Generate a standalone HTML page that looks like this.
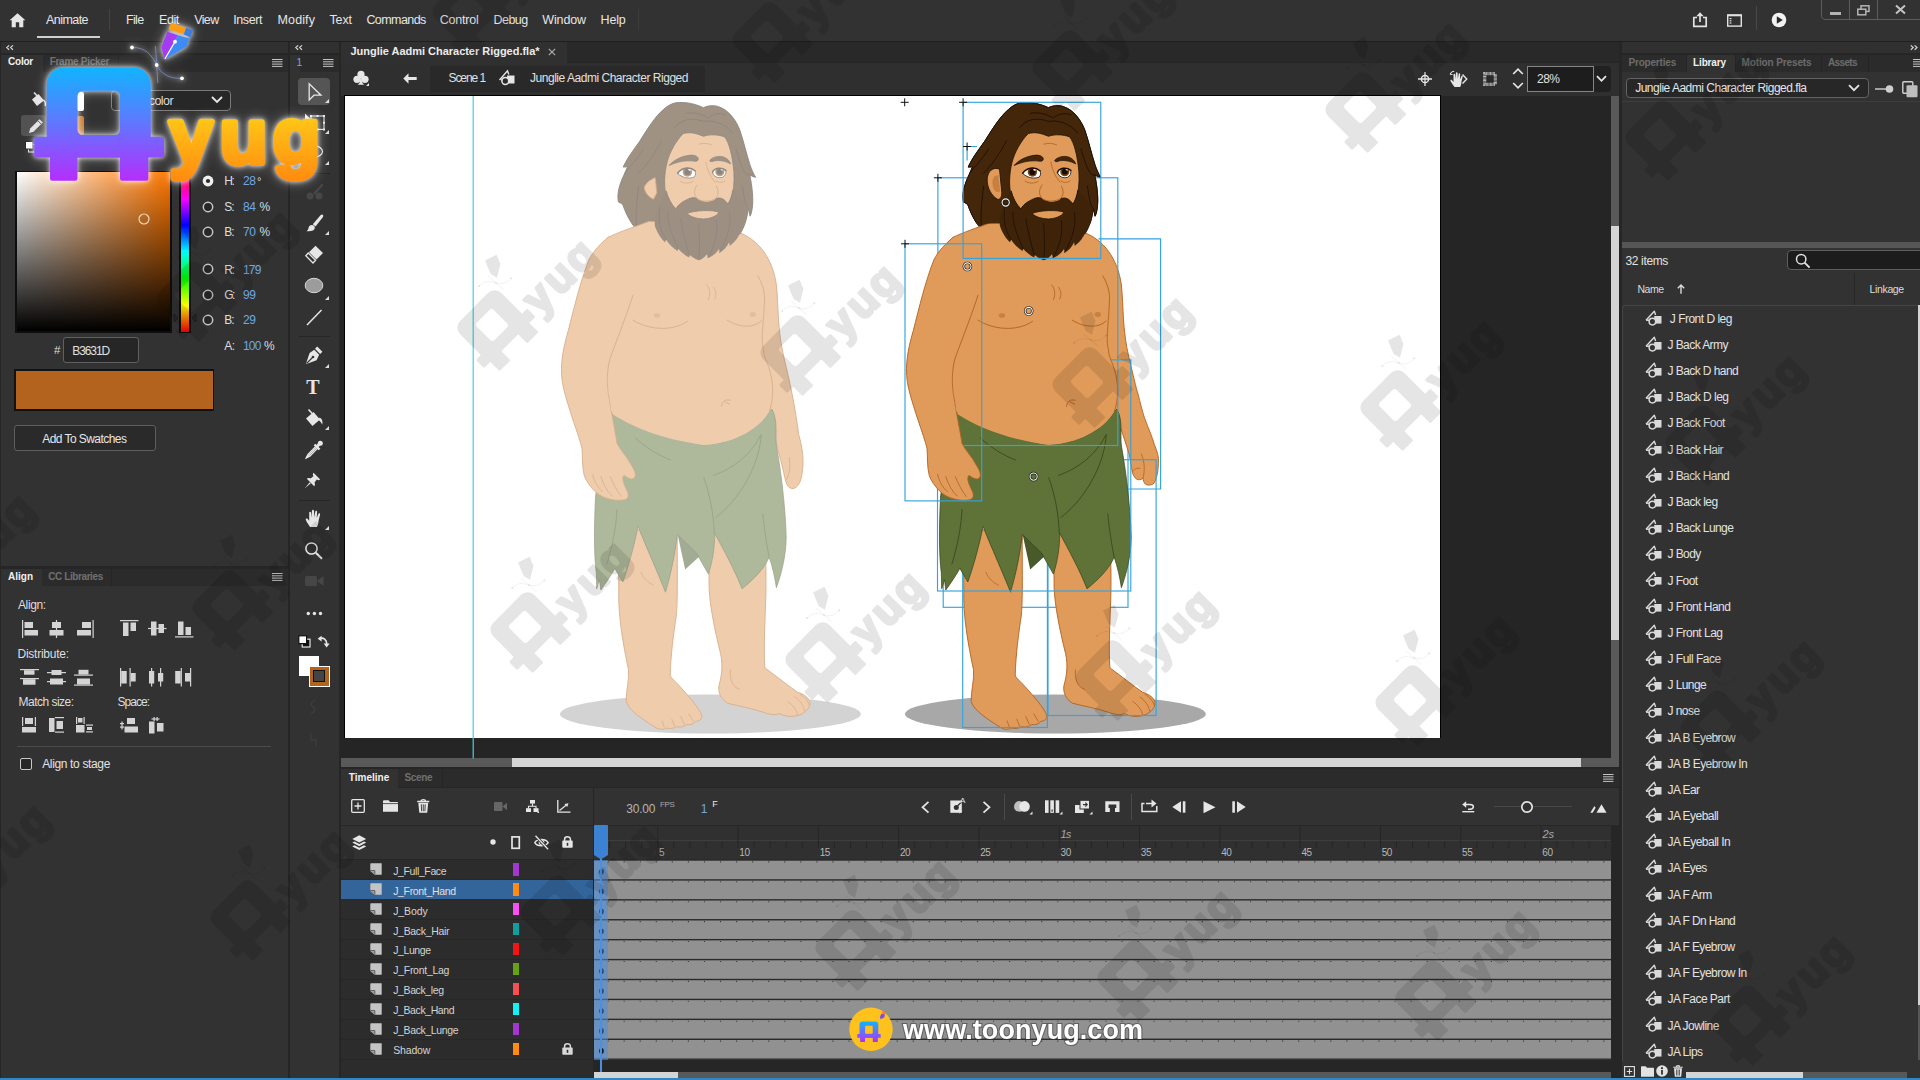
<!DOCTYPE html>
<html lang="en">
<head>
<meta charset="utf-8">
<title>Junglie Aadmi Character Rigged.fla - Animate</title>
<style>
*{box-sizing:border-box;margin:0;padding:0}
html,body{width:1920px;height:1080px;overflow:hidden;background:#262626}
body{position:relative;font-family:"Liberation Sans",sans-serif;font-size:12px;color:#dcdcdc;-webkit-font-smoothing:antialiased}
.abs{position:absolute}
.t{position:absolute;white-space:nowrap;line-height:1}
svg{position:absolute;overflow:visible}
#topbar{left:0;top:0;width:1920px;height:41px;background:#323232}
.menu{font-size:13.5px;color:#e4e4e4;top:13px;letter-spacing:-0.45px}
.panel{background:#323232}
.tabrow{background:#2a2a2a}
.tab{position:absolute;top:0;height:100%;font-size:11.5px;font-weight:bold;letter-spacing:-0.4px;line-height:19px;padding:0 6px;white-space:nowrap}
.tab.on{background:#323232;color:#ededed}
.tab.off{color:#6f6f6f;border-right:1px solid #333}
.burger{position:absolute;width:11px;height:9px;background:repeating-linear-gradient(#bdbdbd 0 1px,transparent 1px 2.67px)}
</style>
</head>
<body>

<!-- 10_topbar.py -->
<div id="topbar" class="abs"></div>
<div class="abs" style="left:0px;top:41px;width:1920px;height:1px;background:#1f1f1f;"></div>
<svg style="left:9px;top:12px" width="17" height="16" viewBox="0 0 17 16"><path d="M8.5 1.2 L16.4 8.3 H14.3 V15.2 H10.2 V10.3 H6.8 V15.2 H2.7 V8.3 H0.6 Z" fill="#e6e6e6"/></svg>
<div class="t" style="left:46.00px;top:13.75px;font-size:12.5px;color:#e6e6e6;letter-spacing:-0.551px;">Animate</div>
<div class="abs" style="left:37px;top:35.5px;width:62.5px;height:2px;background:#cfcfcf;"></div>
<div class="abs" style="left:109px;top:9px;width:1px;height:21px;background:#434343;"></div>
<div class="t" style="left:126.00px;top:13.75px;font-size:12.5px;color:#e6e6e6;letter-spacing:-0.660px;">File</div>
<div class="t" style="left:159.00px;top:13.75px;font-size:12.5px;color:#e6e6e6;letter-spacing:-0.435px;">Edit</div>
<div class="t" style="left:194.20px;top:13.75px;font-size:12.5px;color:#e6e6e6;letter-spacing:-0.617px;">View</div>
<div class="t" style="left:233.20px;top:13.75px;font-size:12.5px;color:#e6e6e6;letter-spacing:-0.410px;">Insert</div>
<div class="t" style="left:277.60px;top:13.75px;font-size:12.5px;color:#e6e6e6;letter-spacing:0.098px;">Modify</div>
<div class="t" style="left:329.50px;top:13.75px;font-size:12.5px;color:#e6e6e6;letter-spacing:-0.156px;">Text</div>
<div class="t" style="left:366.40px;top:13.75px;font-size:12.5px;color:#e6e6e6;letter-spacing:-0.576px;">Commands</div>
<div class="t" style="left:439.80px;top:13.75px;font-size:12.5px;color:#e6e6e6;letter-spacing:-0.228px;">Control</div>
<div class="t" style="left:493.60px;top:13.75px;font-size:12.5px;color:#e6e6e6;letter-spacing:-0.566px;">Debug</div>
<div class="t" style="left:542.20px;top:13.75px;font-size:12.5px;color:#e6e6e6;letter-spacing:-0.110px;">Window</div>
<div class="t" style="left:600.50px;top:13.75px;font-size:12.5px;color:#e6e6e6;letter-spacing:-0.152px;">Help</div>
<div class="abs" style="left:638px;top:9px;width:1px;height:21px;background:#3c3c3c;"></div>
<svg style="left:1692px;top:11px" width="16" height="17" viewBox="0 0 16 17"><path d="M5 6.5H1.8V15.3H14.2V6.5H11" fill="none" stroke="#e2e2e2" stroke-width="1.7"/><path d="M8 11V2.2" stroke="#e2e2e2" stroke-width="1.7"/><path d="M4.3 5.3L8 1.2L11.7 5.3Z" fill="#e2e2e2"/></svg>
<svg style="left:1727px;top:14px" width="15" height="13" viewBox="0 0 15 13"><rect x="0.7" y="0.9" width="13.6" height="11.2" fill="none" stroke="#e2e2e2" stroke-width="1.4"/><rect x="0.7" y="0.7" width="13.6" height="1.6" fill="#e2e2e2"/><rect x="2.6" y="4" width="1.8" height="1.2" fill="#e2e2e2"/><rect x="2.6" y="6.2" width="1.8" height="1.2" fill="#e2e2e2"/><rect x="2.6" y="8.4" width="1.8" height="1.2" fill="#e2e2e2"/></svg>
<div class="abs" style="left:1756px;top:6px;width:1px;height:24px;background:#484848;"></div>
<svg style="left:1771px;top:12px" width="16" height="16" viewBox="0 0 16 16"><circle cx="8" cy="8" r="7.3" fill="#f2f2f2"/><path d="M5.8 4.3L11.8 8L5.8 11.7Z" fill="#2a2a2a"/></svg>
<div class="abs" style="left:1821px;top:-2px;width:101px;height:22px;border:1px solid #5c5c5c;border-radius:0 0 0 4px;background:#323232"></div>
<div class="abs" style="left:1849px;top:0px;width:1px;height:19px;background:#5c5c5c;"></div>
<div class="abs" style="left:1877px;top:0px;width:1px;height:19px;background:#5c5c5c;"></div>
<div class="abs" style="left:1830px;top:11.5px;width:10.5px;height:3px;background:#b4b4b4;"></div>
<svg style="left:1857px;top:5px" width="13" height="11" viewBox="0 0 13 11"><rect x="4" y="0.8" width="8" height="5.6" fill="none" stroke="#b4b4b4" stroke-width="1.5"/><rect x="0.8" y="4.2" width="8" height="5.6" fill="#323232" stroke="#b4b4b4" stroke-width="1.5"/></svg>
<svg style="left:1895px;top:5px" width="11" height="9" viewBox="0 0 11 9"><path d="M1 0.5L10 8.5M10 0.5L1 8.5" stroke="#c4c4c4" stroke-width="2"/></svg>
<!-- 20_leftdock.py -->
<div class="abs" style="left:1px;top:42px;width:286.5px;height:11px;background:#303030;"></div>
<svg style="left:6px;top:45px" width="8" height="6" viewBox="0 0 8 6"><path d="M3.2 .4L.8 2.6L3.2 4.8M7 .4L4.6 2.6L7 4.8" fill="none" stroke="#d8d8d8" stroke-width="1.2"/></svg>
<div class="abs" style="left:1px;top:54.5px;width:286.5px;height:17px;background:#2b2b2b;"></div>
<div class="abs" style="left:1px;top:54.5px;width:41.5px;height:18px;background:#323232;"></div>
<div class="abs" style="left:118px;top:54.5px;width:1px;height:17px;background:#252525;"></div>
<div class="abs" style="left:1px;top:71.5px;width:286.5px;height:494px;background:#323232;"></div>
<div class="t" style="left:8.00px;top:57.00px;font-size:10px;color:#f0f0f0;letter-spacing:-0.223px;font-weight:bold;">Color</div>
<div class="t" style="left:49.70px;top:57.00px;font-size:10px;color:#707070;letter-spacing:-0.286px;font-weight:bold;">Frame Picker</div>
<svg style="left:272px;top:58.5px" width="10.5" height="8" viewBox="0 0 10.5 8"><path d="M0 .5H10.5M0 2.8H10.5M0 5.1H10.5M0 7.4H10.5" stroke="#c4c4c4" stroke-width="1"/></svg>
<svg style="left:27px;top:90px" width="20" height="20" viewBox="0 0 20 20"><path d="M5 9.5L11.5 4L17 10.5L10 16Z" fill="#e4e4e4"/><path d="M7 2.5L12 8" stroke="#e4e4e4" stroke-width="1.6" fill="none"/><path d="M16.5 10C18.5 12 19 14 18 16" stroke="#e4e4e4" stroke-width="1.4" fill="none"/></svg>
<div class="abs" style="left:21px;top:115px;width:25px;height:21px;background:#525252;border-radius:3px"></div>
<svg style="left:27px;top:117px" width="18" height="18" viewBox="0 0 18 18"><path d="M2 16L3.2 11.5L12.5 2.2L15.8 5.5L6.5 14.8Z" fill="#e4e4e4"/><path d="M11 3.8L14.2 7" stroke="#525252" stroke-width="1"/></svg>
<svg style="left:25px;top:141px" width="12" height="12" viewBox="0 0 12 12"><rect x="3.5" y="3.5" width="7.5" height="7.5" fill="none" stroke="#e4e4e4" stroke-width="1"/><rect x=".5" y=".5" width="7.5" height="7.5" fill="#fff" stroke="#222" stroke-width="1"/></svg>
<div class="abs" style="left:77px;top:92px;width:7px;height:19px;background:#ffffff;border-radius:2px"></div>
<div class="abs" style="left:77px;top:116px;width:7px;height:19px;background:#c97a2e;border-radius:2px"></div>
<div class="abs" style="left:111px;top:90px;width:120px;height:21px;border:1px solid #7a7a7a;border-radius:4px;background:#272727"></div>
<div class="t" style="left:121.00px;top:94.75px;font-size:12.5px;color:#dcdcdc;letter-spacing:-0.578px;">Solid color</div>
<svg style="left:211px;top:96px" width="12" height="8" viewBox="0 0 12 8"><path d="M1 1L6 6L11 1" fill="none" stroke="#e8e8e8" stroke-width="1.8"/></svg>
<div class="abs" style="left:15px;top:170.5px;width:157px;height:162.5px;background:#0e0e0e;"></div>
<div class="abs" style="left:17px;top:172px;width:153px;height:159px;background:linear-gradient(to top,#000,rgba(0,0,0,0)),linear-gradient(to right,#fff,#ff7700)"></div>
<svg style="left:138px;top:213px" width="12" height="12"><circle cx="6" cy="6" r="5" fill="none" stroke="#ead9c4" stroke-width="1.2"/></svg>
<div class="abs" style="left:179px;top:170.5px;width:11.5px;height:162.5px;background:#0e0e0e;"></div>
<div class="abs" style="left:180.5px;top:172px;width:8.5px;height:159.5px;background:linear-gradient(to bottom,#f00 0%,#f0f 16.6%,#00f 33.3%,#0ff 50%,#0f0 66.6%,#ff0 83.3%,#f00 100%)"></div>
<svg style="left:173px;top:313px" width="24" height="10" viewBox="0 0 24 10"><path d="M1 1L5 5L1 9Z M23 1L19 5L23 9Z" fill="#2a2a2a" stroke="#1c1c1c" stroke-width=".8"/></svg>
<svg style="left:201.8px;top:174.8px" width="12" height="12"><circle cx="6" cy="6" r="5.4" fill="#efefef"/><circle cx="6" cy="6" r="2.1" fill="#2a2a2a"/></svg>
<div class="t" style="left:224.20px;top:175.40px;font-size:12px;color:#dedede;letter-spacing:-1.250px;">H:</div>
<div class="t" style="left:243.00px;top:175.40px;font-size:12px;color:#6fa8e6;letter-spacing:-0.524px;">28</div>
<div class="t" style="left:257.00px;top:175.50px;font-size:11px;color:#dedede;">°</div>
<svg style="left:201.8px;top:200.7px" width="12" height="12"><circle cx="6" cy="6" r="4.7" fill="#272727" stroke="#c6c6c6" stroke-width="1.5"/></svg>
<div class="t" style="left:224.20px;top:201.30px;font-size:12px;color:#dedede;letter-spacing:-0.919px;">S:</div>
<div class="t" style="left:243.00px;top:201.30px;font-size:12px;color:#6fa8e6;letter-spacing:-0.524px;">84</div>
<div class="t" style="left:259.50px;top:201.30px;font-size:12px;color:#dedede;">%</div>
<svg style="left:201.8px;top:225.7px" width="12" height="12"><circle cx="6" cy="6" r="4.7" fill="#272727" stroke="#c6c6c6" stroke-width="1.5"/></svg>
<div class="t" style="left:224.20px;top:226.30px;font-size:12px;color:#dedede;letter-spacing:-0.919px;">B:</div>
<div class="t" style="left:243.00px;top:226.30px;font-size:12px;color:#6fa8e6;letter-spacing:-0.524px;">70</div>
<div class="t" style="left:259.50px;top:226.30px;font-size:12px;color:#dedede;">%</div>
<svg style="left:201.8px;top:263.2px" width="12" height="12"><circle cx="6" cy="6" r="4.7" fill="#272727" stroke="#c6c6c6" stroke-width="1.5"/></svg>
<div class="t" style="left:224.20px;top:263.80px;font-size:12px;color:#dedede;letter-spacing:-1.250px;">R:</div>
<div class="t" style="left:243.00px;top:263.80px;font-size:12px;color:#6fa8e6;letter-spacing:-0.840px;">179</div>
<svg style="left:201.8px;top:288.7px" width="12" height="12"><circle cx="6" cy="6" r="4.7" fill="#272727" stroke="#c6c6c6" stroke-width="1.5"/></svg>
<div class="t" style="left:224.20px;top:289.30px;font-size:12px;color:#dedede;letter-spacing:-1.584px;">G:</div>
<div class="t" style="left:243.00px;top:289.30px;font-size:12px;color:#6fa8e6;letter-spacing:-0.524px;">99</div>
<svg style="left:201.8px;top:313.7px" width="12" height="12"><circle cx="6" cy="6" r="4.7" fill="#272727" stroke="#c6c6c6" stroke-width="1.5"/></svg>
<div class="t" style="left:224.20px;top:314.30px;font-size:12px;color:#dedede;letter-spacing:-0.919px;">B:</div>
<div class="t" style="left:243.00px;top:314.30px;font-size:12px;color:#6fa8e6;letter-spacing:-0.524px;">29</div>
<div class="t" style="left:224.20px;top:340.20px;font-size:12px;color:#dedede;letter-spacing:-0.419px;">A:</div>
<div class="t" style="left:243.00px;top:340.20px;font-size:12px;color:#6fa8e6;letter-spacing:-0.840px;">100</div>
<div class="t" style="left:264.00px;top:340.20px;font-size:12px;color:#dedede;">%</div>
<div class="t" style="left:54.00px;top:345.25px;font-size:11.5px;color:#dcdcdc;">#</div>
<div class="abs" style="left:63px;top:337px;width:76px;height:25.5px;border:1px solid #606060;border-radius:3px;background:#262626"></div>
<div class="t" style="left:72.20px;top:344.50px;font-size:12px;color:#e0e0e0;letter-spacing:-1.061px;">B3631D</div>
<div class="abs" style="left:14px;top:368.5px;width:200px;height:42px;background:#121212;"></div>
<div class="abs" style="left:15.5px;top:370.5px;width:197px;height:38px;background:#b3631d;"></div>
<div class="abs" style="left:14px;top:425px;width:142px;height:26px;border:1px solid #5e5e5e;border-radius:3px;background:#2a2a2a"></div>
<div class="t" style="left:42.20px;top:433.00px;font-size:12px;color:#e6e6e6;letter-spacing:-0.553px;">Add To Swatches</div>
<!-- 22_align.py -->
<div class="abs" style="left:1px;top:568.5px;width:286.5px;height:17.5px;background:#2b2b2b;"></div>
<div class="abs" style="left:1px;top:568.5px;width:40.5px;height:18px;background:#323232;"></div>
<div class="abs" style="left:111px;top:568.5px;width:1px;height:17.5px;background:#252525;"></div>
<div class="abs" style="left:1px;top:586px;width:286.5px;height:493px;background:#323232;"></div>
<div class="t" style="left:8.00px;top:571.50px;font-size:10px;color:#f0f0f0;font-weight:bold;">Align</div>
<div class="t" style="left:48.30px;top:571.50px;font-size:10px;color:#707070;letter-spacing:-0.415px;font-weight:bold;">CC Libraries</div>
<svg style="left:272px;top:573px" width="10.5" height="8" viewBox="0 0 10.5 8"><path d="M0 .5H10.5M0 2.8H10.5M0 5.1H10.5M0 7.4H10.5" stroke="#c4c4c4" stroke-width="1"/></svg>
<div class="t" style="left:18.00px;top:599.00px;font-size:12px;color:#dedede;letter-spacing:-0.386px;">Align:</div>
<svg style="left:22px;top:619.5px" width="17" height="18" viewBox="0 0 17 18" fill="#d4d4d4"><rect x="0" y="0" width="1.2" height="18"/><rect x="2.5" y="2" width="8.5" height="6"/><rect x="2.5" y="10" width="13.5" height="5.5"/></svg>
<svg style="left:49px;top:619.5px" width="15" height="18" viewBox="0 0 15 18" fill="#d4d4d4"><rect x="6.9" y="0" width="1.2" height="18"/><rect x="3" y="2" width="9" height="6"/><rect x="0.5" y="10" width="14" height="5.5"/></svg>
<svg style="left:76.5px;top:619.5px" width="17" height="18" viewBox="0 0 17 18" fill="#d4d4d4"><rect x="15.5" y="0" width="1.2" height="18"/><rect x="5" y="2" width="9" height="6"/><rect x="0" y="10" width="14" height="5.5"/></svg>
<svg style="left:120px;top:619.5px" width="19" height="18" viewBox="0 0 19 18" fill="#d4d4d4"><rect x="0" y="0" width="18.5" height="1.2"/><rect x="3" y="2.5" width="5.5" height="13.5"/><rect x="10.5" y="2.5" width="5.5" height="8.5"/></svg>
<svg style="left:147.5px;top:619.5px" width="19" height="18" viewBox="0 0 19 18" fill="#d4d4d4"><rect x="0" y="7.9" width="18.5" height="1.2"/><rect x="3" y="1.5" width="5.5" height="14"/><rect x="10.5" y="4" width="5.5" height="9"/></svg>
<svg style="left:174.5px;top:619.5px" width="19" height="18" viewBox="0 0 19 18" fill="#d4d4d4"><rect x="0" y="16.3" width="18.5" height="1.2"/><rect x="3" y="1.5" width="5.5" height="13.5"/><rect x="10.5" y="7" width="5.5" height="8"/></svg>
<div class="t" style="left:17.50px;top:648.00px;font-size:12px;color:#dedede;letter-spacing:-0.247px;">Distribute:</div>
<svg style="left:19.5px;top:667.5px" width="19" height="18" viewBox="0 0 19 18" fill="#d4d4d4"><rect x="0" y="1" width="19" height="1.2"/><rect x="4" y="2.2" width="10.5" height="4.5"/><rect x="0" y="10" width="19" height="1.2"/><rect x="3" y="11.2" width="12.5" height="5.5"/></svg>
<svg style="left:46.8px;top:667.5px" width="19" height="18" viewBox="0 0 19 18" fill="#d4d4d4"><rect x="0" y="4" width="19" height="1.2"/><rect x="4.5" y="2" width="10" height="5"/><rect x="0" y="13" width="19" height="1.2"/><rect x="3" y="10.5" width="13" height="6"/></svg>
<svg style="left:74px;top:667.5px" width="19" height="18" viewBox="0 0 19 18" fill="#d4d4d4"><rect x="0" y="6.5" width="19" height="1.2"/><rect x="4.5" y="1.8" width="10" height="4.7"/><rect x="0" y="16.5" width="19" height="1.2"/><rect x="3" y="10.5" width="13" height="6"/></svg>
<svg style="left:120px;top:667.5px" width="18" height="19" viewBox="0 0 18 19" fill="#d4d4d4"><rect x="0" y="0" width="1.2" height="18.5"/><rect x="1.2" y="3" width="5.5" height="12.5"/><rect x="9.5" y="0" width="1.2" height="18.5"/><rect x="10.7" y="5" width="5" height="8.5"/></svg>
<svg style="left:147.5px;top:667.5px" width="17" height="19" viewBox="0 0 17 19" fill="#d4d4d4"><rect x="3" y="0" width="1.2" height="18.5"/><rect x="1" y="3" width="5.2" height="12.5"/><rect x="12" y="0" width="1.2" height="18.5"/><rect x="10" y="5" width="5.2" height="8.5"/></svg>
<svg style="left:174px;top:667.5px" width="18" height="19" viewBox="0 0 18 19" fill="#d4d4d4"><rect x="6.7" y="0" width="1.2" height="18.5"/><rect x="1.2" y="3" width="5.5" height="12.5"/><rect x="16" y="0" width="1.2" height="18.5"/><rect x="11" y="5" width="5" height="8.5"/></svg>
<div class="t" style="left:18.50px;top:695.80px;font-size:12px;color:#dedede;letter-spacing:-0.517px;">Match size:</div>
<div class="t" style="left:117.50px;top:695.80px;font-size:12px;color:#dedede;letter-spacing:-0.977px;">Space:</div>
<svg style="left:22.4px;top:716.5px" width="14" height="16" viewBox="0 0 14 16" fill="#d4d4d4"><rect x="0" y="0" width="1.2" height="9"/><rect x="12.8" y="0" width="1.2" height="9"/><rect x="3" y="1" width="8" height="6"/><rect x="0" y="10" width="14" height="5.5"/></svg>
<svg style="left:49.4px;top:716.5px" width="15" height="16" viewBox="0 0 15 16" fill="#d4d4d4"><rect x="0" y="1" width="5.5" height="14"/><rect x="6" y="0" width="9" height="1.2"/><rect x="6" y="14.5" width="9" height="1.2"/><rect x="7.5" y="4" width="6.5" height="8"/></svg>
<svg style="left:76px;top:716.5px" width="17" height="16" viewBox="0 0 17 16" fill="#d4d4d4"><rect x="0" y="0" width="1.2" height="7"/><rect x="7.5" y="0" width="1.2" height="7"/><rect x="2" y="1" width="4.5" height="4.5"/><rect x="0" y="8" width="8.5" height="7.5"/><rect x="10" y="7.5" width="7" height="1.2"/><rect x="10" y="14.3" width="7" height="1.2"/><rect x="11" y="10" width="5" height="3"/></svg>
<svg style="left:120px;top:716.5px" width="18" height="16" viewBox="0 0 18 16" fill="#d4d4d4"><rect x="7" y="1" width="8" height="6"/><rect x="4.5" y="9.5" width="13.5" height="6"/><rect x="1.4" y="4.5" width="1.2" height="8"/><rect x="0" y="6" width="4" height="1.2"/><rect x="0" y="9.5" width="4" height="1.2"/></svg>
<svg style="left:148.4px;top:716.5px" width="17" height="17" viewBox="0 0 17 17" fill="#d4d4d4"><rect x="1" y="4.5" width="5.5" height="12"/><rect x="9" y="6" width="6.5" height="8.5"/><rect x="3.5" y="1.4" width="8" height="1.2"/><rect x="5.5" y="0" width="1.2" height="4"/><rect x="8.5" y="0" width="1.2" height="4"/></svg>
<div class="abs" style="left:16.5px;top:746px;width:254px;height:1px;background:#4c4c4c;"></div>
<div class="abs" style="left:20px;top:758px;width:12px;height:12px;border:1.6px solid #c8c8c8;border-radius:2px;background:#272727"></div>
<div class="t" style="left:42.20px;top:757.60px;font-size:12px;color:#e2e2e2;letter-spacing:-0.351px;">Align to stage</div>
<!-- 24_tools.py -->
<div class="abs" style="left:290px;top:42px;width:49px;height:11px;background:#303030;"></div>
<svg style="left:295px;top:45px" width="8" height="6" viewBox="0 0 8 6"><path d="M3.2 .4L.8 2.6L3.2 4.8M7 .4L4.6 2.6L7 4.8" fill="none" stroke="#d8d8d8" stroke-width="1.2"/></svg>
<div class="abs" style="left:290px;top:54.5px;width:49px;height:17px;background:#2b2b2b;"></div>
<div class="abs" style="left:290px;top:54.5px;width:10px;height:18px;background:#323232;"></div>
<div class="abs" style="left:290px;top:71.5px;width:49px;height:1007px;background:#323232;"></div>
<div class="t" style="left:296.50px;top:56.75px;font-size:10.5px;color:#6fa8e6;">1</div>
<svg style="left:323px;top:58.5px" width="10.5" height="8" viewBox="0 0 10.5 8"><path d="M0 .5H10.5M0 2.8H10.5M0 5.1H10.5M0 7.4H10.5" stroke="#c4c4c4" stroke-width="1"/></svg>
<div class="abs" style="left:298px;top:77.5px;width:32px;height:27.5px;background:#555555;border-radius:4px"></div>
<svg style="left:306px;top:81px" width="18" height="22" viewBox="0 0 18 22"><path d="M3.2 2.8V19L8 14.2H15Z" fill="none" stroke="#e6e6e6" stroke-width="1.3" stroke-linejoin="miter"/></svg>
<svg style="left:325px;top:99px" width="4" height="4" viewBox="0 0 4 4"><path d="M4 0V4H0Z" fill="#dcdcdc"/></svg>
<svg style="left:304px;top:113px" width="22" height="18" viewBox="0 0 22 18"><rect x="7" y="3" width="13" height="13.4" fill="none" stroke="#e6e6e6" stroke-width="1.1"/><path d="M6 2h2v2h-2zM12.5 2h2v2h-2zM19 2h2v2h-2zM19 8.7h2v2h-2zM19 15.4h2v2h-2zM12.5 15.4h2v2h-2zM6 15.4h2v2h-2z" fill="#e6e6e6"/><path d="M1 0.5L9 8.5H1Z" fill="#e6e6e6"/></svg>
<svg style="left:325px;top:130px" width="4" height="4" viewBox="0 0 4 4"><path d="M4 0V4H0Z" fill="#dcdcdc"/></svg>
<svg style="left:304px;top:144px" width="20" height="16" viewBox="0 0 20 16"><ellipse cx="10" cy="7.5" rx="8.5" ry="5.8" fill="none" stroke="#e6e6e6" stroke-width="1.2"/></svg>
<svg style="left:325px;top:161px" width="4" height="4" viewBox="0 0 4 4"><path d="M4 0V4H0Z" fill="#dcdcdc"/></svg>
<div class="abs" style="left:303px;top:172.5px;width:27px;height:1px;background:#262626;"></div>
<svg style="left:306px;top:183px" width="18" height="17" viewBox="0 0 18 17" fill="#474747"><path d="M16 0.5L17.5 2L9 12L7 10Z"/><circle cx="4" cy="13" r="3.5"/><circle cx="13" cy="13" r="3.5"/></svg>
<svg style="left:306px;top:214px" width="18" height="18" viewBox="0 0 18 18" fill="#e6e6e6"><path d="M16 0.5C17.2 0.5 17.6 1.8 17 3L9.5 12.5L6.8 10.2L14.5 1.2C15 0.7 15.5 0.5 16 0.5Z"/><path d="M5.8 11C7.5 11 9 12.3 8.8 14C8.5 16.5 5 17.8 0.5 17.2C2.5 16 2.2 14.5 2.8 13C3.3 11.8 4.5 11 5.8 11Z"/></svg>
<svg style="left:325px;top:231px" width="4" height="4" viewBox="0 0 4 4"><path d="M4 0V4H0Z" fill="#dcdcdc"/></svg>
<svg style="left:305px;top:245px" width="19" height="19" viewBox="0 0 19 19"><path d="M10.5 0.8L18 8L11.5 14.5L4 7.2Z" fill="#e6e6e6"/><path d="M3.2 8L10.6 15.3L8 18L0.8 10.8Z" fill="none" stroke="#e6e6e6" stroke-width="1.3"/></svg>
<svg style="left:304px;top:277px" width="20" height="17" viewBox="0 0 20 17"><ellipse cx="10" cy="8.5" rx="8.8" ry="7.2" fill="#9c9c9c" stroke="#d8d8d8" stroke-width="1"/></svg>
<svg style="left:325px;top:296px" width="4" height="4" viewBox="0 0 4 4"><path d="M4 0V4H0Z" fill="#dcdcdc"/></svg>
<svg style="left:306px;top:309px" width="17" height="17" viewBox="0 0 17 17"><path d="M1 16L15.5 1" stroke="#e6e6e6" stroke-width="1.5"/></svg>
<div class="abs" style="left:299px;top:336px;width:31px;height:1px;background:#262626;"></div>
<svg style="left:305px;top:346px" width="18" height="19" viewBox="0 0 18 19" fill="#e6e6e6"><path d="M12.2 0.6L17.4 5.8L15.2 8L10 2.8Z"/><path d="M9.2 3.8L14.2 8.8L11.5 14.2L0.8 18.2L4.6 7Z"/><path d="M1.5 17.5L7.5 11.5" stroke="#323232" stroke-width="1.1"/><circle cx="8" cy="11" r="1.3" fill="#323232"/></svg>
<svg style="left:325px;top:364px" width="4" height="4" viewBox="0 0 4 4"><path d="M4 0V4H0Z" fill="#dcdcdc"/></svg>
<div class="t" style="left:306.30px;top:377.00px;font-size:20px;color:#e6e6e6;font-weight:bold;font-family:'Liberation Serif',serif;">T</div>
<svg style="left:305px;top:408px" width="19" height="19" viewBox="0 0 19 19" fill="#e6e6e6"><path d="M1 10.5L8.5 4L15 11.5L7.5 18Z"/><path d="M3.5 1.5L9.5 8" stroke="#e6e6e6" stroke-width="1.6" fill="none"/><path d="M14.5 9.5C16.8 10.5 18 13 17.3 16.5C16 15 15.5 13 13.5 12Z"/></svg>
<svg style="left:325px;top:426px" width="4" height="4" viewBox="0 0 4 4"><path d="M4 0V4H0Z" fill="#dcdcdc"/></svg>
<svg style="left:305px;top:440px" width="19" height="19" viewBox="0 0 19 19"><path d="M12 7L4 15C3 16 2 16.5 1.6 17.6C2.8 17.2 3.2 16.2 4.2 15.2" fill="none" stroke="#e6e6e6" stroke-width="1.3"/><path d="M11 6.3L3 14.3L1.3 17.8L4.8 16.1L12.8 8.1" fill="none" stroke="#e6e6e6" stroke-width="1.3"/><path d="M9.5 4.5L14.5 9.5" stroke="#e6e6e6" stroke-width="2.4"/><path d="M12 6.5L15.2 3.3" stroke="#e6e6e6" stroke-width="3"/><circle cx="15.3" cy="3.2" r="2.5" fill="#e6e6e6"/></svg>
<svg style="left:304px;top:472px" width="17" height="17" viewBox="0 0 17 17" fill="#e6e6e6"><path d="M9.5 0.8L16.2 7.5L14.6 8.2L12.8 7.6L10.5 10.5C11.2 12 11 13.3 10.2 14.2L2.8 6.8C3.7 6 5 5.8 6.5 6.5L9.4 4.2L8.8 2.4Z"/><path d="M5.8 10.2L6.8 11.2L0.6 16.4Z"/></svg>
<div class="abs" style="left:299px;top:500px;width:31px;height:1px;background:#262626;"></div>
<svg style="left:305px;top:509px" width="18" height="19" viewBox="0 0 18 19" fill="#e6e6e6"><path d="M5 18C3.5 15.5 1.5 13 0.8 10.8C0.5 9.6 1.8 9 2.7 9.9L4.2 11.8V3.6C4.2 2.3 6 2.3 6.1 3.6L6.5 8.5L7 1.8C7.1 0.5 8.9 0.5 9 1.8L9.2 8.5L10.3 2.6C10.5 1.3 12.2 1.6 12.1 2.9L11.7 9L13.4 4.8C13.9 3.6 15.4 4.2 15.1 5.4L13.6 11.5C13.4 14 13 16 12 18Z"/></svg>
<svg style="left:325px;top:526px" width="4" height="4" viewBox="0 0 4 4"><path d="M4 0V4H0Z" fill="#dcdcdc"/></svg>
<svg style="left:304px;top:541px" width="20" height="19" viewBox="0 0 20 19"><circle cx="7.5" cy="7.5" r="5.6" fill="none" stroke="#e6e6e6" stroke-width="1.5"/><path d="M11.8 11.8L18 17.8" stroke="#e6e6e6" stroke-width="2"/></svg>
<svg style="left:305px;top:575px" width="19" height="12" viewBox="0 0 19 12" fill="#464646"><rect x="0" y="1" width="12" height="10" rx="1.5"/><path d="M12 6L18.5 1V11Z"/></svg>
<svg style="left:306px;top:611px" width="17" height="5" viewBox="0 0 17 5" fill="#e6e6e6"><circle cx="2.3" cy="2.5" r="1.7"/><circle cx="8.4" cy="2.5" r="1.7"/><circle cx="14.5" cy="2.5" r="1.7"/></svg>
<svg style="left:298px;top:635px" width="13" height="13" viewBox="0 0 13 13"><rect x="4.2" y="4.2" width="7.8" height="7.8" fill="#111" stroke="#e6e6e6" stroke-width="1.2"/><rect x="0.8" y="0.8" width="7.8" height="7.8" fill="#fff" stroke="#111" stroke-width="1.2"/></svg>
<svg style="left:317px;top:635px" width="13" height="13" viewBox="0 0 13 13"><path d="M2.5 3.5C6.5 2.2 9.8 4.5 9.8 9.5" fill="none" stroke="#e6e6e6" stroke-width="1.6"/><path d="M0.6 3.8L4.6 0.8V6.6Z" fill="#e6e6e6"/><path d="M6.6 8.5H12.6L9.6 12.6Z" fill="#e6e6e6"/></svg>
<div class="abs" style="left:299px;top:655.5px;width:20px;height:20.5px;background:#ffffff;"></div>
<div class="abs" style="left:308.5px;top:665.5px;width:21px;height:21px;background:#fff"></div>
<div class="abs" style="left:309.5px;top:666.5px;width:19px;height:19px;background:#b3631d"></div>
<div class="abs" style="left:313px;top:670px;width:12px;height:12px;background:#111"></div>
<div class="abs" style="left:314px;top:671px;width:10px;height:10px;background:#444"></div>
<svg style="left:308px;top:699px" width="10" height="16" viewBox="0 0 10 16"><path d="M8 1C2 3 2 6 5 8C8 10 8 13 2 15" fill="none" stroke="#3d3d3d" stroke-width="1.3"/></svg>
<svg style="left:310px;top:732px" width="8" height="16" viewBox="0 0 8 16"><path d="M1 1V8H6V15" fill="none" stroke="#3d3d3d" stroke-width="1.3"/></svg>
<!-- 30_stagechrome.py -->
<div class="abs" style="left:341px;top:42px;width:1278px;height:20px;background:#292929;"></div>
<div class="abs" style="left:341px;top:42px;width:225.5px;height:20.5px;background:#303030;"></div>
<div class="t" style="left:350.50px;top:46.00px;font-size:11px;color:#ececec;letter-spacing:-0.020px;font-weight:bold;">Junglie Aadmi Character Rigged.fla*</div>
<svg style="left:548px;top:48px" width="8" height="8" viewBox="0 0 8 8"><path d="M.8 .8L7.2 7.2M7.2 .8L.8 7.2" stroke="#b0b0b0" stroke-width="1.1"/></svg>
<div class="abs" style="left:341px;top:62.5px;width:1278px;height:33px;background:#2f2f2f;"></div>
<div class="abs" style="left:430px;top:66px;width:275px;height:25.5px;background:#292929;border-radius:2px"></div>
<svg style="left:353px;top:70px" width="17" height="17" viewBox="0 0 17 17" fill="#e6e6e6"><circle cx="8" cy="4.4" r="3.6"/><circle cx="4" cy="9.3" r="3.6"/><circle cx="12" cy="9.3" r="3.6"/><path d="M7.2 8H8.8C8.8 12 9.5 13.5 11.5 14.8H4.5C6.5 13.5 7.2 12 7.2 8Z"/><path d="M16 13V16H13Z"/></svg>
<svg style="left:403px;top:72.5px" width="14" height="11" viewBox="0 0 14 11"><path d="M5.5 0.3L0.3 5.5L5.5 10.7V7H13.7V4H5.5Z" fill="#e6e6e6"/></svg>
<div class="t" style="left:448.50px;top:72.30px;font-size:12px;color:#e0e0e0;letter-spacing:-1.076px;">Scene 1</div>
<svg style="left:498px;top:69px" width="18" height="17" viewBox="0 0 18 17"><path d="M1.5 11L9.5 1.8L10.8 5.5" fill="none" stroke="#e6e6e6" stroke-width="1.4"/><path d="M3 11H8" stroke="#e6e6e6" stroke-width="1.4"/><rect x="9" y="6.5" width="7.5" height="8" fill="#e6e6e6"/><circle cx="7.3" cy="12" r="3.4" fill="#292929" stroke="#e6e6e6" stroke-width="1.5"/></svg>
<div class="t" style="left:530.00px;top:72.30px;font-size:12px;color:#e0e0e0;letter-spacing:-0.470px;">Junglie Aadmi Character Rigged</div>
<svg style="left:1418px;top:71.5px" width="14" height="14" viewBox="0 0 14 14" fill="none" stroke="#e6e6e6"><circle cx="7" cy="7" r="3.6" stroke-width="1.5"/><path d="M7 0V14M0 7H14" stroke-width="1.3"/></svg>
<svg style="left:1449px;top:70px" width="19" height="18" viewBox="0 0 19 18"><path d="M5.5 17C4 15 2.5 13 1.5 11C1.2 10 2.2 9.5 3 10.2L4.5 12V4.5C4.5 3.5 6 3.5 6.1 4.5L6.4 9L6.9 3C7 2 8.5 2 8.6 3L8.8 9L9.7 3.8C9.9 2.8 11.3 3 11.2 4L10.9 9.5L12.3 6.2C12.7 5.3 14 5.8 13.7 6.7L12.5 11.5C12.3 14 12 15.5 11.2 17Z" fill="#e6e6e6"/><path d="M13.5 4.5L17.8 9L13.5 13.5" fill="none" stroke="#e6e6e6" stroke-width="1.4"/><path d="M2.5 2.2L1 4.2L3.5 4.5M1.2 4C2 2.2 3.5 1.2 5.2 1.4" fill="none" stroke="#e6e6e6" stroke-width="1"/></svg>
<svg style="left:1483px;top:71.5px" width="14" height="14" viewBox="0 0 14 14"><rect x="1.7" y="1.7" width="10.6" height="10.6" fill="#2a2a2a" stroke="#b4b4b4" stroke-width="3.2" stroke-dasharray="0.9 0.45"/></svg>
<svg style="left:1512px;top:67px" width="12" height="23" viewBox="0 0 12 23" fill="none" stroke="#e6e6e6" stroke-width="1.7"><path d="M1.2 7L6 2.2L10.8 7"/><path d="M1.2 16L6 20.8L10.8 16"/></svg>
<div class="abs" style="left:1527px;top:66px;width:66.5px;height:25.5px;border:1px solid #858585;background:#1d1d1d"></div>
<div class="t" style="left:1537.00px;top:72.80px;font-size:12px;color:#e2e2e2;letter-spacing:-0.506px;">28%</div>
<div class="abs" style="left:1593.5px;top:66px;width:17px;height:25.5px;background:#212121;border-radius:0 4px 4px 0"></div>
<svg style="left:1596px;top:74.5px" width="11" height="8" viewBox="0 0 11 8"><path d="M1 1.2L5.5 5.8L10 1.2" fill="none" stroke="#e6e6e6" stroke-width="1.8"/></svg>
<div class="abs" style="left:341px;top:95.5px;width:1269.5px;height:662.5px;background:#252525;"></div>
<div class="abs" style="left:344px;top:95px;width:1097px;height:643px;background:#000;"></div>
<div class="abs" style="left:345px;top:96px;width:1095px;height:641.5px;background:#ffffff;"></div>
<div class="abs" style="left:1610.5px;top:95.5px;width:8px;height:671.5px;background:#595959;"></div>
<div class="abs" style="left:1610.5px;top:226px;width:8px;height:414px;background:#d4d4d4;"></div>
<div class="abs" style="left:341px;top:758px;width:1277.5px;height:9px;background:#595959;"></div>
<div class="abs" style="left:511.7px;top:758px;width:1069.7px;height:9px;background:#d4d4d4;"></div>
<!-- 35_character.py -->
<svg style="left:341px;top:95.5px" width="1269.5" height="662.5" viewBox="341 95.5 1269.5 662.5">
<defs><clipPath id="hairtop"><rect x="590" y="95" width="200" height="128"/></clipPath>
<clipPath id="eyeL"><path d="M 677.7 172.8 C 680.8 167.6 689.2 165.3 695.0 170.2 C 696.2 172.5 695.7 175.1 694.1 176.7 C 688.9 178.6 681.7 177.3 677.7 172.8 Z"/></clipPath>
<clipPath id="eyeR"><path d="M 712.5 172.1 C 713.8 167.6 721.0 166.0 725.8 169.9 C 726.5 172.5 725.2 175.4 722.6 176.8 C 718.0 178.0 713.8 176.4 712.5 172.1 Z"/></clipPath></defs>
<g opacity="0.5"><ellipse cx="710.4" cy="713.5" rx="150.5" ry="19.5" fill="#a8a8a8"/>
<path d="M 676.1 527.1 L 685.2 569.0 L 698.8 556.6 L 712.5 577.0 L 719.3 527.1 Z" fill="#485a2a"/>
<path d="M 739.7 232.3 C 757.8 239.1 772.6 257.2 776.4 284.5 C 778.7 307.1 777.1 327.6 783.9 357.1 C 789.6 379.8 795.3 407.0 798.7 434.2 C 802.1 445.6 804.4 459.2 802.1 472.8 C 800.9 481.9 797.5 487.5 793.0 488.0 C 788.5 488.2 786.2 484.1 784.6 476.2 C 782.8 466.0 778.3 452.4 776.0 440.8 L 766.9 411.5 L 757.8 320.8 Z" fill="#e09a59" stroke="#b2621f" stroke-width="0.9" stroke-linejoin="round"/>
<path d="M 789.1 456.9 C 790.7 466.0 789.6 473.9 786.2 479.6" fill="none" stroke="#b2621f" stroke-width="0.8" stroke-linecap="round" stroke-linejoin="round"/>
<path d="M 708.2 529.3 C 708.6 552.3 709.1 570.0 709.1 587.7 C 710.0 605.4 714.4 628.4 720.6 653.2 C 723.3 665.6 721.5 676.3 718.9 685.1 C 718.0 692.2 720.6 698.4 727.7 702.8 C 738.3 705.5 752.5 708.1 763.1 711.7 C 770.2 714.3 775.5 714.9 779.1 713.1 C 784.4 715.6 789.7 716.6 795.0 715.6 C 800.3 714.9 803.9 712.6 805.6 710.8 C 809.2 708.1 810.9 703.7 809.5 700.2 C 807.4 695.7 802.1 693.1 797.7 691.8 C 787.9 685.1 777.3 676.3 764.9 667.4 C 763.5 649.7 764.9 623.1 765.8 596.6 C 766.3 578.9 765.8 552.3 764.9 529.3 Z" fill="#e09a59" stroke="#b2621f" stroke-width="0.9" stroke-linejoin="round"/>
<path d="M 730.4 669.2 C 729.5 679.8 733.0 686.9 739.2 688.6" fill="none" stroke="#b2621f" stroke-width="0.8" stroke-linecap="round" stroke-linejoin="round"/>
<path d="M 787.9 701.0 C 793.2 704.6 796.8 709.9 797.7 714.3 M 795.0 696.6 C 800.3 700.2 803.9 705.5 804.7 710.8 M 800.3 694.0 C 804.7 696.6 808.3 701.0 809.2 704.6" fill="none" stroke="#b2621f" stroke-width="0.8" stroke-linecap="round" stroke-linejoin="round"/>
<path d="M 617.9 529.3 C 617.6 552.3 618.8 570.0 618.8 589.5 C 617.9 614.3 623.2 644.4 628.5 669.2 C 629.4 679.8 625.9 690.4 626.2 701.0 C 628.5 709.9 642.7 718.8 656.0 727.3 C 659.5 729.4 664.0 729.0 666.6 727.6 C 670.2 728.5 673.7 728.0 676.4 726.2 C 679.9 727.3 684.3 726.2 686.6 724.1 C 690.5 724.9 694.1 723.2 695.8 720.9 C 700.3 720.5 702.9 717.9 701.5 714.3 C 699.4 708.1 688.8 695.7 679.9 686.0 C 675.5 680.7 671.0 678.0 670.2 674.5 C 670.7 655.0 673.7 632.0 676.4 614.3 C 677.8 596.6 677.2 570.0 677.2 529.3 Z" fill="#e09a59" stroke="#b2621f" stroke-width="0.9" stroke-linejoin="round"/>
<path d="M 662.2 720.5 L 664.3 726.7 M 671.9 718.8 L 674.6 725.8 M 680.8 716.1 L 684.3 723.7 M 688.8 713.4 L 693.4 720.9" fill="none" stroke="#b2621f" stroke-width="0.8" stroke-linecap="round" stroke-linejoin="round"/>
<path d="M 640.9 571.8 C 643.6 578.0 648.0 582.4 653.3 584.5" fill="none" stroke="#b2621f" stroke-width="0.7" stroke-linecap="round" stroke-linejoin="round"/>
<path d="M 611.5 411.3 C 635.3 427.2 667.1 439.0 703.4 444.2 C 732.9 443.1 757.8 429.5 769.2 411.3 L 771.9 408.6 C 778.3 420.4 774.9 434.0 776.4 445.4 C 780.5 468.1 785.1 502.1 786.2 536.1 C 786.2 554.3 781.7 572.5 776.4 587.2 C 774.9 577.0 772.6 566.8 769.2 556.6 C 764.6 567.9 753.3 579.3 742.0 588.3 C 735.1 570.2 723.8 549.8 714.7 532.7 C 714.7 547.5 712.5 561.1 708.4 573.6 C 704.5 566.8 700.0 558.8 696.6 552.5 L 677.3 533.9 C 675.0 554.3 670.5 574.7 665.5 591.7 C 658.0 572.5 646.6 547.5 638.0 525.9 C 634.2 545.2 628.5 565.6 622.8 581.5 C 620.6 577.0 617.1 572.5 614.9 567.9 C 610.3 575.9 605.8 582.7 600.8 589.5 L 599.5 579.3 L 596.7 588.3 L 596.3 572.5 C 594.0 554.3 594.0 527.1 595.6 495.3 C 599.0 474.9 608.1 456.7 612.6 452.2 C 612.2 438.6 610.8 425.0 611.5 411.3 Z" fill="#5f7338" stroke="#33421c" stroke-width="0.7" stroke-linejoin="round"/>
<path d="M 635.3 437.4 C 646.6 447.7 658.0 454.5 670.5 459.5 M 713.6 474.9 C 732.9 468.1 751.0 454.5 761.2 434.0 C 760.1 459.0 744.2 495.3 715.9 516.9 M 703.8 477.1 C 710.2 495.3 713.6 513.5 714.3 532.7 M 617.1 508.9 C 616.0 527.1 612.6 545.2 606.9 563.4 M 762.8 513.5 C 764.6 531.6 766.9 545.2 769.2 556.6" fill="none" stroke="#33421c" stroke-width="0.8" stroke-linecap="round" stroke-linejoin="round"/>
<path d="M 675.9 102.3 C 685.6 101.2 695.3 103.4 703.5 107.2 C 707.5 105.0 714.0 104.4 718.8 106.3 C 728.6 109.6 735.9 119.3 739.9 129.8 C 744.0 142.0 746.4 153.3 750.1 164.7 C 751.8 169.6 753.7 173.6 755.6 176.8 C 753.4 176.4 751.4 175.4 749.8 174.4 C 752.1 185.8 753.7 198.7 752.1 208.5 C 751.8 211.4 751.1 213.6 750.1 215.7 C 749.5 213.0 748.8 210.1 748.0 207.6 C 747.5 218.2 744.0 227.9 738.3 236.0 C 735.9 240.1 732.6 243.3 729.7 245.4 L 729.1 241.7 C 727.0 246.5 723.7 249.8 719.7 252.2 L 719.0 248.6 C 716.4 253.0 712.4 255.8 708.0 257.4 L 707.0 253.8 C 704.3 257.1 701.8 259.0 698.6 259.7 C 695.3 258.7 692.1 256.8 689.7 254.6 L 689.2 257.1 C 684.8 254.6 680.8 251.4 678.3 248.2 L 677.5 250.6 C 672.7 247.4 668.6 243.3 666.2 239.2 L 664.9 241.7 C 660.5 237.6 656.5 231.1 654.8 224.7 C 651.6 224.7 645.1 227.1 637.0 229.2 C 632.1 224.7 626.5 214.9 623.2 205.2 C 622.4 203.6 620.8 202.3 618.5 201.6 C 616.7 193.9 619.2 184.1 624.4 173.6 C 625.3 171.2 626.5 168.7 627.6 166.3 L 623.2 166.6 C 626.5 159.0 632.9 150.1 639.4 141.2 C 646.7 129.8 654.8 116.1 663.7 108.8 C 667.8 105.0 671.8 103.1 675.9 102.3 Z" fill="#44270a" stroke="#1c1006" stroke-width="0.9" stroke-linejoin="round"/>
<path d="M 648.9 220.9 C 630.8 227.7 617.1 232.3 608.1 236.8 C 599.0 243.6 588.8 259.5 584.2 275.4 L 608.1 366.1 C 606.3 379.8 607.6 393.4 612.6 413.8 C 635.3 428.5 667.1 439.9 703.4 444.4 C 732.9 443.3 757.8 429.7 769.2 411.5 C 774.2 397.9 773.3 382.0 769.6 369.6 C 766.9 360.5 763.5 355.9 763.5 349.1 C 760.6 338.9 763.5 325.3 764.6 298.1 C 764.6 289.0 761.2 281.1 757.8 275.4 C 753.3 259.5 748.8 243.6 739.7 232.3 C 726.1 225.5 698.8 220.9 648.9 220.9 Z" fill="#e09a59"/>
<path d="M 648.9 220.9 C 630.8 227.7 617.1 232.3 608.1 236.8" fill="none" stroke="#b2621f" stroke-width="0.9" stroke-linecap="round" stroke-linejoin="round"/>
<path d="M 757.8 275.4 C 761.2 281.1 764.6 289.0 764.6 298.1 C 763.5 325.3 760.6 338.9 763.5 349.1 C 763.5 355.9 766.9 360.5 769.6 369.6 C 773.3 382.0 774.2 397.9 769.2 411.5" fill="none" stroke="#b2621f" stroke-width="0.9" stroke-linecap="round" stroke-linejoin="round"/>
<path d="M 633.0 319.6 C 646.6 328.7 671.6 332.1 687.5 320.8 M 727.2 319.6 C 737.4 326.4 753.3 328.7 761.2 320.3" fill="none" stroke="#b2621f" stroke-width="0.9" stroke-linecap="round" stroke-linejoin="round"/>
<path d="M 706.8 284.5 C 710.2 289.0 710.6 294.7 708.4 299.2 M 713.6 286.7 C 716.5 290.8 716.5 295.4 714.7 298.5" fill="none" stroke="#b2621f" stroke-width="0.8" stroke-linecap="round" stroke-linejoin="round"/>
<path d="M 721.5 405.9 C 722.0 401.3 724.9 398.4 730.2 399.7 M 724.9 401.3 L 729.5 403.6" fill="none" stroke="#b2621f" stroke-width="0.9" stroke-linecap="round" stroke-linejoin="round"/>
<ellipse cx="656.9" cy="315.1" rx="3.18" ry="2.27" fill="#c97f3f"/>
<ellipse cx="752.8" cy="314.0" rx="3.18" ry="2.50" fill="#c97f3f"/>
<path d="M 633.0 294.7 C 628.5 309.4 617.1 338.9 610.3 357.1 C 606.9 368.4 606.3 384.3 609.2 397.9 C 610.8 409.3 613.7 422.9 617.1 443.1 C 620.6 450.1 627.4 456.9 630.8 463.7 C 634.2 469.4 637.1 473.9 634.2 477.8 C 630.8 479.6 627.4 477.3 624.0 474.8 C 621.7 477.3 622.8 481.9 627.4 490.9 C 629.6 496.6 627.4 499.6 621.7 499.6 C 614.9 500.5 605.8 498.2 599.5 494.4 C 593.3 490.5 586.5 481.9 584.2 474.8 C 582.0 466.0 582.7 456.9 582.0 447.6 C 578.6 434.2 569.5 411.5 563.8 388.8 C 559.3 370.7 561.6 352.5 568.4 329.8 C 574.0 307.1 580.8 279.9 588.8 259.5 C 593.3 250.4 601.3 242.5 608.1 236.8 Z" fill="#e09a59"/>
<path d="M 633.0 294.7 C 628.5 309.4 617.1 338.9 610.3 357.1 C 606.9 368.4 606.3 384.3 609.2 397.9 C 610.8 409.3 613.7 422.9 617.1 443.1 C 620.6 450.1 627.4 456.9 630.8 463.7 C 634.2 469.4 637.1 473.9 634.2 477.8 C 630.8 479.6 627.4 477.3 624.0 474.8 C 621.7 477.3 622.8 481.9 627.4 490.9 C 629.6 496.6 627.4 499.6 621.7 499.6 C 614.9 500.5 605.8 498.2 599.5 494.4 C 593.3 490.5 586.5 481.9 584.2 474.8 C 582.0 466.0 582.7 456.9 582.0 447.6 C 578.6 434.2 569.5 411.5 563.8 388.8 C 559.3 370.7 561.6 352.5 568.4 329.8 C 574.0 307.1 580.8 279.9 588.8 259.5 C 593.3 250.4 601.3 242.5 608.1 236.8" fill="none" stroke="#b2621f" stroke-width="0.9" stroke-linecap="round" stroke-linejoin="round"/>
<path d="M 592.6 473.9 C 594.5 481.9 597.9 487.5 602.4 490.9 M 600.8 476.2 C 603.5 484.1 606.9 490.9 612.2 495.5 M 610.3 476.2 C 613.7 484.1 617.1 490.9 621.2 495.9" fill="none" stroke="#b2621f" stroke-width="0.8" stroke-linecap="round" stroke-linejoin="round"/>
<path d="M 655.2 177.3 C 650.3 179.0 645.1 183.3 644.3 187.1 C 645.1 192.6 649.2 197.1 653.5 198.7 L 656.8 192.2 Z" fill="#e09a59" stroke="#b2621f" stroke-width="0.8" stroke-linejoin="round"/>
<path d="M 683.2 133.1 C 690.5 131.0 697.0 133.1 703.5 135.8 C 709.9 133.6 718.0 133.9 724.5 136.3 C 729.4 142.0 732.6 156.6 733.9 171.2 C 734.6 182.5 733.4 192.2 731.0 200.3 L 731.0 224.7 L 666.2 224.7 L 666.2 195.5 C 663.7 185.8 664.2 172.8 667.1 161.5 C 669.7 151.7 675.9 140.4 683.2 133.1 Z" fill="#e09a59" stroke="#1c1006" stroke-width="0.8" stroke-linejoin="round"/>
<path d="M 685.6 112.8 C 693.7 111.2 701.8 113.6 708.3 117.7 C 713.2 112.8 719.7 112.0 726.1 114.4 M 674.3 127.4 C 680.8 119.3 690.5 116.1 703.5 120.9 C 713.2 119.3 724.5 122.6 732.6 132.3 M 661.3 140.4 C 654.8 153.3 646.7 164.7 638.6 172.8 M 643.5 148.5 C 637.0 159.8 628.9 166.3 624.8 172.8 M 638.6 185.8 C 637.0 198.7 635.4 211.7 636.2 224.7 M 735.9 148.5 C 740.7 163.1 744.0 176.0 749.6 174.4 M 742.4 185.8 C 744.0 195.5 744.8 205.2 748.0 207.6" fill="none" stroke="#1c1006" stroke-width="0.9" stroke-linecap="round" stroke-linejoin="round"/>
<path d="M 698.9 143.6 C 703.5 142.3 708.3 142.8 711.6 144.4 M 705.9 161.5 C 706.7 167.9 709.9 176.0 715.1 181.7 M 680.0 180.6 C 684.0 183.3 688.9 183.3 693.1 180.9 M 716.1 180.6 C 718.8 182.5 722.1 182.5 725.2 180.3" fill="none" stroke="#b2621f" stroke-width="0.8" stroke-linecap="round" stroke-linejoin="round"/>
<path d="M 666.2 190.6 C 667.8 197.1 671.0 203.6 675.9 208.5 C 678.3 203.6 684.8 199.5 691.3 197.4 C 695.3 196.5 698.6 198.4 701.8 200.3 C 706.7 202.0 711.6 201.2 715.6 198.4 C 719.7 196.1 724.5 198.1 727.8 203.6 C 730.2 200.3 731.8 195.5 732.9 189.8 L 748.0 207.6 C 747.5 218.2 744.0 227.9 738.3 236.0 C 735.9 240.1 732.6 243.3 729.7 245.4 L 729.1 241.7 C 727.0 246.5 723.7 249.8 719.7 252.2 L 719.0 248.6 C 716.4 253.0 712.4 255.8 708.0 257.4 L 707.0 253.8 C 704.3 257.1 701.8 259.0 698.6 259.7 C 695.3 258.7 692.1 256.8 689.7 254.6 L 689.2 257.1 C 684.8 254.6 680.8 251.4 678.3 248.2 L 677.5 250.6 C 672.7 247.4 668.6 243.3 666.2 239.2 L 664.9 241.7 C 660.5 237.6 656.5 231.1 654.8 224.7 C 654.0 214.9 658.1 202.0 666.2 190.6 Z" fill="#3e2309"/>
<path d="M 666.2 190.6 C 667.8 197.1 671.0 203.6 675.9 208.5 C 678.3 203.6 684.8 199.5 691.3 197.4 C 695.3 196.5 698.6 198.4 701.8 200.3 M 715.6 198.4 C 719.7 196.1 724.5 198.1 727.8 203.6 C 730.2 200.3 731.8 195.5 732.9 189.8" fill="none" stroke="#1c1006" stroke-width="0.9" stroke-linecap="round" stroke-linejoin="round"/>
<path d="M 680.8 218.2 C 682.4 229.5 685.6 240.9 689.2 254.6 M 698.6 223.0 C 699.4 236.0 700.2 247.4 698.9 258.7 M 716.4 219.8 C 718.0 231.1 715.6 244.1 708.0 257.1 M 729.4 211.7 C 731.0 223.0 729.4 234.4 719.7 251.9 M 667.8 211.7 C 667.8 223.0 671.0 232.8 678.3 248.2 M 659.7 206.8 C 658.1 218.2 659.7 229.5 666.2 239.2" fill="none" stroke="#1c1006" stroke-width="0.8" stroke-linecap="round" stroke-linejoin="round"/>
<path d="M 696.2 182.5 C 693.4 189.0 693.4 194.2 697.5 198.2 C 701.8 201.6 711.2 201.6 716.1 197.4 C 720.1 193.2 718.4 187.4 714.8 181.7 Z" fill="#e09a59"/>
<path d="M 697.0 184.5 C 693.4 189.8 693.7 195.2 697.9 198.6 C 702.6 201.6 711.2 201.2 715.6 197.8 C 719.3 194.2 718.4 189.3 716.4 185.8" fill="none" stroke="#b2621f" stroke-width="0.9" stroke-linecap="round" stroke-linejoin="round"/>
<path d="M 687.2 213.0 C 693.7 209.7 713.2 209.1 718.8 211.7 C 717.2 215.7 709.9 218.2 703.5 218.5 C 697.0 218.2 690.5 216.6 687.2 213.0 Z" fill="#e09a59" stroke="#1c1006" stroke-width="0.8" stroke-linejoin="round"/>
<path d="M 669.1 165.0 C 674.3 159.0 682.4 155.3 691.3 154.6 C 695.3 154.6 698.3 156.3 698.3 158.5 C 698.3 160.5 696.2 161.1 693.7 160.6 C 685.6 159.5 676.7 161.5 669.1 165.0 Z" fill="#44270a" stroke="#1c1006" stroke-width="0.7" stroke-linejoin="round"/>
<path d="M 709.6 160.2 C 711.2 157.4 715.6 155.8 720.5 155.9 C 725.3 156.3 729.1 159.0 730.7 163.4 C 726.1 160.6 719.7 159.5 714.8 160.2 C 712.4 161.1 710.3 161.8 709.6 160.2 Z" fill="#44270a" stroke="#1c1006" stroke-width="0.7" stroke-linejoin="round"/>
<path d="M 677.7 172.8 C 680.8 167.6 689.2 165.3 695.0 170.2 C 696.2 172.5 695.7 175.1 694.1 176.7 C 688.9 178.6 681.7 177.3 677.7 172.8 Z" fill="#ffffff"/>
<g clip-path="url(#eyeL)"><ellipse cx="687.4" cy="171.5" rx="4.70" ry="4.70" fill="#7a4010"/><ellipse cx="687.4" cy="171.5" rx="3.08" ry="3.08" fill="#1a0d03"/><ellipse cx="689.7" cy="168.9" rx="1.30" ry="1.30" fill="#ffffff"/></g>
<path d="M 677.7 172.8 C 680.8 167.6 689.2 165.3 695.0 170.2" fill="none" stroke="#1c1006" stroke-width="1.5" stroke-linecap="round" stroke-linejoin="round"/>
<path d="M 695.0 170.2 C 696.2 172.5 695.7 175.1 694.1 176.7 C 688.9 178.6 681.7 177.3 677.7 172.8" fill="none" stroke="#1c1006" stroke-width="0.8" stroke-linecap="round" stroke-linejoin="round"/>
<path d="M 712.5 172.1 C 713.8 167.6 721.0 166.0 725.8 169.9 C 726.5 172.5 725.2 175.4 722.6 176.8 C 718.0 178.0 713.8 176.4 712.5 172.1 Z" fill="#ffffff"/>
<g clip-path="url(#eyeR)"><ellipse cx="719.8" cy="171.2" rx="4.54" ry="4.54" fill="#7a4010"/><ellipse cx="719.8" cy="171.2" rx="2.92" ry="2.92" fill="#1a0d03"/><ellipse cx="722.1" cy="168.7" rx="1.30" ry="1.30" fill="#ffffff"/></g>
<path d="M 712.5 172.1 C 713.8 167.6 721.0 166.0 725.8 169.9" fill="none" stroke="#1c1006" stroke-width="1.5" stroke-linecap="round" stroke-linejoin="round"/>
<path d="M 725.8 169.9 C 726.5 172.5 725.2 175.4 722.6 176.8 C 718.0 178.0 713.8 176.4 712.5 172.1" fill="none" stroke="#1c1006" stroke-width="0.8" stroke-linecap="round" stroke-linejoin="round"/></g>
<g transform="translate(345,0)"><ellipse cx="710.4" cy="713.5" rx="150.5" ry="19.5" fill="#a8a8a8"/>
<path d="M 676.1 527.1 L 685.2 569.0 L 698.8 556.6 L 712.5 577.0 L 719.3 527.1 Z" fill="#485a2a"/>
<rect x="598.2" y="400" width="184.8" height="206.8" fill="none" stroke="#35a3dc" stroke-width="1.15"/>
<path d="M 739.7 232.3 C 757.8 239.1 772.6 257.2 776.4 284.5 C 778.7 307.1 777.1 327.6 783.9 357.1 C 788.5 375.2 790.7 386.6 793.0 393.4 C 795.3 402.5 797.5 411.5 799.6 417.7 C 803.2 427.4 807.3 436.5 809.3 443.8 C 812.3 451.2 814.1 456.9 813.4 463.0 C 813.2 469.4 812.3 474.6 811.2 477.8 C 810.0 481.4 808.9 483.7 806.8 484.1 C 804.4 485.0 801.4 484.6 800.3 483.5 C 798.7 481.9 798.2 479.6 798.0 477.8 C 796.0 479.6 793.0 479.6 791.4 478.5 C 789.1 476.9 787.8 473.9 787.3 471.2 C 786.2 466.0 785.1 459.2 784.2 453.5 L 776.0 428.3 L 766.9 411.5 L 757.8 320.8 Z" fill="#e09a59" stroke="#b2621f" stroke-width="0.9" stroke-linejoin="round"/>
<path d="M 798.0 477.8 C 800.0 470.5 799.8 461.4 796.4 453.5 M 787.3 471.2 C 789.6 468.3 791.9 467.1 794.6 467.8" fill="none" stroke="#b2621f" stroke-width="0.8" stroke-linecap="round" stroke-linejoin="round"/>
<path d="M753.4000000000001 238.4H815.5999999999999V488.5H783.3" fill="none" stroke="#35a3dc" stroke-width="1.15"/>
<path d="M 708.2 529.3 C 708.6 552.3 709.1 570.0 709.1 587.7 C 710.0 605.4 714.4 628.4 720.6 653.2 C 723.3 665.6 721.5 676.3 718.9 685.1 C 718.0 692.2 720.6 698.4 727.7 702.8 C 738.3 705.5 752.5 708.1 763.1 711.7 C 770.2 714.3 775.5 714.9 779.1 713.1 C 784.4 715.6 789.7 716.6 795.0 715.6 C 800.3 714.9 803.9 712.6 805.6 710.8 C 809.2 708.1 810.9 703.7 809.5 700.2 C 807.4 695.7 802.1 693.1 797.7 691.8 C 787.9 685.1 777.3 676.3 764.9 667.4 C 763.5 649.7 764.9 623.1 765.8 596.6 C 766.3 578.9 765.8 552.3 764.9 529.3 Z" fill="#e09a59" stroke="#b2621f" stroke-width="0.9" stroke-linejoin="round"/>
<path d="M 730.4 669.2 C 729.5 679.8 733.0 686.9 739.2 688.6" fill="none" stroke="#b2621f" stroke-width="0.8" stroke-linecap="round" stroke-linejoin="round"/>
<path d="M 787.9 701.0 C 793.2 704.6 796.8 709.9 797.7 714.3 M 795.0 696.6 C 800.3 700.2 803.9 705.5 804.7 710.8 M 800.3 694.0 C 804.7 696.6 808.3 701.0 809.2 704.6" fill="none" stroke="#b2621f" stroke-width="0.8" stroke-linecap="round" stroke-linejoin="round"/>
<rect x="703" y="459.2" width="108.1" height="255.8" fill="none" stroke="#35a3dc" stroke-width="1.15"/>
<path d="M 617.9 529.3 C 617.6 552.3 618.8 570.0 618.8 589.5 C 617.9 614.3 623.2 644.4 628.5 669.2 C 629.4 679.8 625.9 690.4 626.2 701.0 C 628.5 709.9 642.7 718.8 656.0 727.3 C 659.5 729.4 664.0 729.0 666.6 727.6 C 670.2 728.5 673.7 728.0 676.4 726.2 C 679.9 727.3 684.3 726.2 686.6 724.1 C 690.5 724.9 694.1 723.2 695.8 720.9 C 700.3 720.5 702.9 717.9 701.5 714.3 C 699.4 708.1 688.8 695.7 679.9 686.0 C 675.5 680.7 671.0 678.0 670.2 674.5 C 670.7 655.0 673.7 632.0 676.4 614.3 C 677.8 596.6 677.2 570.0 677.2 529.3 Z" fill="#e09a59" stroke="#b2621f" stroke-width="0.9" stroke-linejoin="round"/>
<path d="M 662.2 720.5 L 664.3 726.7 M 671.9 718.8 L 674.6 725.8 M 680.8 716.1 L 684.3 723.7 M 688.8 713.4 L 693.4 720.9" fill="none" stroke="#b2621f" stroke-width="0.8" stroke-linecap="round" stroke-linejoin="round"/>
<path d="M 640.9 571.8 C 643.6 578.0 648.0 582.4 653.3 584.5" fill="none" stroke="#b2621f" stroke-width="0.7" stroke-linecap="round" stroke-linejoin="round"/>
<rect x="617.7" y="480" width="84.7" height="247.0" fill="none" stroke="#35a3dc" stroke-width="1.15"/>
<path d="M 611.5 411.3 C 635.3 427.2 667.1 439.0 703.4 444.2 C 732.9 443.1 757.8 429.5 769.2 411.3 L 771.9 408.6 C 778.3 420.4 774.9 434.0 776.4 445.4 C 780.5 468.1 785.1 502.1 786.2 536.1 C 786.2 554.3 781.7 572.5 776.4 587.2 C 774.9 577.0 772.6 566.8 769.2 556.6 C 764.6 567.9 753.3 579.3 742.0 588.3 C 735.1 570.2 723.8 549.8 714.7 532.7 C 714.7 547.5 712.5 561.1 708.4 573.6 C 704.5 566.8 700.0 558.8 696.6 552.5 L 677.3 533.9 C 675.0 554.3 670.5 574.7 665.5 591.7 C 658.0 572.5 646.6 547.5 638.0 525.9 C 634.2 545.2 628.5 565.6 622.8 581.5 C 620.6 577.0 617.1 572.5 614.9 567.9 C 610.3 575.9 605.8 582.7 600.8 589.5 L 599.5 579.3 L 596.7 588.3 L 596.3 572.5 C 594.0 554.3 594.0 527.1 595.6 495.3 C 599.0 474.9 608.1 456.7 612.6 452.2 C 612.2 438.6 610.8 425.0 611.5 411.3 Z" fill="#5f7338" stroke="#33421c" stroke-width="0.7" stroke-linejoin="round"/>
<path d="M 635.3 437.4 C 646.6 447.7 658.0 454.5 670.5 459.5 M 713.6 474.9 C 732.9 468.1 751.0 454.5 761.2 434.0 C 760.1 459.0 744.2 495.3 715.9 516.9 M 703.8 477.1 C 710.2 495.3 713.6 513.5 714.3 532.7 M 617.1 508.9 C 616.0 527.1 612.6 545.2 606.9 563.4 M 762.8 513.5 C 764.6 531.6 766.9 545.2 769.2 556.6" fill="none" stroke="#33421c" stroke-width="0.8" stroke-linecap="round" stroke-linejoin="round"/>
<rect x="592.5" y="359.4" width="193.3" height="231.1" fill="none" stroke="#35a3dc" stroke-width="1.15"/>
<path d="M 675.9 102.3 C 685.6 101.2 695.3 103.4 703.5 107.2 C 707.5 105.0 714.0 104.4 718.8 106.3 C 728.6 109.6 735.9 119.3 739.9 129.8 C 744.0 142.0 746.4 153.3 750.1 164.7 C 751.8 169.6 753.7 173.6 755.6 176.8 C 753.4 176.4 751.4 175.4 749.8 174.4 C 752.1 185.8 753.7 198.7 752.1 208.5 C 751.8 211.4 751.1 213.6 750.1 215.7 C 749.5 213.0 748.8 210.1 748.0 207.6 C 747.5 218.2 744.0 227.9 738.3 236.0 C 735.9 240.1 732.6 243.3 729.7 245.4 L 729.1 241.7 C 727.0 246.5 723.7 249.8 719.7 252.2 L 719.0 248.6 C 716.4 253.0 712.4 255.8 708.0 257.4 L 707.0 253.8 C 704.3 257.1 701.8 259.0 698.6 259.7 C 695.3 258.7 692.1 256.8 689.7 254.6 L 689.2 257.1 C 684.8 254.6 680.8 251.4 678.3 248.2 L 677.5 250.6 C 672.7 247.4 668.6 243.3 666.2 239.2 L 664.9 241.7 C 660.5 237.6 656.5 231.1 654.8 224.7 C 651.6 224.7 645.1 227.1 637.0 229.2 C 632.1 224.7 626.5 214.9 623.2 205.2 C 622.4 203.6 620.8 202.3 618.5 201.6 C 616.7 193.9 619.2 184.1 624.4 173.6 C 625.3 171.2 626.5 168.7 627.6 166.3 L 623.2 166.6 C 626.5 159.0 632.9 150.1 639.4 141.2 C 646.7 129.8 654.8 116.1 663.7 108.8 C 667.8 105.0 671.8 103.1 675.9 102.3 Z" fill="#44270a" stroke="#1c1006" stroke-width="0.9" stroke-linejoin="round"/>
<path d="M 648.9 220.9 C 630.8 227.7 617.1 232.3 608.1 236.8 C 599.0 243.6 588.8 259.5 584.2 275.4 L 608.1 366.1 C 606.3 379.8 607.6 393.4 612.6 413.8 C 635.3 428.5 667.1 439.9 703.4 444.4 C 732.9 443.3 757.8 429.7 769.2 411.5 C 774.2 397.9 773.3 382.0 769.6 369.6 C 766.9 360.5 763.5 355.9 763.5 349.1 C 760.6 338.9 763.5 325.3 764.6 298.1 C 764.6 289.0 761.2 281.1 757.8 275.4 C 753.3 259.5 748.8 243.6 739.7 232.3 C 726.1 225.5 698.8 220.9 648.9 220.9 Z" fill="#e09a59"/>
<path d="M 648.9 220.9 C 630.8 227.7 617.1 232.3 608.1 236.8" fill="none" stroke="#b2621f" stroke-width="0.9" stroke-linecap="round" stroke-linejoin="round"/>
<path d="M 757.8 275.4 C 761.2 281.1 764.6 289.0 764.6 298.1 C 763.5 325.3 760.6 338.9 763.5 349.1 C 763.5 355.9 766.9 360.5 769.6 369.6 C 773.3 382.0 774.2 397.9 769.2 411.5" fill="none" stroke="#b2621f" stroke-width="0.9" stroke-linecap="round" stroke-linejoin="round"/>
<path d="M 633.0 319.6 C 646.6 328.7 671.6 332.1 687.5 320.8 M 727.2 319.6 C 737.4 326.4 753.3 328.7 761.2 320.3" fill="none" stroke="#b2621f" stroke-width="0.9" stroke-linecap="round" stroke-linejoin="round"/>
<path d="M 706.8 284.5 C 710.2 289.0 710.6 294.7 708.4 299.2 M 713.6 286.7 C 716.5 290.8 716.5 295.4 714.7 298.5" fill="none" stroke="#b2621f" stroke-width="0.8" stroke-linecap="round" stroke-linejoin="round"/>
<path d="M 721.5 405.9 C 722.0 401.3 724.9 398.4 730.2 399.7 M 724.9 401.3 L 729.5 403.6" fill="none" stroke="#b2621f" stroke-width="0.9" stroke-linecap="round" stroke-linejoin="round"/>
<ellipse cx="656.9" cy="315.1" rx="3.18" ry="2.27" fill="#c97f3f"/>
<ellipse cx="752.8" cy="314.0" rx="3.18" ry="2.50" fill="#c97f3f"/>
<rect x="592.9" y="177.3" width="179.9" height="267.7" fill="none" stroke="#35a3dc" stroke-width="1.15"/>
<path d="M 633.0 294.7 C 628.5 309.4 617.1 338.9 610.3 357.1 C 606.9 368.4 606.3 384.3 609.2 397.9 C 610.8 409.3 613.7 422.9 617.1 443.1 C 620.6 450.1 627.4 456.9 630.8 463.7 C 634.2 469.4 637.1 473.9 634.2 477.8 C 630.8 479.6 627.4 477.3 624.0 474.8 C 621.7 477.3 622.8 481.9 627.4 490.9 C 629.6 496.6 627.4 499.6 621.7 499.6 C 614.9 500.5 605.8 498.2 599.5 494.4 C 593.3 490.5 586.5 481.9 584.2 474.8 C 582.0 466.0 582.7 456.9 582.0 447.6 C 578.6 434.2 569.5 411.5 563.8 388.8 C 559.3 370.7 561.6 352.5 568.4 329.8 C 574.0 307.1 580.8 279.9 588.8 259.5 C 593.3 250.4 601.3 242.5 608.1 236.8 Z" fill="#e09a59"/>
<path d="M 633.0 294.7 C 628.5 309.4 617.1 338.9 610.3 357.1 C 606.9 368.4 606.3 384.3 609.2 397.9 C 610.8 409.3 613.7 422.9 617.1 443.1 C 620.6 450.1 627.4 456.9 630.8 463.7 C 634.2 469.4 637.1 473.9 634.2 477.8 C 630.8 479.6 627.4 477.3 624.0 474.8 C 621.7 477.3 622.8 481.9 627.4 490.9 C 629.6 496.6 627.4 499.6 621.7 499.6 C 614.9 500.5 605.8 498.2 599.5 494.4 C 593.3 490.5 586.5 481.9 584.2 474.8 C 582.0 466.0 582.7 456.9 582.0 447.6 C 578.6 434.2 569.5 411.5 563.8 388.8 C 559.3 370.7 561.6 352.5 568.4 329.8 C 574.0 307.1 580.8 279.9 588.8 259.5 C 593.3 250.4 601.3 242.5 608.1 236.8" fill="none" stroke="#b2621f" stroke-width="0.9" stroke-linecap="round" stroke-linejoin="round"/>
<path d="M 592.6 473.9 C 594.5 481.9 597.9 487.5 602.4 490.9 M 600.8 476.2 C 603.5 484.1 606.9 490.9 612.2 495.5 M 610.3 476.2 C 613.7 484.1 617.1 490.9 621.2 495.9" fill="none" stroke="#b2621f" stroke-width="0.8" stroke-linecap="round" stroke-linejoin="round"/>
<rect x="560" y="243.3" width="76.7" height="257.1" fill="none" stroke="#35a3dc" stroke-width="1.15"/>
<g clip-path="url(#hairtop)"><path d="M 675.9 102.3 C 685.6 101.2 695.3 103.4 703.5 107.2 C 707.5 105.0 714.0 104.4 718.8 106.3 C 728.6 109.6 735.9 119.3 739.9 129.8 C 744.0 142.0 746.4 153.3 750.1 164.7 C 751.8 169.6 753.7 173.6 755.6 176.8 C 753.4 176.4 751.4 175.4 749.8 174.4 C 752.1 185.8 753.7 198.7 752.1 208.5 C 751.8 211.4 751.1 213.6 750.1 215.7 C 749.5 213.0 748.8 210.1 748.0 207.6 C 747.5 218.2 744.0 227.9 738.3 236.0 C 735.9 240.1 732.6 243.3 729.7 245.4 L 729.1 241.7 C 727.0 246.5 723.7 249.8 719.7 252.2 L 719.0 248.6 C 716.4 253.0 712.4 255.8 708.0 257.4 L 707.0 253.8 C 704.3 257.1 701.8 259.0 698.6 259.7 C 695.3 258.7 692.1 256.8 689.7 254.6 L 689.2 257.1 C 684.8 254.6 680.8 251.4 678.3 248.2 L 677.5 250.6 C 672.7 247.4 668.6 243.3 666.2 239.2 L 664.9 241.7 C 660.5 237.6 656.5 231.1 654.8 224.7 C 651.6 224.7 645.1 227.1 637.0 229.2 C 632.1 224.7 626.5 214.9 623.2 205.2 C 622.4 203.6 620.8 202.3 618.5 201.6 C 616.7 193.9 619.2 184.1 624.4 173.6 C 625.3 171.2 626.5 168.7 627.6 166.3 L 623.2 166.6 C 626.5 159.0 632.9 150.1 639.4 141.2 C 646.7 129.8 654.8 116.1 663.7 108.8 C 667.8 105.0 671.8 103.1 675.9 102.3 Z" fill="#44270a" stroke="#1c1006" stroke-width="0.9" stroke-linejoin="round"/></g>
<path d="M622.1 146V160M622.1 146H632" fill="none" stroke="#35a3dc" stroke-width="1.15"/>
<path d="M 654.5 168.7 C 648.3 166.0 642.7 170.4 642.2 178.5 C 641.9 187.4 646.7 195.5 652.4 198.7 C 654.8 199.5 656.8 197.1 656.8 192.2 Z" fill="#e09a59" stroke="#1c1006" stroke-width="0.8" stroke-linejoin="round"/>
<path d="M 653.2 174.7 C 648.0 174.4 646.1 180.9 648.3 187.4 C 650.0 191.6 653.5 192.6 655.2 190.6 Z" fill="#c97f3f"/>
<path d="M 654.2 166.3 C 657.3 176.0 658.1 189.0 655.6 202.0 L 661.3 202.0 L 662.9 166.3 Z" fill="#44270a"/>
<path d="M 683.2 133.1 C 690.5 131.0 697.0 133.1 703.5 135.8 C 709.9 133.6 718.0 133.9 724.5 136.3 C 729.4 142.0 732.6 156.6 733.9 171.2 C 734.6 182.5 733.4 192.2 731.0 200.3 L 731.0 224.7 L 666.2 224.7 L 666.2 195.5 C 663.7 185.8 664.2 172.8 667.1 161.5 C 669.7 151.7 675.9 140.4 683.2 133.1 Z" fill="#e09a59" stroke="#1c1006" stroke-width="0.8" stroke-linejoin="round"/>
<path d="M 685.6 112.8 C 693.7 111.2 701.8 113.6 708.3 117.7 C 713.2 112.8 719.7 112.0 726.1 114.4 M 674.3 127.4 C 680.8 119.3 690.5 116.1 703.5 120.9 C 713.2 119.3 724.5 122.6 732.6 132.3 M 661.3 140.4 C 654.8 153.3 646.7 164.7 638.6 172.8 M 643.5 148.5 C 637.0 159.8 628.9 166.3 624.8 172.8 M 638.6 185.8 C 637.0 198.7 635.4 211.7 636.2 224.7 M 735.9 148.5 C 740.7 163.1 744.0 176.0 749.6 174.4 M 742.4 185.8 C 744.0 195.5 744.8 205.2 748.0 207.6" fill="none" stroke="#1c1006" stroke-width="0.9" stroke-linecap="round" stroke-linejoin="round"/>
<path d="M 698.9 143.6 C 703.5 142.3 708.3 142.8 711.6 144.4 M 705.9 161.5 C 706.7 167.9 709.9 176.0 715.1 181.7 M 680.0 180.6 C 684.0 183.3 688.9 183.3 693.1 180.9 M 716.1 180.6 C 718.8 182.5 722.1 182.5 725.2 180.3" fill="none" stroke="#b2621f" stroke-width="0.8" stroke-linecap="round" stroke-linejoin="round"/>
<path d="M 666.2 190.6 C 667.8 197.1 671.0 203.6 675.9 208.5 C 678.3 203.6 684.8 199.5 691.3 197.4 C 695.3 196.5 698.6 198.4 701.8 200.3 C 706.7 202.0 711.6 201.2 715.6 198.4 C 719.7 196.1 724.5 198.1 727.8 203.6 C 730.2 200.3 731.8 195.5 732.9 189.8 L 748.0 207.6 C 747.5 218.2 744.0 227.9 738.3 236.0 C 735.9 240.1 732.6 243.3 729.7 245.4 L 729.1 241.7 C 727.0 246.5 723.7 249.8 719.7 252.2 L 719.0 248.6 C 716.4 253.0 712.4 255.8 708.0 257.4 L 707.0 253.8 C 704.3 257.1 701.8 259.0 698.6 259.7 C 695.3 258.7 692.1 256.8 689.7 254.6 L 689.2 257.1 C 684.8 254.6 680.8 251.4 678.3 248.2 L 677.5 250.6 C 672.7 247.4 668.6 243.3 666.2 239.2 L 664.9 241.7 C 660.5 237.6 656.5 231.1 654.8 224.7 C 654.0 214.9 658.1 202.0 666.2 190.6 Z" fill="#3e2309"/>
<path d="M 666.2 190.6 C 667.8 197.1 671.0 203.6 675.9 208.5 C 678.3 203.6 684.8 199.5 691.3 197.4 C 695.3 196.5 698.6 198.4 701.8 200.3 M 715.6 198.4 C 719.7 196.1 724.5 198.1 727.8 203.6 C 730.2 200.3 731.8 195.5 732.9 189.8" fill="none" stroke="#1c1006" stroke-width="0.9" stroke-linecap="round" stroke-linejoin="round"/>
<path d="M 680.8 218.2 C 682.4 229.5 685.6 240.9 689.2 254.6 M 698.6 223.0 C 699.4 236.0 700.2 247.4 698.9 258.7 M 716.4 219.8 C 718.0 231.1 715.6 244.1 708.0 257.1 M 729.4 211.7 C 731.0 223.0 729.4 234.4 719.7 251.9 M 667.8 211.7 C 667.8 223.0 671.0 232.8 678.3 248.2 M 659.7 206.8 C 658.1 218.2 659.7 229.5 666.2 239.2" fill="none" stroke="#1c1006" stroke-width="0.8" stroke-linecap="round" stroke-linejoin="round"/>
<path d="M 696.2 182.5 C 693.4 189.0 693.4 194.2 697.5 198.2 C 701.8 201.6 711.2 201.6 716.1 197.4 C 720.1 193.2 718.4 187.4 714.8 181.7 Z" fill="#e09a59"/>
<path d="M 697.0 184.5 C 693.4 189.8 693.7 195.2 697.9 198.6 C 702.6 201.6 711.2 201.2 715.6 197.8 C 719.3 194.2 718.4 189.3 716.4 185.8" fill="none" stroke="#b2621f" stroke-width="0.9" stroke-linecap="round" stroke-linejoin="round"/>
<path d="M 687.2 213.0 C 693.7 209.7 713.2 209.1 718.8 211.7 C 717.2 215.7 709.9 218.2 703.5 218.5 C 697.0 218.2 690.5 216.6 687.2 213.0 Z" fill="#e09a59" stroke="#1c1006" stroke-width="0.8" stroke-linejoin="round"/>
<path d="M 669.1 165.0 C 674.3 159.0 682.4 155.3 691.3 154.6 C 695.3 154.6 698.3 156.3 698.3 158.5 C 698.3 160.5 696.2 161.1 693.7 160.6 C 685.6 159.5 676.7 161.5 669.1 165.0 Z" fill="#44270a" stroke="#1c1006" stroke-width="0.7" stroke-linejoin="round"/>
<path d="M 709.6 160.2 C 711.2 157.4 715.6 155.8 720.5 155.9 C 725.3 156.3 729.1 159.0 730.7 163.4 C 726.1 160.6 719.7 159.5 714.8 160.2 C 712.4 161.1 710.3 161.8 709.6 160.2 Z" fill="#44270a" stroke="#1c1006" stroke-width="0.7" stroke-linejoin="round"/>
<path d="M 677.7 172.8 C 680.8 167.6 689.2 165.3 695.0 170.2 C 696.2 172.5 695.7 175.1 694.1 176.7 C 688.9 178.6 681.7 177.3 677.7 172.8 Z" fill="#ffffff"/>
<g clip-path="url(#eyeL)"><ellipse cx="687.4" cy="171.5" rx="4.70" ry="4.70" fill="#7a4010"/><ellipse cx="687.4" cy="171.5" rx="3.08" ry="3.08" fill="#1a0d03"/><ellipse cx="689.7" cy="168.9" rx="1.30" ry="1.30" fill="#ffffff"/></g>
<path d="M 677.7 172.8 C 680.8 167.6 689.2 165.3 695.0 170.2" fill="none" stroke="#1c1006" stroke-width="1.5" stroke-linecap="round" stroke-linejoin="round"/>
<path d="M 695.0 170.2 C 696.2 172.5 695.7 175.1 694.1 176.7 C 688.9 178.6 681.7 177.3 677.7 172.8" fill="none" stroke="#1c1006" stroke-width="0.8" stroke-linecap="round" stroke-linejoin="round"/>
<path d="M 712.5 172.1 C 713.8 167.6 721.0 166.0 725.8 169.9 C 726.5 172.5 725.2 175.4 722.6 176.8 C 718.0 178.0 713.8 176.4 712.5 172.1 Z" fill="#ffffff"/>
<g clip-path="url(#eyeR)"><ellipse cx="719.8" cy="171.2" rx="4.54" ry="4.54" fill="#7a4010"/><ellipse cx="719.8" cy="171.2" rx="2.92" ry="2.92" fill="#1a0d03"/><ellipse cx="722.1" cy="168.7" rx="1.30" ry="1.30" fill="#ffffff"/></g>
<path d="M 712.5 172.1 C 713.8 167.6 721.0 166.0 725.8 169.9" fill="none" stroke="#1c1006" stroke-width="1.5" stroke-linecap="round" stroke-linejoin="round"/>
<path d="M 725.8 169.9 C 726.5 172.5 725.2 175.4 722.6 176.8 C 718.0 178.0 713.8 176.4 712.5 172.1" fill="none" stroke="#1c1006" stroke-width="0.8" stroke-linecap="round" stroke-linejoin="round"/>
<rect x="618.1" y="101.8" width="137.7" height="156.1" fill="none" stroke="#35a3dc" stroke-width="1.15"/></g>
<path d="M900.7 101.8H908.7M904.7 97.8V105.8" stroke="#111" stroke-width="1" fill="none"/>
<path d="M959.1 101.8H967.1M963.1 97.8V105.8" stroke="#111" stroke-width="1" fill="none"/>
<path d="M963.1 146H971.1M967.1 142V150" stroke="#111" stroke-width="1" fill="none"/>
<path d="M933.9 177.3H941.9M937.9 173.3V181.3" stroke="#111" stroke-width="1" fill="none"/>
<path d="M901 243.3H909M905 239.3V247.3" stroke="#111" stroke-width="1" fill="none"/>
<circle cx="1005.7" cy="202" r="3.6" fill="none" stroke="#1a1a1a" stroke-width="2.4"/><circle cx="1005.7" cy="202" r="3.6" fill="none" stroke="#f4f4f4" stroke-width="1.1"/>
<circle cx="967.4" cy="266" r="3.6" fill="none" stroke="#1a1a1a" stroke-width="2.4"/><circle cx="967.4" cy="266" r="3.6" fill="none" stroke="#f4f4f4" stroke-width="1.1"/>
<circle cx="1028.7" cy="310.5" r="3.6" fill="none" stroke="#1a1a1a" stroke-width="2.4"/><circle cx="1028.7" cy="310.5" r="3.6" fill="none" stroke="#f4f4f4" stroke-width="1.1"/>
<circle cx="1033.6" cy="476.1" r="3.6" fill="none" stroke="#1a1a1a" stroke-width="2.4"/><circle cx="1033.6" cy="476.1" r="3.6" fill="none" stroke="#f4f4f4" stroke-width="1.1"/>
<rect x="472.6" y="95.5" width="1.2" height="662.5" fill="#3fd3e6"/>
</svg>
<!-- 40_timeline.py -->
<div class="abs" style="left:341px;top:769px;width:1277.5px;height:18px;background:#2b2b2b;"></div>
<div class="abs" style="left:341px;top:769px;width:56.5px;height:19px;background:#323232;"></div>
<div class="abs" style="left:441.5px;top:769px;width:1px;height:18px;background:#252525;"></div>
<div class="t" style="left:348.80px;top:773.10px;font-size:10px;color:#f0f0f0;letter-spacing:0.001px;font-weight:bold;">Timeline</div>
<div class="t" style="left:404.60px;top:773.10px;font-size:10px;color:#707070;letter-spacing:-0.393px;font-weight:bold;">Scene</div>
<svg style="left:1603px;top:774px" width="10.5" height="8" viewBox="0 0 10.5 8"><path d="M0 .5H10.5M0 2.8H10.5M0 5.1H10.5M0 7.4H10.5" stroke="#c4c4c4" stroke-width="1"/></svg>
<div class="abs" style="left:341px;top:788px;width:1277.5px;height:36.5px;background:#323232;"></div>
<div class="abs" style="left:341px;top:824.5px;width:1277.5px;height:1px;background:#272727;"></div>
<div class="abs" style="left:341px;top:825.5px;width:251.5px;height:34px;background:#323232;"></div>
<div class="abs" style="left:341px;top:859.5px;width:251.5px;height:219px;background:#2c2c2c;"></div>
<div class="abs" style="left:592.5px;top:788px;width:1px;height:288px;background:#262626;"></div>
<svg style="left:351px;top:799px" width="14" height="14" viewBox="0 0 14 14" ><rect x="0.7" y="0.7" width="12.6" height="12.6" rx="1" fill="none" stroke="#e6e6e6" stroke-width="1.3"/><path d="M7 3.5V10.5M3.5 7H10.5" stroke="#e6e6e6" stroke-width="1.3"/></svg>
<svg style="left:383px;top:800px" width="15" height="12" viewBox="0 0 15 12" ><path d="M0 1.2C0 0.6 0.4 0.3 1 0.3H5.5L7.2 2H14C14.6 2 15 2.4 15 3V11.7H0Z" fill="#e6e6e6"/><path d="M0 3.6H15" stroke="#323232" stroke-width="0.8"/></svg>
<svg style="left:416.5px;top:799px" width="12.5" height="14" viewBox="0 0 12.5 14" ><path d="M0.2 2.5H12.3M4 2.2C4 0 8.5 0 8.5 2.2" fill="none" stroke="#e6e6e6" stroke-width="1.3"/><path d="M1.3 3.8H11.2L10.2 13.7H2.3Z" fill="#e6e6e6"/><path d="M4.3 5.3L4.6 12.2M6.25 5.3V12.2M8.2 5.3L7.9 12.2" stroke="#323232" stroke-width="0.9"/></svg>
<svg style="left:493.5px;top:802px" width="13" height="9" viewBox="0 0 13 9" ><rect x="0" y="0" width="8.5" height="9" rx="1" fill="#666"/><path d="M8.5 4.5L13 0.8V8.2Z" fill="#666"/></svg>
<svg style="left:526px;top:800px" width="13" height="13" viewBox="0 0 13 13" ><rect x="4" y="0" width="5" height="3.6" fill="#e6e6e6"/><rect x="0" y="8.2" width="5" height="3.8" fill="#e6e6e6"/><rect x="7.5" y="8.2" width="5" height="3.8" fill="#e6e6e6"/><path d="M6.5 3.5V6.2M2.5 8.5V6.2H10V8.5" fill="none" stroke="#e6e6e6" stroke-width="1.1"/><path d="M13 11V13H11Z" fill="#e6e6e6"/></svg>
<svg style="left:557px;top:800px" width="14" height="13" viewBox="0 0 14 13" ><path d="M0.8 0V12.2H13.5" fill="none" stroke="#e6e6e6" stroke-width="1.3"/><path d="M2.5 10.5L10 4.5" stroke="#e6e6e6" stroke-width="1.3"/><path d="M11.5 3.2L7.5 4L10.2 7Z" fill="#e6e6e6"/></svg>
<div class="t" style="left:626.30px;top:803.00px;font-size:12px;color:#b4b4b4;letter-spacing:-0.206px;">30.00</div>
<div class="t" style="left:660.00px;top:801.00px;font-size:8px;color:#a8a8a8;letter-spacing:-0.386px;">FPS</div>
<div class="t" style="left:700.80px;top:803.00px;font-size:12px;color:#6fa8e6;">1</div>
<div class="t" style="left:712.30px;top:799.80px;font-size:9px;color:#e8e8e8;">F</div>
<svg style="left:921px;top:800.5px" width="9" height="12.5" viewBox="0 0 9 12.5" ><path d="M7.5 0.8L1.5 6.25L7.5 11.7" fill="none" stroke="#e6e6e6" stroke-width="1.7"/></svg>
<svg style="left:949.5px;top:796px" width="17" height="18" viewBox="0 0 17 18" ><rect x="0.3" y="4.5" width="11.5" height="12.3" fill="#e6e6e6"/><circle cx="6.3" cy="11.5" r="2.5" fill="#323232"/><path d="M6 11.5L11.5 6" stroke="#323232" stroke-width="1.2"/><path d="M13 17V14H16Z" fill="#e6e6e6" transform="translate(-3.5,0.8)"/></svg>
<div class="t" style="left:960.00px;top:797.00px;font-size:8px;color:#e6e6e6;">A</div>
<svg style="left:982px;top:800.5px" width="9" height="12.5" viewBox="0 0 9 12.5" ><path d="M1.5 0.8L7.5 6.25L1.5 11.7" fill="none" stroke="#e6e6e6" stroke-width="1.7"/></svg>
<div class="abs" style="left:1003.5px;top:793.5px;width:1px;height:26px;background:#4a4a4a;"></div>
<svg style="left:1014px;top:801px" width="19" height="14" viewBox="0 0 19 14" ><circle cx="5.3" cy="5.4" r="5.3" fill="#bdbdbd"/><circle cx="10.5" cy="5.4" r="5.3" fill="#e6e6e6"/><path d="M18.5 10.5V13.5H15.5Z" fill="#e6e6e6"/></svg>
<svg style="left:1045px;top:800px" width="18" height="15" viewBox="0 0 18 15" ><rect x="0" y="0.3" width="3.6" height="12.6" fill="#e6e6e6"/><rect x="5.3" y="0.3" width="3.6" height="12.6" fill="#e6e6e6"/><rect x="10.6" y="0.3" width="3.6" height="12.6" fill="#e6e6e6"/><rect x="6.5" y="9.5" width="1.2" height="2.2" fill="#323232"/><path d="M17.5 11.5V14.5H14.5Z" fill="#e6e6e6"/></svg>
<svg style="left:1074.5px;top:800px" width="18" height="15" viewBox="0 0 18 15" ><rect x="0" y="5" width="8.8" height="8" fill="#e6e6e6"/><rect x="5" y="0.3" width="9.5" height="8.7" fill="#e6e6e6" stroke="#323232" stroke-width="1"/><path d="M8 4.6H12M10.4 2.6L12.2 4.6L10.4 6.6" fill="none" stroke="#323232" stroke-width="1.1"/><path d="M17.5 11.5V14.5H14.5Z" fill="#e6e6e6"/></svg>
<svg style="left:1105px;top:801px" width="15" height="11" viewBox="0 0 15 11" ><path d="M0.3 0.3H14.5V11H10V7H11.3V3.6H3.5V7H4.8V11H0.3Z" fill="#e6e6e6"/></svg>
<div class="abs" style="left:1130.5px;top:793.5px;width:1px;height:26px;background:#4a4a4a;"></div>
<svg style="left:1140.5px;top:798.5px" width="17" height="14" viewBox="0 0 17 14" ><path d="M3.5 4.5H1V12.5H15.8V7" fill="none" stroke="#e6e6e6" stroke-width="1.5"/><path d="M5 4.5H11" stroke="#e6e6e6" stroke-width="1.5"/><path d="M10.5 0.5L15.5 4.5L10.5 8.5Z" fill="#e6e6e6"/></svg>
<svg style="left:1172px;top:800.8px" width="14" height="12" viewBox="0 0 14 12" ><path d="M9 0.3V11.7L0.3 6Z" fill="#e6e6e6"/><rect x="10.8" y="0.3" width="2.6" height="11.4" fill="#e6e6e6"/></svg>
<svg style="left:1202.5px;top:800.5px" width="13" height="12.5" viewBox="0 0 13 12.5" ><path d="M0.5 0.3L12.5 6.25L0.5 12.2Z" fill="#e6e6e6"/></svg>
<svg style="left:1231.5px;top:800.8px" width="14" height="12" viewBox="0 0 14 12" ><rect x="0.3" y="0.3" width="2.6" height="11.4" fill="#e6e6e6"/><path d="M5 0.3V11.7L13.7 6Z" fill="#e6e6e6"/></svg>
<svg style="left:1461.5px;top:801px" width="13" height="11.5" viewBox="0 0 13 11.5" ><path d="M3 3.5H8C12.5 3.5 12.5 8.2 8 8.2H6" fill="none" stroke="#e6e6e6" stroke-width="1.5"/><path d="M0.2 3.5L4.2 0.3V6.7Z" fill="#e6e6e6"/><rect x="0.3" y="10" width="12" height="1.4" fill="#e6e6e6"/></svg>
<div class="abs" style="left:1493.5px;top:806.2px;width:78px;height:1px;background:#484848;"></div>
<svg style="left:1520px;top:799.6px" width="14" height="14" viewBox="0 0 14 14" ><circle cx="7" cy="7" r="5.2" fill="#323232" stroke="#e6e6e6" stroke-width="1.7"/></svg>
<svg style="left:1590px;top:803.5px" width="17" height="9" viewBox="0 0 17 9" ><path d="M6.5 8.7L11.5 0.3L16.5 8.7Z" fill="#e6e6e6"/><path d="M0.3 8.7L4.4 2L5.6 3.8L2.7 8.7Z" fill="#e6e6e6"/></svg>
<svg style="left:351.5px;top:834.5px" width="14.5" height="16" viewBox="0 0 14.5 16" ><path d="M7.25 0.3L14.2 3.9L7.25 7.5L0.3 3.9Z" fill="#e6e6e6"/><path d="M0.3 7.6L2.5 6.5L7.25 9L12 6.5L14.2 7.6L7.25 11.2Z" fill="#e6e6e6"/><path d="M0.3 11.4L2.5 10.3L7.25 12.8L12 10.3L14.2 11.4L7.25 15Z" fill="#e6e6e6"/></svg>
<svg style="left:490px;top:839.3px" width="6" height="6" viewBox="0 0 6 6" ><circle cx="3" cy="3" r="2.7" fill="#e6e6e6"/></svg>
<svg style="left:510.5px;top:836px" width="9.5" height="13" viewBox="0 0 9.5 13" ><rect x="1" y="0.9" width="7.3" height="11.4" fill="none" stroke="#e6e6e6" stroke-width="1.7"/></svg>
<svg style="left:533.5px;top:834.8px" width="15" height="15" viewBox="0 0 15 15" ><path d="M0.8 7.6C3 3.4 11.5 3.4 14.2 7.6C11.5 11.8 3 11.8 0.8 7.6Z" fill="none" stroke="#e6e6e6" stroke-width="1.4"/><circle cx="7.5" cy="7.6" r="2.2" fill="none" stroke="#e6e6e6" stroke-width="1.3"/><path d="M1.5 0.8L14 14.2" stroke="#323232" stroke-width="3"/><path d="M1.5 0.8L14 14.2" stroke="#e6e6e6" stroke-width="1.3"/></svg>
<svg style="left:561.7px;top:835.2px" width="11" height="13" viewBox="0 0 11 13" ><path d="M2.6 6V4.2C2.6 0.8 8.4 0.8 8.4 4.2V6" fill="none" stroke="#e6e6e6" stroke-width="1.5"/><rect x="0.3" y="5.6" width="10.4" height="7.2" rx="0.8" fill="#e6e6e6"/><rect x="4.7" y="7.8" width="1.6" height="3" fill="#323232"/></svg>
<div class="abs" style="left:341px;top:859.3px;width:251.5px;height:1px;background:#262626;"></div>
<div class="abs" style="left:593.5px;top:825.5px;width:1017px;height:34px;background:#303030;"></div>
<div class="abs" style="left:593.5px;top:840.3px;width:1017px;height:0.8px;background:#3e3e3e;"></div>
<svg style="left:593px;top:825.5px" width="1017" height="34" viewBox="0 0 1017 34"><rect x="0.00" y="15.5" width="1" height="6.5" fill="#262626"/><rect x="16.06" y="15.5" width="1" height="6.5" fill="#262626"/><rect x="32.12" y="15.5" width="1" height="6.5" fill="#262626"/><rect x="48.18" y="15.5" width="1" height="6.5" fill="#262626"/><rect x="64.24" y="0" width="1" height="22" fill="#262626"/><rect x="80.30" y="15.5" width="1" height="6.5" fill="#262626"/><rect x="96.36" y="15.5" width="1" height="6.5" fill="#262626"/><rect x="112.42" y="15.5" width="1" height="6.5" fill="#262626"/><rect x="128.48" y="15.5" width="1" height="6.5" fill="#262626"/><rect x="144.54" y="0" width="1" height="22" fill="#262626"/><rect x="160.60" y="15.5" width="1" height="6.5" fill="#262626"/><rect x="176.66" y="15.5" width="1" height="6.5" fill="#262626"/><rect x="192.72" y="15.5" width="1" height="6.5" fill="#262626"/><rect x="208.78" y="15.5" width="1" height="6.5" fill="#262626"/><rect x="224.84" y="0" width="1" height="22" fill="#262626"/><rect x="240.90" y="15.5" width="1" height="6.5" fill="#262626"/><rect x="256.96" y="15.5" width="1" height="6.5" fill="#262626"/><rect x="273.02" y="15.5" width="1" height="6.5" fill="#262626"/><rect x="289.08" y="15.5" width="1" height="6.5" fill="#262626"/><rect x="305.14" y="0" width="1" height="22" fill="#262626"/><rect x="321.20" y="15.5" width="1" height="6.5" fill="#262626"/><rect x="337.26" y="15.5" width="1" height="6.5" fill="#262626"/><rect x="353.32" y="15.5" width="1" height="6.5" fill="#262626"/><rect x="369.38" y="15.5" width="1" height="6.5" fill="#262626"/><rect x="385.44" y="0" width="1" height="22" fill="#262626"/><rect x="401.50" y="15.5" width="1" height="6.5" fill="#262626"/><rect x="417.56" y="15.5" width="1" height="6.5" fill="#262626"/><rect x="433.62" y="15.5" width="1" height="6.5" fill="#262626"/><rect x="449.68" y="15.5" width="1" height="6.5" fill="#262626"/><rect x="465.74" y="0" width="1" height="22" fill="#262626"/><rect x="481.80" y="15.5" width="1" height="6.5" fill="#262626"/><rect x="497.86" y="15.5" width="1" height="6.5" fill="#262626"/><rect x="513.92" y="15.5" width="1" height="6.5" fill="#262626"/><rect x="529.98" y="15.5" width="1" height="6.5" fill="#262626"/><rect x="546.04" y="0" width="1" height="22" fill="#262626"/><rect x="562.10" y="15.5" width="1" height="6.5" fill="#262626"/><rect x="578.16" y="15.5" width="1" height="6.5" fill="#262626"/><rect x="594.22" y="15.5" width="1" height="6.5" fill="#262626"/><rect x="610.28" y="15.5" width="1" height="6.5" fill="#262626"/><rect x="626.34" y="0" width="1" height="22" fill="#262626"/><rect x="642.40" y="15.5" width="1" height="6.5" fill="#262626"/><rect x="658.46" y="15.5" width="1" height="6.5" fill="#262626"/><rect x="674.52" y="15.5" width="1" height="6.5" fill="#262626"/><rect x="690.58" y="15.5" width="1" height="6.5" fill="#262626"/><rect x="706.64" y="0" width="1" height="22" fill="#262626"/><rect x="722.70" y="15.5" width="1" height="6.5" fill="#262626"/><rect x="738.76" y="15.5" width="1" height="6.5" fill="#262626"/><rect x="754.82" y="15.5" width="1" height="6.5" fill="#262626"/><rect x="770.88" y="15.5" width="1" height="6.5" fill="#262626"/><rect x="786.94" y="0" width="1" height="22" fill="#262626"/><rect x="803.00" y="15.5" width="1" height="6.5" fill="#262626"/><rect x="819.06" y="15.5" width="1" height="6.5" fill="#262626"/><rect x="835.12" y="15.5" width="1" height="6.5" fill="#262626"/><rect x="851.18" y="15.5" width="1" height="6.5" fill="#262626"/><rect x="867.24" y="0" width="1" height="22" fill="#262626"/><rect x="883.30" y="15.5" width="1" height="6.5" fill="#262626"/><rect x="899.36" y="15.5" width="1" height="6.5" fill="#262626"/><rect x="915.42" y="15.5" width="1" height="6.5" fill="#262626"/><rect x="931.48" y="15.5" width="1" height="6.5" fill="#262626"/><rect x="947.54" y="0" width="1" height="22" fill="#262626"/><rect x="963.60" y="15.5" width="1" height="6.5" fill="#262626"/><rect x="979.66" y="15.5" width="1" height="6.5" fill="#262626"/><rect x="995.72" y="15.5" width="1" height="6.5" fill="#262626"/><rect x="1011.78" y="15.5" width="1" height="6.5" fill="#262626"/></svg>
<div class="t" style="left:659.04px;top:848.30px;font-size:10px;color:#b8b8b8;">5</div>
<div class="t" style="left:739.34px;top:848.30px;font-size:10px;color:#b8b8b8;letter-spacing:-0.463px;">10</div>
<div class="t" style="left:819.64px;top:848.30px;font-size:10px;color:#b8b8b8;letter-spacing:-0.463px;">15</div>
<div class="t" style="left:899.94px;top:848.30px;font-size:10px;color:#b8b8b8;letter-spacing:-0.463px;">20</div>
<div class="t" style="left:980.24px;top:848.30px;font-size:10px;color:#b8b8b8;letter-spacing:-0.463px;">25</div>
<div class="t" style="left:1060.54px;top:848.30px;font-size:10px;color:#b8b8b8;letter-spacing:-0.463px;">30</div>
<div class="t" style="left:1140.84px;top:848.30px;font-size:10px;color:#b8b8b8;letter-spacing:-0.463px;">35</div>
<div class="t" style="left:1221.14px;top:848.30px;font-size:10px;color:#b8b8b8;letter-spacing:-0.463px;">40</div>
<div class="t" style="left:1301.44px;top:848.30px;font-size:10px;color:#b8b8b8;letter-spacing:-0.463px;">45</div>
<div class="t" style="left:1381.74px;top:848.30px;font-size:10px;color:#b8b8b8;letter-spacing:-0.463px;">50</div>
<div class="t" style="left:1462.04px;top:848.30px;font-size:10px;color:#b8b8b8;letter-spacing:-0.463px;">55</div>
<div class="t" style="left:1542.34px;top:848.30px;font-size:10px;color:#b8b8b8;letter-spacing:-0.463px;">60</div>
<div class="t" style="left:1060.50px;top:828.50px;font-size:11px;color:#a8a8a8;letter-spacing:-0.809px;font-style:italic;">1s</div>
<div class="t" style="left:1542.50px;top:828.50px;font-size:11px;color:#a8a8a8;letter-spacing:-0.059px;font-style:italic;">2s</div>
<div class="abs" style="left:593.5px;top:859.5px;width:1017px;height:200.5px;background:#919191;"></div>
<div class="abs" style="left:593.5px;top:1059.5px;width:1017px;height:19px;background:#262626;"></div>
<svg style="left:593.5px;top:860px" width="1017" height="201" viewBox="0 0 1017 201"><rect x="0" y="-0.70" width="1017" height="1.4" fill="#2a2a2a"/><rect x="0" y="19.22" width="1017" height="1.4" fill="#2a2a2a"/><rect x="0" y="39.14" width="1017" height="1.4" fill="#2a2a2a"/><rect x="0" y="59.06" width="1017" height="1.4" fill="#2a2a2a"/><rect x="0" y="78.98" width="1017" height="1.4" fill="#2a2a2a"/><rect x="0" y="98.90" width="1017" height="1.4" fill="#2a2a2a"/><rect x="0" y="118.82" width="1017" height="1.4" fill="#2a2a2a"/><rect x="0" y="138.74" width="1017" height="1.4" fill="#2a2a2a"/><rect x="0" y="158.66" width="1017" height="1.4" fill="#2a2a2a"/><rect x="0" y="178.58" width="1017" height="1.4" fill="#2a2a2a"/><rect x="0" y="198.50" width="1017" height="1.4" fill="#2a2a2a"/><path d="M13.56 1.30h1.1v1.1h-1.1zM29.62 1.30h1.1v1.1h-1.1zM45.68 1.30h1.1v1.1h-1.1zM61.74 1.30h1.1v1.1h-1.1zM77.80 1.30h1.1v1.1h-1.1zM93.86 1.30h1.1v1.1h-1.1zM109.92 1.30h1.1v1.1h-1.1zM125.98 1.30h1.1v1.1h-1.1zM142.04 1.30h1.1v1.1h-1.1zM158.10 1.30h1.1v1.1h-1.1zM174.16 1.30h1.1v1.1h-1.1zM190.22 1.30h1.1v1.1h-1.1zM206.28 1.30h1.1v1.1h-1.1zM222.34 1.30h1.1v1.1h-1.1zM238.40 1.30h1.1v1.1h-1.1zM254.46 1.30h1.1v1.1h-1.1zM270.52 1.30h1.1v1.1h-1.1zM286.58 1.30h1.1v1.1h-1.1zM302.64 1.30h1.1v1.1h-1.1zM318.70 1.30h1.1v1.1h-1.1zM334.76 1.30h1.1v1.1h-1.1zM350.82 1.30h1.1v1.1h-1.1zM366.88 1.30h1.1v1.1h-1.1zM382.94 1.30h1.1v1.1h-1.1zM399.00 1.30h1.1v1.1h-1.1zM415.06 1.30h1.1v1.1h-1.1zM431.12 1.30h1.1v1.1h-1.1zM447.18 1.30h1.1v1.1h-1.1zM463.24 1.30h1.1v1.1h-1.1zM479.30 1.30h1.1v1.1h-1.1zM495.36 1.30h1.1v1.1h-1.1zM511.42 1.30h1.1v1.1h-1.1zM527.48 1.30h1.1v1.1h-1.1zM543.54 1.30h1.1v1.1h-1.1zM559.60 1.30h1.1v1.1h-1.1zM575.66 1.30h1.1v1.1h-1.1zM591.72 1.30h1.1v1.1h-1.1zM607.78 1.30h1.1v1.1h-1.1zM623.84 1.30h1.1v1.1h-1.1zM639.90 1.30h1.1v1.1h-1.1zM655.96 1.30h1.1v1.1h-1.1zM672.02 1.30h1.1v1.1h-1.1zM688.08 1.30h1.1v1.1h-1.1zM704.14 1.30h1.1v1.1h-1.1zM720.20 1.30h1.1v1.1h-1.1zM736.26 1.30h1.1v1.1h-1.1zM752.32 1.30h1.1v1.1h-1.1zM768.38 1.30h1.1v1.1h-1.1zM784.44 1.30h1.1v1.1h-1.1zM800.50 1.30h1.1v1.1h-1.1zM816.56 1.30h1.1v1.1h-1.1zM832.62 1.30h1.1v1.1h-1.1zM848.68 1.30h1.1v1.1h-1.1zM864.74 1.30h1.1v1.1h-1.1zM880.80 1.30h1.1v1.1h-1.1zM896.86 1.30h1.1v1.1h-1.1zM912.92 1.30h1.1v1.1h-1.1zM928.98 1.30h1.1v1.1h-1.1zM945.04 1.30h1.1v1.1h-1.1zM961.10 1.30h1.1v1.1h-1.1zM977.16 1.30h1.1v1.1h-1.1zM993.22 1.30h1.1v1.1h-1.1zM1009.28 1.30h1.1v1.1h-1.1z" fill="#3c3c3c"/><path d="M13.56 21.22h1.1v1.1h-1.1zM29.62 21.22h1.1v1.1h-1.1zM45.68 21.22h1.1v1.1h-1.1zM61.74 21.22h1.1v1.1h-1.1zM77.80 21.22h1.1v1.1h-1.1zM93.86 21.22h1.1v1.1h-1.1zM109.92 21.22h1.1v1.1h-1.1zM125.98 21.22h1.1v1.1h-1.1zM142.04 21.22h1.1v1.1h-1.1zM158.10 21.22h1.1v1.1h-1.1zM174.16 21.22h1.1v1.1h-1.1zM190.22 21.22h1.1v1.1h-1.1zM206.28 21.22h1.1v1.1h-1.1zM222.34 21.22h1.1v1.1h-1.1zM238.40 21.22h1.1v1.1h-1.1zM254.46 21.22h1.1v1.1h-1.1zM270.52 21.22h1.1v1.1h-1.1zM286.58 21.22h1.1v1.1h-1.1zM302.64 21.22h1.1v1.1h-1.1zM318.70 21.22h1.1v1.1h-1.1zM334.76 21.22h1.1v1.1h-1.1zM350.82 21.22h1.1v1.1h-1.1zM366.88 21.22h1.1v1.1h-1.1zM382.94 21.22h1.1v1.1h-1.1zM399.00 21.22h1.1v1.1h-1.1zM415.06 21.22h1.1v1.1h-1.1zM431.12 21.22h1.1v1.1h-1.1zM447.18 21.22h1.1v1.1h-1.1zM463.24 21.22h1.1v1.1h-1.1zM479.30 21.22h1.1v1.1h-1.1zM495.36 21.22h1.1v1.1h-1.1zM511.42 21.22h1.1v1.1h-1.1zM527.48 21.22h1.1v1.1h-1.1zM543.54 21.22h1.1v1.1h-1.1zM559.60 21.22h1.1v1.1h-1.1zM575.66 21.22h1.1v1.1h-1.1zM591.72 21.22h1.1v1.1h-1.1zM607.78 21.22h1.1v1.1h-1.1zM623.84 21.22h1.1v1.1h-1.1zM639.90 21.22h1.1v1.1h-1.1zM655.96 21.22h1.1v1.1h-1.1zM672.02 21.22h1.1v1.1h-1.1zM688.08 21.22h1.1v1.1h-1.1zM704.14 21.22h1.1v1.1h-1.1zM720.20 21.22h1.1v1.1h-1.1zM736.26 21.22h1.1v1.1h-1.1zM752.32 21.22h1.1v1.1h-1.1zM768.38 21.22h1.1v1.1h-1.1zM784.44 21.22h1.1v1.1h-1.1zM800.50 21.22h1.1v1.1h-1.1zM816.56 21.22h1.1v1.1h-1.1zM832.62 21.22h1.1v1.1h-1.1zM848.68 21.22h1.1v1.1h-1.1zM864.74 21.22h1.1v1.1h-1.1zM880.80 21.22h1.1v1.1h-1.1zM896.86 21.22h1.1v1.1h-1.1zM912.92 21.22h1.1v1.1h-1.1zM928.98 21.22h1.1v1.1h-1.1zM945.04 21.22h1.1v1.1h-1.1zM961.10 21.22h1.1v1.1h-1.1zM977.16 21.22h1.1v1.1h-1.1zM993.22 21.22h1.1v1.1h-1.1zM1009.28 21.22h1.1v1.1h-1.1z" fill="#3c3c3c"/><path d="M13.56 41.14h1.1v1.1h-1.1zM29.62 41.14h1.1v1.1h-1.1zM45.68 41.14h1.1v1.1h-1.1zM61.74 41.14h1.1v1.1h-1.1zM77.80 41.14h1.1v1.1h-1.1zM93.86 41.14h1.1v1.1h-1.1zM109.92 41.14h1.1v1.1h-1.1zM125.98 41.14h1.1v1.1h-1.1zM142.04 41.14h1.1v1.1h-1.1zM158.10 41.14h1.1v1.1h-1.1zM174.16 41.14h1.1v1.1h-1.1zM190.22 41.14h1.1v1.1h-1.1zM206.28 41.14h1.1v1.1h-1.1zM222.34 41.14h1.1v1.1h-1.1zM238.40 41.14h1.1v1.1h-1.1zM254.46 41.14h1.1v1.1h-1.1zM270.52 41.14h1.1v1.1h-1.1zM286.58 41.14h1.1v1.1h-1.1zM302.64 41.14h1.1v1.1h-1.1zM318.70 41.14h1.1v1.1h-1.1zM334.76 41.14h1.1v1.1h-1.1zM350.82 41.14h1.1v1.1h-1.1zM366.88 41.14h1.1v1.1h-1.1zM382.94 41.14h1.1v1.1h-1.1zM399.00 41.14h1.1v1.1h-1.1zM415.06 41.14h1.1v1.1h-1.1zM431.12 41.14h1.1v1.1h-1.1zM447.18 41.14h1.1v1.1h-1.1zM463.24 41.14h1.1v1.1h-1.1zM479.30 41.14h1.1v1.1h-1.1zM495.36 41.14h1.1v1.1h-1.1zM511.42 41.14h1.1v1.1h-1.1zM527.48 41.14h1.1v1.1h-1.1zM543.54 41.14h1.1v1.1h-1.1zM559.60 41.14h1.1v1.1h-1.1zM575.66 41.14h1.1v1.1h-1.1zM591.72 41.14h1.1v1.1h-1.1zM607.78 41.14h1.1v1.1h-1.1zM623.84 41.14h1.1v1.1h-1.1zM639.90 41.14h1.1v1.1h-1.1zM655.96 41.14h1.1v1.1h-1.1zM672.02 41.14h1.1v1.1h-1.1zM688.08 41.14h1.1v1.1h-1.1zM704.14 41.14h1.1v1.1h-1.1zM720.20 41.14h1.1v1.1h-1.1zM736.26 41.14h1.1v1.1h-1.1zM752.32 41.14h1.1v1.1h-1.1zM768.38 41.14h1.1v1.1h-1.1zM784.44 41.14h1.1v1.1h-1.1zM800.50 41.14h1.1v1.1h-1.1zM816.56 41.14h1.1v1.1h-1.1zM832.62 41.14h1.1v1.1h-1.1zM848.68 41.14h1.1v1.1h-1.1zM864.74 41.14h1.1v1.1h-1.1zM880.80 41.14h1.1v1.1h-1.1zM896.86 41.14h1.1v1.1h-1.1zM912.92 41.14h1.1v1.1h-1.1zM928.98 41.14h1.1v1.1h-1.1zM945.04 41.14h1.1v1.1h-1.1zM961.10 41.14h1.1v1.1h-1.1zM977.16 41.14h1.1v1.1h-1.1zM993.22 41.14h1.1v1.1h-1.1zM1009.28 41.14h1.1v1.1h-1.1z" fill="#3c3c3c"/><path d="M13.56 61.06h1.1v1.1h-1.1zM29.62 61.06h1.1v1.1h-1.1zM45.68 61.06h1.1v1.1h-1.1zM61.74 61.06h1.1v1.1h-1.1zM77.80 61.06h1.1v1.1h-1.1zM93.86 61.06h1.1v1.1h-1.1zM109.92 61.06h1.1v1.1h-1.1zM125.98 61.06h1.1v1.1h-1.1zM142.04 61.06h1.1v1.1h-1.1zM158.10 61.06h1.1v1.1h-1.1zM174.16 61.06h1.1v1.1h-1.1zM190.22 61.06h1.1v1.1h-1.1zM206.28 61.06h1.1v1.1h-1.1zM222.34 61.06h1.1v1.1h-1.1zM238.40 61.06h1.1v1.1h-1.1zM254.46 61.06h1.1v1.1h-1.1zM270.52 61.06h1.1v1.1h-1.1zM286.58 61.06h1.1v1.1h-1.1zM302.64 61.06h1.1v1.1h-1.1zM318.70 61.06h1.1v1.1h-1.1zM334.76 61.06h1.1v1.1h-1.1zM350.82 61.06h1.1v1.1h-1.1zM366.88 61.06h1.1v1.1h-1.1zM382.94 61.06h1.1v1.1h-1.1zM399.00 61.06h1.1v1.1h-1.1zM415.06 61.06h1.1v1.1h-1.1zM431.12 61.06h1.1v1.1h-1.1zM447.18 61.06h1.1v1.1h-1.1zM463.24 61.06h1.1v1.1h-1.1zM479.30 61.06h1.1v1.1h-1.1zM495.36 61.06h1.1v1.1h-1.1zM511.42 61.06h1.1v1.1h-1.1zM527.48 61.06h1.1v1.1h-1.1zM543.54 61.06h1.1v1.1h-1.1zM559.60 61.06h1.1v1.1h-1.1zM575.66 61.06h1.1v1.1h-1.1zM591.72 61.06h1.1v1.1h-1.1zM607.78 61.06h1.1v1.1h-1.1zM623.84 61.06h1.1v1.1h-1.1zM639.90 61.06h1.1v1.1h-1.1zM655.96 61.06h1.1v1.1h-1.1zM672.02 61.06h1.1v1.1h-1.1zM688.08 61.06h1.1v1.1h-1.1zM704.14 61.06h1.1v1.1h-1.1zM720.20 61.06h1.1v1.1h-1.1zM736.26 61.06h1.1v1.1h-1.1zM752.32 61.06h1.1v1.1h-1.1zM768.38 61.06h1.1v1.1h-1.1zM784.44 61.06h1.1v1.1h-1.1zM800.50 61.06h1.1v1.1h-1.1zM816.56 61.06h1.1v1.1h-1.1zM832.62 61.06h1.1v1.1h-1.1zM848.68 61.06h1.1v1.1h-1.1zM864.74 61.06h1.1v1.1h-1.1zM880.80 61.06h1.1v1.1h-1.1zM896.86 61.06h1.1v1.1h-1.1zM912.92 61.06h1.1v1.1h-1.1zM928.98 61.06h1.1v1.1h-1.1zM945.04 61.06h1.1v1.1h-1.1zM961.10 61.06h1.1v1.1h-1.1zM977.16 61.06h1.1v1.1h-1.1zM993.22 61.06h1.1v1.1h-1.1zM1009.28 61.06h1.1v1.1h-1.1z" fill="#3c3c3c"/><path d="M13.56 80.98h1.1v1.1h-1.1zM29.62 80.98h1.1v1.1h-1.1zM45.68 80.98h1.1v1.1h-1.1zM61.74 80.98h1.1v1.1h-1.1zM77.80 80.98h1.1v1.1h-1.1zM93.86 80.98h1.1v1.1h-1.1zM109.92 80.98h1.1v1.1h-1.1zM125.98 80.98h1.1v1.1h-1.1zM142.04 80.98h1.1v1.1h-1.1zM158.10 80.98h1.1v1.1h-1.1zM174.16 80.98h1.1v1.1h-1.1zM190.22 80.98h1.1v1.1h-1.1zM206.28 80.98h1.1v1.1h-1.1zM222.34 80.98h1.1v1.1h-1.1zM238.40 80.98h1.1v1.1h-1.1zM254.46 80.98h1.1v1.1h-1.1zM270.52 80.98h1.1v1.1h-1.1zM286.58 80.98h1.1v1.1h-1.1zM302.64 80.98h1.1v1.1h-1.1zM318.70 80.98h1.1v1.1h-1.1zM334.76 80.98h1.1v1.1h-1.1zM350.82 80.98h1.1v1.1h-1.1zM366.88 80.98h1.1v1.1h-1.1zM382.94 80.98h1.1v1.1h-1.1zM399.00 80.98h1.1v1.1h-1.1zM415.06 80.98h1.1v1.1h-1.1zM431.12 80.98h1.1v1.1h-1.1zM447.18 80.98h1.1v1.1h-1.1zM463.24 80.98h1.1v1.1h-1.1zM479.30 80.98h1.1v1.1h-1.1zM495.36 80.98h1.1v1.1h-1.1zM511.42 80.98h1.1v1.1h-1.1zM527.48 80.98h1.1v1.1h-1.1zM543.54 80.98h1.1v1.1h-1.1zM559.60 80.98h1.1v1.1h-1.1zM575.66 80.98h1.1v1.1h-1.1zM591.72 80.98h1.1v1.1h-1.1zM607.78 80.98h1.1v1.1h-1.1zM623.84 80.98h1.1v1.1h-1.1zM639.90 80.98h1.1v1.1h-1.1zM655.96 80.98h1.1v1.1h-1.1zM672.02 80.98h1.1v1.1h-1.1zM688.08 80.98h1.1v1.1h-1.1zM704.14 80.98h1.1v1.1h-1.1zM720.20 80.98h1.1v1.1h-1.1zM736.26 80.98h1.1v1.1h-1.1zM752.32 80.98h1.1v1.1h-1.1zM768.38 80.98h1.1v1.1h-1.1zM784.44 80.98h1.1v1.1h-1.1zM800.50 80.98h1.1v1.1h-1.1zM816.56 80.98h1.1v1.1h-1.1zM832.62 80.98h1.1v1.1h-1.1zM848.68 80.98h1.1v1.1h-1.1zM864.74 80.98h1.1v1.1h-1.1zM880.80 80.98h1.1v1.1h-1.1zM896.86 80.98h1.1v1.1h-1.1zM912.92 80.98h1.1v1.1h-1.1zM928.98 80.98h1.1v1.1h-1.1zM945.04 80.98h1.1v1.1h-1.1zM961.10 80.98h1.1v1.1h-1.1zM977.16 80.98h1.1v1.1h-1.1zM993.22 80.98h1.1v1.1h-1.1zM1009.28 80.98h1.1v1.1h-1.1z" fill="#3c3c3c"/><path d="M13.56 100.90h1.1v1.1h-1.1zM29.62 100.90h1.1v1.1h-1.1zM45.68 100.90h1.1v1.1h-1.1zM61.74 100.90h1.1v1.1h-1.1zM77.80 100.90h1.1v1.1h-1.1zM93.86 100.90h1.1v1.1h-1.1zM109.92 100.90h1.1v1.1h-1.1zM125.98 100.90h1.1v1.1h-1.1zM142.04 100.90h1.1v1.1h-1.1zM158.10 100.90h1.1v1.1h-1.1zM174.16 100.90h1.1v1.1h-1.1zM190.22 100.90h1.1v1.1h-1.1zM206.28 100.90h1.1v1.1h-1.1zM222.34 100.90h1.1v1.1h-1.1zM238.40 100.90h1.1v1.1h-1.1zM254.46 100.90h1.1v1.1h-1.1zM270.52 100.90h1.1v1.1h-1.1zM286.58 100.90h1.1v1.1h-1.1zM302.64 100.90h1.1v1.1h-1.1zM318.70 100.90h1.1v1.1h-1.1zM334.76 100.90h1.1v1.1h-1.1zM350.82 100.90h1.1v1.1h-1.1zM366.88 100.90h1.1v1.1h-1.1zM382.94 100.90h1.1v1.1h-1.1zM399.00 100.90h1.1v1.1h-1.1zM415.06 100.90h1.1v1.1h-1.1zM431.12 100.90h1.1v1.1h-1.1zM447.18 100.90h1.1v1.1h-1.1zM463.24 100.90h1.1v1.1h-1.1zM479.30 100.90h1.1v1.1h-1.1zM495.36 100.90h1.1v1.1h-1.1zM511.42 100.90h1.1v1.1h-1.1zM527.48 100.90h1.1v1.1h-1.1zM543.54 100.90h1.1v1.1h-1.1zM559.60 100.90h1.1v1.1h-1.1zM575.66 100.90h1.1v1.1h-1.1zM591.72 100.90h1.1v1.1h-1.1zM607.78 100.90h1.1v1.1h-1.1zM623.84 100.90h1.1v1.1h-1.1zM639.90 100.90h1.1v1.1h-1.1zM655.96 100.90h1.1v1.1h-1.1zM672.02 100.90h1.1v1.1h-1.1zM688.08 100.90h1.1v1.1h-1.1zM704.14 100.90h1.1v1.1h-1.1zM720.20 100.90h1.1v1.1h-1.1zM736.26 100.90h1.1v1.1h-1.1zM752.32 100.90h1.1v1.1h-1.1zM768.38 100.90h1.1v1.1h-1.1zM784.44 100.90h1.1v1.1h-1.1zM800.50 100.90h1.1v1.1h-1.1zM816.56 100.90h1.1v1.1h-1.1zM832.62 100.90h1.1v1.1h-1.1zM848.68 100.90h1.1v1.1h-1.1zM864.74 100.90h1.1v1.1h-1.1zM880.80 100.90h1.1v1.1h-1.1zM896.86 100.90h1.1v1.1h-1.1zM912.92 100.90h1.1v1.1h-1.1zM928.98 100.90h1.1v1.1h-1.1zM945.04 100.90h1.1v1.1h-1.1zM961.10 100.90h1.1v1.1h-1.1zM977.16 100.90h1.1v1.1h-1.1zM993.22 100.90h1.1v1.1h-1.1zM1009.28 100.90h1.1v1.1h-1.1z" fill="#3c3c3c"/><path d="M13.56 120.82h1.1v1.1h-1.1zM29.62 120.82h1.1v1.1h-1.1zM45.68 120.82h1.1v1.1h-1.1zM61.74 120.82h1.1v1.1h-1.1zM77.80 120.82h1.1v1.1h-1.1zM93.86 120.82h1.1v1.1h-1.1zM109.92 120.82h1.1v1.1h-1.1zM125.98 120.82h1.1v1.1h-1.1zM142.04 120.82h1.1v1.1h-1.1zM158.10 120.82h1.1v1.1h-1.1zM174.16 120.82h1.1v1.1h-1.1zM190.22 120.82h1.1v1.1h-1.1zM206.28 120.82h1.1v1.1h-1.1zM222.34 120.82h1.1v1.1h-1.1zM238.40 120.82h1.1v1.1h-1.1zM254.46 120.82h1.1v1.1h-1.1zM270.52 120.82h1.1v1.1h-1.1zM286.58 120.82h1.1v1.1h-1.1zM302.64 120.82h1.1v1.1h-1.1zM318.70 120.82h1.1v1.1h-1.1zM334.76 120.82h1.1v1.1h-1.1zM350.82 120.82h1.1v1.1h-1.1zM366.88 120.82h1.1v1.1h-1.1zM382.94 120.82h1.1v1.1h-1.1zM399.00 120.82h1.1v1.1h-1.1zM415.06 120.82h1.1v1.1h-1.1zM431.12 120.82h1.1v1.1h-1.1zM447.18 120.82h1.1v1.1h-1.1zM463.24 120.82h1.1v1.1h-1.1zM479.30 120.82h1.1v1.1h-1.1zM495.36 120.82h1.1v1.1h-1.1zM511.42 120.82h1.1v1.1h-1.1zM527.48 120.82h1.1v1.1h-1.1zM543.54 120.82h1.1v1.1h-1.1zM559.60 120.82h1.1v1.1h-1.1zM575.66 120.82h1.1v1.1h-1.1zM591.72 120.82h1.1v1.1h-1.1zM607.78 120.82h1.1v1.1h-1.1zM623.84 120.82h1.1v1.1h-1.1zM639.90 120.82h1.1v1.1h-1.1zM655.96 120.82h1.1v1.1h-1.1zM672.02 120.82h1.1v1.1h-1.1zM688.08 120.82h1.1v1.1h-1.1zM704.14 120.82h1.1v1.1h-1.1zM720.20 120.82h1.1v1.1h-1.1zM736.26 120.82h1.1v1.1h-1.1zM752.32 120.82h1.1v1.1h-1.1zM768.38 120.82h1.1v1.1h-1.1zM784.44 120.82h1.1v1.1h-1.1zM800.50 120.82h1.1v1.1h-1.1zM816.56 120.82h1.1v1.1h-1.1zM832.62 120.82h1.1v1.1h-1.1zM848.68 120.82h1.1v1.1h-1.1zM864.74 120.82h1.1v1.1h-1.1zM880.80 120.82h1.1v1.1h-1.1zM896.86 120.82h1.1v1.1h-1.1zM912.92 120.82h1.1v1.1h-1.1zM928.98 120.82h1.1v1.1h-1.1zM945.04 120.82h1.1v1.1h-1.1zM961.10 120.82h1.1v1.1h-1.1zM977.16 120.82h1.1v1.1h-1.1zM993.22 120.82h1.1v1.1h-1.1zM1009.28 120.82h1.1v1.1h-1.1z" fill="#3c3c3c"/><path d="M13.56 140.74h1.1v1.1h-1.1zM29.62 140.74h1.1v1.1h-1.1zM45.68 140.74h1.1v1.1h-1.1zM61.74 140.74h1.1v1.1h-1.1zM77.80 140.74h1.1v1.1h-1.1zM93.86 140.74h1.1v1.1h-1.1zM109.92 140.74h1.1v1.1h-1.1zM125.98 140.74h1.1v1.1h-1.1zM142.04 140.74h1.1v1.1h-1.1zM158.10 140.74h1.1v1.1h-1.1zM174.16 140.74h1.1v1.1h-1.1zM190.22 140.74h1.1v1.1h-1.1zM206.28 140.74h1.1v1.1h-1.1zM222.34 140.74h1.1v1.1h-1.1zM238.40 140.74h1.1v1.1h-1.1zM254.46 140.74h1.1v1.1h-1.1zM270.52 140.74h1.1v1.1h-1.1zM286.58 140.74h1.1v1.1h-1.1zM302.64 140.74h1.1v1.1h-1.1zM318.70 140.74h1.1v1.1h-1.1zM334.76 140.74h1.1v1.1h-1.1zM350.82 140.74h1.1v1.1h-1.1zM366.88 140.74h1.1v1.1h-1.1zM382.94 140.74h1.1v1.1h-1.1zM399.00 140.74h1.1v1.1h-1.1zM415.06 140.74h1.1v1.1h-1.1zM431.12 140.74h1.1v1.1h-1.1zM447.18 140.74h1.1v1.1h-1.1zM463.24 140.74h1.1v1.1h-1.1zM479.30 140.74h1.1v1.1h-1.1zM495.36 140.74h1.1v1.1h-1.1zM511.42 140.74h1.1v1.1h-1.1zM527.48 140.74h1.1v1.1h-1.1zM543.54 140.74h1.1v1.1h-1.1zM559.60 140.74h1.1v1.1h-1.1zM575.66 140.74h1.1v1.1h-1.1zM591.72 140.74h1.1v1.1h-1.1zM607.78 140.74h1.1v1.1h-1.1zM623.84 140.74h1.1v1.1h-1.1zM639.90 140.74h1.1v1.1h-1.1zM655.96 140.74h1.1v1.1h-1.1zM672.02 140.74h1.1v1.1h-1.1zM688.08 140.74h1.1v1.1h-1.1zM704.14 140.74h1.1v1.1h-1.1zM720.20 140.74h1.1v1.1h-1.1zM736.26 140.74h1.1v1.1h-1.1zM752.32 140.74h1.1v1.1h-1.1zM768.38 140.74h1.1v1.1h-1.1zM784.44 140.74h1.1v1.1h-1.1zM800.50 140.74h1.1v1.1h-1.1zM816.56 140.74h1.1v1.1h-1.1zM832.62 140.74h1.1v1.1h-1.1zM848.68 140.74h1.1v1.1h-1.1zM864.74 140.74h1.1v1.1h-1.1zM880.80 140.74h1.1v1.1h-1.1zM896.86 140.74h1.1v1.1h-1.1zM912.92 140.74h1.1v1.1h-1.1zM928.98 140.74h1.1v1.1h-1.1zM945.04 140.74h1.1v1.1h-1.1zM961.10 140.74h1.1v1.1h-1.1zM977.16 140.74h1.1v1.1h-1.1zM993.22 140.74h1.1v1.1h-1.1zM1009.28 140.74h1.1v1.1h-1.1z" fill="#3c3c3c"/><path d="M13.56 160.66h1.1v1.1h-1.1zM29.62 160.66h1.1v1.1h-1.1zM45.68 160.66h1.1v1.1h-1.1zM61.74 160.66h1.1v1.1h-1.1zM77.80 160.66h1.1v1.1h-1.1zM93.86 160.66h1.1v1.1h-1.1zM109.92 160.66h1.1v1.1h-1.1zM125.98 160.66h1.1v1.1h-1.1zM142.04 160.66h1.1v1.1h-1.1zM158.10 160.66h1.1v1.1h-1.1zM174.16 160.66h1.1v1.1h-1.1zM190.22 160.66h1.1v1.1h-1.1zM206.28 160.66h1.1v1.1h-1.1zM222.34 160.66h1.1v1.1h-1.1zM238.40 160.66h1.1v1.1h-1.1zM254.46 160.66h1.1v1.1h-1.1zM270.52 160.66h1.1v1.1h-1.1zM286.58 160.66h1.1v1.1h-1.1zM302.64 160.66h1.1v1.1h-1.1zM318.70 160.66h1.1v1.1h-1.1zM334.76 160.66h1.1v1.1h-1.1zM350.82 160.66h1.1v1.1h-1.1zM366.88 160.66h1.1v1.1h-1.1zM382.94 160.66h1.1v1.1h-1.1zM399.00 160.66h1.1v1.1h-1.1zM415.06 160.66h1.1v1.1h-1.1zM431.12 160.66h1.1v1.1h-1.1zM447.18 160.66h1.1v1.1h-1.1zM463.24 160.66h1.1v1.1h-1.1zM479.30 160.66h1.1v1.1h-1.1zM495.36 160.66h1.1v1.1h-1.1zM511.42 160.66h1.1v1.1h-1.1zM527.48 160.66h1.1v1.1h-1.1zM543.54 160.66h1.1v1.1h-1.1zM559.60 160.66h1.1v1.1h-1.1zM575.66 160.66h1.1v1.1h-1.1zM591.72 160.66h1.1v1.1h-1.1zM607.78 160.66h1.1v1.1h-1.1zM623.84 160.66h1.1v1.1h-1.1zM639.90 160.66h1.1v1.1h-1.1zM655.96 160.66h1.1v1.1h-1.1zM672.02 160.66h1.1v1.1h-1.1zM688.08 160.66h1.1v1.1h-1.1zM704.14 160.66h1.1v1.1h-1.1zM720.20 160.66h1.1v1.1h-1.1zM736.26 160.66h1.1v1.1h-1.1zM752.32 160.66h1.1v1.1h-1.1zM768.38 160.66h1.1v1.1h-1.1zM784.44 160.66h1.1v1.1h-1.1zM800.50 160.66h1.1v1.1h-1.1zM816.56 160.66h1.1v1.1h-1.1zM832.62 160.66h1.1v1.1h-1.1zM848.68 160.66h1.1v1.1h-1.1zM864.74 160.66h1.1v1.1h-1.1zM880.80 160.66h1.1v1.1h-1.1zM896.86 160.66h1.1v1.1h-1.1zM912.92 160.66h1.1v1.1h-1.1zM928.98 160.66h1.1v1.1h-1.1zM945.04 160.66h1.1v1.1h-1.1zM961.10 160.66h1.1v1.1h-1.1zM977.16 160.66h1.1v1.1h-1.1zM993.22 160.66h1.1v1.1h-1.1zM1009.28 160.66h1.1v1.1h-1.1z" fill="#3c3c3c"/><path d="M13.56 180.58h1.1v1.1h-1.1zM29.62 180.58h1.1v1.1h-1.1zM45.68 180.58h1.1v1.1h-1.1zM61.74 180.58h1.1v1.1h-1.1zM77.80 180.58h1.1v1.1h-1.1zM93.86 180.58h1.1v1.1h-1.1zM109.92 180.58h1.1v1.1h-1.1zM125.98 180.58h1.1v1.1h-1.1zM142.04 180.58h1.1v1.1h-1.1zM158.10 180.58h1.1v1.1h-1.1zM174.16 180.58h1.1v1.1h-1.1zM190.22 180.58h1.1v1.1h-1.1zM206.28 180.58h1.1v1.1h-1.1zM222.34 180.58h1.1v1.1h-1.1zM238.40 180.58h1.1v1.1h-1.1zM254.46 180.58h1.1v1.1h-1.1zM270.52 180.58h1.1v1.1h-1.1zM286.58 180.58h1.1v1.1h-1.1zM302.64 180.58h1.1v1.1h-1.1zM318.70 180.58h1.1v1.1h-1.1zM334.76 180.58h1.1v1.1h-1.1zM350.82 180.58h1.1v1.1h-1.1zM366.88 180.58h1.1v1.1h-1.1zM382.94 180.58h1.1v1.1h-1.1zM399.00 180.58h1.1v1.1h-1.1zM415.06 180.58h1.1v1.1h-1.1zM431.12 180.58h1.1v1.1h-1.1zM447.18 180.58h1.1v1.1h-1.1zM463.24 180.58h1.1v1.1h-1.1zM479.30 180.58h1.1v1.1h-1.1zM495.36 180.58h1.1v1.1h-1.1zM511.42 180.58h1.1v1.1h-1.1zM527.48 180.58h1.1v1.1h-1.1zM543.54 180.58h1.1v1.1h-1.1zM559.60 180.58h1.1v1.1h-1.1zM575.66 180.58h1.1v1.1h-1.1zM591.72 180.58h1.1v1.1h-1.1zM607.78 180.58h1.1v1.1h-1.1zM623.84 180.58h1.1v1.1h-1.1zM639.90 180.58h1.1v1.1h-1.1zM655.96 180.58h1.1v1.1h-1.1zM672.02 180.58h1.1v1.1h-1.1zM688.08 180.58h1.1v1.1h-1.1zM704.14 180.58h1.1v1.1h-1.1zM720.20 180.58h1.1v1.1h-1.1zM736.26 180.58h1.1v1.1h-1.1zM752.32 180.58h1.1v1.1h-1.1zM768.38 180.58h1.1v1.1h-1.1zM784.44 180.58h1.1v1.1h-1.1zM800.50 180.58h1.1v1.1h-1.1zM816.56 180.58h1.1v1.1h-1.1zM832.62 180.58h1.1v1.1h-1.1zM848.68 180.58h1.1v1.1h-1.1zM864.74 180.58h1.1v1.1h-1.1zM880.80 180.58h1.1v1.1h-1.1zM896.86 180.58h1.1v1.1h-1.1zM912.92 180.58h1.1v1.1h-1.1zM928.98 180.58h1.1v1.1h-1.1zM945.04 180.58h1.1v1.1h-1.1zM961.10 180.58h1.1v1.1h-1.1zM977.16 180.58h1.1v1.1h-1.1zM993.22 180.58h1.1v1.1h-1.1zM1009.28 180.58h1.1v1.1h-1.1z" fill="#3c3c3c"/></svg>
<div class="abs" style="left:594px;top:860px;width:14px;height:199.5px;background:rgba(74,144,226,0.55);"></div>
<svg style="left:593.5px;top:860px" width="16" height="201" viewBox="0 0 16 201"><ellipse cx="7.5" cy="11.60" rx="2.3" ry="2.9" fill="#1d4f8c"/><ellipse cx="7.5" cy="31.52" rx="2.3" ry="2.9" fill="#1d4f8c"/><ellipse cx="7.5" cy="51.44" rx="2.3" ry="2.9" fill="#1d4f8c"/><ellipse cx="7.5" cy="71.36" rx="2.3" ry="2.9" fill="#1d4f8c"/><ellipse cx="7.5" cy="91.28" rx="2.3" ry="2.9" fill="#1d4f8c"/><ellipse cx="7.5" cy="111.20" rx="2.3" ry="2.9" fill="#1d4f8c"/><ellipse cx="7.5" cy="131.12" rx="2.3" ry="2.9" fill="#1d4f8c"/><ellipse cx="7.5" cy="151.04" rx="2.3" ry="2.9" fill="#1d4f8c"/><ellipse cx="7.5" cy="170.96" rx="2.3" ry="2.9" fill="#1d4f8c"/><ellipse cx="7.5" cy="190.88" rx="2.3" ry="2.9" fill="#1a1a1a"/></svg>
<svg style="left:594px;top:825.3px" width="14" height="35" viewBox="0 0 14 35" ><path d="M0 0.7C0 0.3 0.3 0 0.7 0H13.3C13.7 0 14 0.3 14 0.7V30L7 34.5L0 30Z" fill="#3b82d2"/></svg>
<div class="abs" style="left:600.3px;top:859px;width:1.5px;height:217px;background:#4a90e2;"></div>
<div class="abs" style="left:341px;top:879.3199999999999px;width:251.5px;height:1px;background:#272727;"></div>
<svg style="left:370px;top:863.3px" width="12" height="12" viewBox="0 0 12 12" ><path d="M1 0.3H11.7V11.7H4.5L0.3 8V1C0.3 0.6 0.6 0.3 1 0.3Z" fill="#c4c4c4"/><path d="M0.3 7.6H4.8V11.7" fill="none" stroke="#555" stroke-width="1"/><path d="M1.2 8.6H3.8V11L1.2 8.6Z" fill="#8a8a8a"/></svg>
<div class="t" style="left:393.20px;top:865.75px;font-size:10.5px;color:#d4d4d4;letter-spacing:-0.381px;">J_Full_Face</div>
<div class="abs" style="left:512.8px;top:863.3px;width:6.4px;height:12.4px;background:#a335d0;"></div>
<div class="abs" style="left:341px;top:880.42px;width:251.5px;height:18.92px;background:#33659b;"></div>
<svg style="left:370px;top:883.2px" width="12" height="12" viewBox="0 0 12 12" ><path d="M1 0.3H11.7V11.7H4.5L0.3 8V1C0.3 0.6 0.6 0.3 1 0.3Z" fill="#c4c4c4"/><path d="M0.3 7.6H4.8V11.7" fill="none" stroke="#555" stroke-width="1"/><path d="M1.2 8.6H3.8V11L1.2 8.6Z" fill="#8a8a8a"/></svg>
<div class="t" style="left:393.20px;top:885.67px;font-size:10.5px;color:#e0e0e0;letter-spacing:-0.337px;">J_Front_Hand</div>
<div class="abs" style="left:512.8px;top:883.2px;width:6.4px;height:12.4px;background:#ff8a14;"></div>
<div class="abs" style="left:341px;top:919.16px;width:251.5px;height:1px;background:#272727;"></div>
<svg style="left:370px;top:903.1px" width="12" height="12" viewBox="0 0 12 12" ><path d="M1 0.3H11.7V11.7H4.5L0.3 8V1C0.3 0.6 0.6 0.3 1 0.3Z" fill="#c4c4c4"/><path d="M0.3 7.6H4.8V11.7" fill="none" stroke="#555" stroke-width="1"/><path d="M1.2 8.6H3.8V11L1.2 8.6Z" fill="#8a8a8a"/></svg>
<div class="t" style="left:393.20px;top:905.59px;font-size:10.5px;color:#d4d4d4;letter-spacing:-0.087px;">J_Body</div>
<div class="abs" style="left:512.8px;top:903.1px;width:6.4px;height:12.4px;background:#f84ff0;"></div>
<div class="abs" style="left:341px;top:939.0799999999999px;width:251.5px;height:1px;background:#272727;"></div>
<svg style="left:370px;top:923.1px" width="12" height="12" viewBox="0 0 12 12" ><path d="M1 0.3H11.7V11.7H4.5L0.3 8V1C0.3 0.6 0.6 0.3 1 0.3Z" fill="#c4c4c4"/><path d="M0.3 7.6H4.8V11.7" fill="none" stroke="#555" stroke-width="1"/><path d="M1.2 8.6H3.8V11L1.2 8.6Z" fill="#8a8a8a"/></svg>
<div class="t" style="left:393.20px;top:925.51px;font-size:10.5px;color:#d4d4d4;letter-spacing:-0.320px;">J_Back_Hair</div>
<div class="abs" style="left:512.8px;top:923.1px;width:6.4px;height:12.4px;background:#129e9e;"></div>
<div class="abs" style="left:341px;top:959.0px;width:251.5px;height:1px;background:#272727;"></div>
<svg style="left:370px;top:943.0px" width="12" height="12" viewBox="0 0 12 12" ><path d="M1 0.3H11.7V11.7H4.5L0.3 8V1C0.3 0.6 0.6 0.3 1 0.3Z" fill="#c4c4c4"/><path d="M0.3 7.6H4.8V11.7" fill="none" stroke="#555" stroke-width="1"/><path d="M1.2 8.6H3.8V11L1.2 8.6Z" fill="#8a8a8a"/></svg>
<div class="t" style="left:393.20px;top:945.43px;font-size:10.5px;color:#d4d4d4;letter-spacing:-0.398px;">J_Lunge</div>
<div class="abs" style="left:512.8px;top:943.0px;width:6.4px;height:12.4px;background:#f41414;"></div>
<div class="abs" style="left:341px;top:978.92px;width:251.5px;height:1px;background:#272727;"></div>
<svg style="left:370px;top:962.9px" width="12" height="12" viewBox="0 0 12 12" ><path d="M1 0.3H11.7V11.7H4.5L0.3 8V1C0.3 0.6 0.6 0.3 1 0.3Z" fill="#c4c4c4"/><path d="M0.3 7.6H4.8V11.7" fill="none" stroke="#555" stroke-width="1"/><path d="M1.2 8.6H3.8V11L1.2 8.6Z" fill="#8a8a8a"/></svg>
<div class="t" style="left:393.20px;top:965.35px;font-size:10.5px;color:#d4d4d4;letter-spacing:-0.269px;">J_Front_Lag</div>
<div class="abs" style="left:512.8px;top:962.9px;width:6.4px;height:12.4px;background:#66a312;"></div>
<div class="abs" style="left:341px;top:998.8399999999999px;width:251.5px;height:1px;background:#272727;"></div>
<svg style="left:370px;top:982.8px" width="12" height="12" viewBox="0 0 12 12" ><path d="M1 0.3H11.7V11.7H4.5L0.3 8V1C0.3 0.6 0.6 0.3 1 0.3Z" fill="#c4c4c4"/><path d="M0.3 7.6H4.8V11.7" fill="none" stroke="#555" stroke-width="1"/><path d="M1.2 8.6H3.8V11L1.2 8.6Z" fill="#8a8a8a"/></svg>
<div class="t" style="left:393.20px;top:985.27px;font-size:10.5px;color:#d4d4d4;letter-spacing:-0.379px;">J_Back_leg</div>
<div class="abs" style="left:512.8px;top:982.8px;width:6.4px;height:12.4px;background:#f4504f;"></div>
<div class="abs" style="left:341px;top:1018.76px;width:251.5px;height:1px;background:#272727;"></div>
<svg style="left:370px;top:1002.7px" width="12" height="12" viewBox="0 0 12 12" ><path d="M1 0.3H11.7V11.7H4.5L0.3 8V1C0.3 0.6 0.6 0.3 1 0.3Z" fill="#c4c4c4"/><path d="M0.3 7.6H4.8V11.7" fill="none" stroke="#555" stroke-width="1"/><path d="M1.2 8.6H3.8V11L1.2 8.6Z" fill="#8a8a8a"/></svg>
<div class="t" style="left:393.20px;top:1005.19px;font-size:10.5px;color:#d4d4d4;letter-spacing:-0.398px;">J_Back_Hand</div>
<div class="abs" style="left:512.8px;top:1002.7px;width:6.4px;height:12.4px;background:#14f0f4;"></div>
<div class="abs" style="left:341px;top:1038.68px;width:251.5px;height:1px;background:#272727;"></div>
<svg style="left:370px;top:1022.7px" width="12" height="12" viewBox="0 0 12 12" ><path d="M1 0.3H11.7V11.7H4.5L0.3 8V1C0.3 0.6 0.6 0.3 1 0.3Z" fill="#c4c4c4"/><path d="M0.3 7.6H4.8V11.7" fill="none" stroke="#555" stroke-width="1"/><path d="M1.2 8.6H3.8V11L1.2 8.6Z" fill="#8a8a8a"/></svg>
<div class="t" style="left:393.20px;top:1025.11px;font-size:10.5px;color:#d4d4d4;letter-spacing:-0.373px;">J_Back_Lunge</div>
<div class="abs" style="left:512.8px;top:1022.7px;width:6.4px;height:12.4px;background:#a335d0;"></div>
<div class="abs" style="left:341px;top:1058.6000000000001px;width:251.5px;height:1px;background:#272727;"></div>
<svg style="left:370px;top:1042.6px" width="12" height="12" viewBox="0 0 12 12" ><path d="M1 0.3H11.7V11.7H4.5L0.3 8V1C0.3 0.6 0.6 0.3 1 0.3Z" fill="#c4c4c4"/><path d="M0.3 7.6H4.8V11.7" fill="none" stroke="#555" stroke-width="1"/><path d="M1.2 8.6H3.8V11L1.2 8.6Z" fill="#8a8a8a"/></svg>
<div class="t" style="left:393.20px;top:1045.03px;font-size:10.5px;color:#d4d4d4;letter-spacing:-0.158px;">Shadow</div>
<div class="abs" style="left:512.8px;top:1042.6px;width:6.4px;height:12.4px;background:#ff8a14;"></div>
<svg style="left:562px;top:1041.78px" width="11" height="13" viewBox="0 0 11 13" ><path d="M2.6 6V4.2C2.6 0.8 8.4 0.8 8.4 4.2V6" fill="none" stroke="#d8d8d8" stroke-width="1.5"/><rect x="0.3" y="5.6" width="10.4" height="7.2" rx="0.8" fill="#d8d8d8"/><rect x="4.7" y="7.8" width="1.6" height="3" fill="#2c2c2c"/></svg>
<div class="abs" style="left:593.5px;top:1072px;width:1017px;height:6.3px;background:#595959;"></div>
<div class="abs" style="left:593.5px;top:1072px;width:84px;height:6.3px;background:#d4d4d4;"></div>
<!-- 50_library.py -->
<div class="abs" style="left:1622px;top:42px;width:298px;height:11px;background:#303030;"></div>
<svg style="left:1910px;top:45px" width="8" height="6" viewBox="0 0 8 6"><path d="M3.2 .4L.8 2.6L3.2 4.8M7 .4L4.6 2.6L7 4.8" transform="translate(7.8,0) scale(-1,1)" fill="none" stroke="#d8d8d8" stroke-width="1.2"/></svg>
<div class="abs" style="left:1622px;top:54.5px;width:298px;height:17px;background:#2b2b2b;"></div>
<div class="abs" style="left:1686px;top:54.5px;width:49px;height:18px;background:#323232;"></div>
<div class="abs" style="left:1685.5px;top:54.5px;width:1px;height:17px;background:#252525;"></div>
<div class="abs" style="left:1735px;top:54.5px;width:1px;height:17px;background:#252525;"></div>
<div class="abs" style="left:1820.5px;top:54.5px;width:1px;height:17px;background:#252525;"></div>
<div class="abs" style="left:1868px;top:54.5px;width:1px;height:17px;background:#252525;"></div>
<div class="t" style="left:1628.50px;top:57.50px;font-size:10px;color:#6c6c6c;letter-spacing:-0.197px;font-weight:bold;">Properties</div>
<div class="t" style="left:1693.00px;top:57.50px;font-size:10px;color:#f0f0f0;letter-spacing:-0.130px;font-weight:bold;">Library</div>
<div class="t" style="left:1741.50px;top:57.50px;font-size:10px;color:#6c6c6c;letter-spacing:-0.121px;font-weight:bold;">Motion Presets</div>
<div class="t" style="left:1828.00px;top:57.50px;font-size:10px;color:#6c6c6c;letter-spacing:-0.634px;font-weight:bold;">Assets</div>
<svg style="left:1912.5px;top:58.5px" width="8" height="8" viewBox="0 0 8 8"><path d="M0 .5H8M0 2.8H8M0 5.1H8M0 7.4H8" stroke="#c4c4c4" stroke-width="1"/></svg>
<div class="abs" style="left:1622px;top:71.5px;width:298px;height:1007px;background:#323232;"></div>
<div class="abs" style="left:1625.5px;top:77.5px;width:243px;height:20px;border:1px solid #636363;border-radius:4px;background:#272727"></div>
<div class="t" style="left:1635.20px;top:82.00px;font-size:12px;color:#e6e6e6;letter-spacing:-0.494px;">Junglie Aadmi Character Rigged.fla</div>
<svg style="left:1848px;top:83.5px" width="12" height="8" viewBox="0 0 12 8"><path d="M1 1.2L6 6.2L11 1.2" fill="none" stroke="#e2e2e2" stroke-width="1.8"/></svg>
<svg style="left:1875px;top:84px" width="20" height="10" viewBox="0 0 20 10"><path d="M0 5H12" stroke="#bdbdbd" stroke-width="1.6"/><circle cx="14.5" cy="5" r="3.8" fill="#cfcfcf"/></svg>
<svg style="left:1902px;top:81px" width="19" height="17" viewBox="0 0 19 17"><rect x="0.8" y="0.8" width="10" height="11.5" rx="1" fill="none" stroke="#cfcfcf" stroke-width="1.4"/><rect x="4.5" y="4.2" width="11" height="12" rx="1" fill="#bdbdbd"/></svg>
<div class="abs" style="left:1622px;top:101.3px;width:298px;height:1px;background:#3d3d3d;"></div>
<div class="abs" style="left:1622px;top:241.5px;width:298px;height:6.5px;background:#565656;"></div>
<div class="t" style="left:1625.50px;top:255.00px;font-size:12px;color:#e2e2e2;letter-spacing:-0.356px;">32 items</div>
<div class="abs" style="left:1787px;top:249.5px;width:140px;height:20.5px;border:1px solid #5e5e5e;border-radius:4px;background:#1c1c1c"></div>
<svg style="left:1794.5px;top:252.5px" width="16" height="16" viewBox="0 0 16 16"><circle cx="6.2" cy="6.2" r="4.7" fill="none" stroke="#e2e2e2" stroke-width="1.5"/><path d="M9.6 9.6L14.6 14.6" stroke="#e2e2e2" stroke-width="1.8"/></svg>
<div class="abs" style="left:1853.5px;top:272.5px;width:1px;height:32.5px;background:#272727;"></div>
<div class="t" style="left:1637.40px;top:284.25px;font-size:10.5px;color:#dcdcdc;letter-spacing:-0.452px;">Name</div>
<svg style="left:1677px;top:283.5px" width="8" height="10" viewBox="0 0 8 10"><path d="M4 9.8V1.5M0.8 4.3L4 1L7.2 4.3" fill="none" stroke="#dcdcdc" stroke-width="1.4"/></svg>
<div class="t" style="left:1869.60px;top:284.25px;font-size:10.5px;color:#dcdcdc;letter-spacing:-0.369px;">Linkage</div>
<div class="abs" style="left:1622px;top:305px;width:296px;height:760px;border:1px solid #454545;border-right:none;border-bottom:none;border-radius:4px 0 0 0;background:#323232"></div>
<svg style="left:1644.7px;top:309.5px" width="17" height="16" viewBox="0 0 17 16"><path d="M1 10.2L9.3 1.2L10.6 5" fill="none" stroke="#dadada" stroke-width="1.4" stroke-linejoin="round"/><path d="M1 10.2H7" stroke="#dadada" stroke-width="1.4"/><rect x="9.2" y="6" width="7.3" height="7.6" fill="#dadada"/><circle cx="7.4" cy="11.6" r="3.3" fill="#323232" stroke="#dadada" stroke-width="1.5"/></svg>
<div class="t" style="left:1669.80px;top:312.70px;font-size:12px;color:#e2e2e2;letter-spacing:-0.502px;">J Front D leg</div>
<svg style="left:1644.7px;top:335.7px" width="17" height="16" viewBox="0 0 17 16"><path d="M1 10.2L9.3 1.2L10.6 5" fill="none" stroke="#dadada" stroke-width="1.4" stroke-linejoin="round"/><path d="M1 10.2H7" stroke="#dadada" stroke-width="1.4"/><rect x="9.2" y="6" width="7.3" height="7.6" fill="#dadada"/><circle cx="7.4" cy="11.6" r="3.3" fill="#323232" stroke="#dadada" stroke-width="1.5"/></svg>
<div class="t" style="left:1667.50px;top:338.88px;font-size:12px;color:#e2e2e2;letter-spacing:-0.576px;">J Back Army</div>
<svg style="left:1644.7px;top:361.9px" width="17" height="16" viewBox="0 0 17 16"><path d="M1 10.2L9.3 1.2L10.6 5" fill="none" stroke="#dadada" stroke-width="1.4" stroke-linejoin="round"/><path d="M1 10.2H7" stroke="#dadada" stroke-width="1.4"/><rect x="9.2" y="6" width="7.3" height="7.6" fill="#dadada"/><circle cx="7.4" cy="11.6" r="3.3" fill="#323232" stroke="#dadada" stroke-width="1.5"/></svg>
<div class="t" style="left:1667.50px;top:365.06px;font-size:12px;color:#e2e2e2;letter-spacing:-0.570px;">J Back D hand</div>
<svg style="left:1644.7px;top:388.0px" width="17" height="16" viewBox="0 0 17 16"><path d="M1 10.2L9.3 1.2L10.6 5" fill="none" stroke="#dadada" stroke-width="1.4" stroke-linejoin="round"/><path d="M1 10.2H7" stroke="#dadada" stroke-width="1.4"/><rect x="9.2" y="6" width="7.3" height="7.6" fill="#dadada"/><circle cx="7.4" cy="11.6" r="3.3" fill="#323232" stroke="#dadada" stroke-width="1.5"/></svg>
<div class="t" style="left:1667.50px;top:391.24px;font-size:12px;color:#e2e2e2;letter-spacing:-0.533px;">J Back D leg</div>
<svg style="left:1644.7px;top:414.2px" width="17" height="16" viewBox="0 0 17 16"><path d="M1 10.2L9.3 1.2L10.6 5" fill="none" stroke="#dadada" stroke-width="1.4" stroke-linejoin="round"/><path d="M1 10.2H7" stroke="#dadada" stroke-width="1.4"/><rect x="9.2" y="6" width="7.3" height="7.6" fill="#dadada"/><circle cx="7.4" cy="11.6" r="3.3" fill="#323232" stroke="#dadada" stroke-width="1.5"/></svg>
<div class="t" style="left:1667.50px;top:417.42px;font-size:12px;color:#e2e2e2;letter-spacing:-0.547px;">J Back Foot</div>
<svg style="left:1644.7px;top:440.4px" width="17" height="16" viewBox="0 0 17 16"><path d="M1 10.2L9.3 1.2L10.6 5" fill="none" stroke="#dadada" stroke-width="1.4" stroke-linejoin="round"/><path d="M1 10.2H7" stroke="#dadada" stroke-width="1.4"/><rect x="9.2" y="6" width="7.3" height="7.6" fill="#dadada"/><circle cx="7.4" cy="11.6" r="3.3" fill="#323232" stroke="#dadada" stroke-width="1.5"/></svg>
<div class="t" style="left:1667.50px;top:443.60px;font-size:12px;color:#e2e2e2;letter-spacing:-0.530px;">J Back Hair</div>
<svg style="left:1644.7px;top:466.6px" width="17" height="16" viewBox="0 0 17 16"><path d="M1 10.2L9.3 1.2L10.6 5" fill="none" stroke="#dadada" stroke-width="1.4" stroke-linejoin="round"/><path d="M1 10.2H7" stroke="#dadada" stroke-width="1.4"/><rect x="9.2" y="6" width="7.3" height="7.6" fill="#dadada"/><circle cx="7.4" cy="11.6" r="3.3" fill="#323232" stroke="#dadada" stroke-width="1.5"/></svg>
<div class="t" style="left:1667.50px;top:469.78px;font-size:12px;color:#e2e2e2;letter-spacing:-0.588px;">J Back Hand</div>
<svg style="left:1644.7px;top:492.8px" width="17" height="16" viewBox="0 0 17 16"><path d="M1 10.2L9.3 1.2L10.6 5" fill="none" stroke="#dadada" stroke-width="1.4" stroke-linejoin="round"/><path d="M1 10.2H7" stroke="#dadada" stroke-width="1.4"/><rect x="9.2" y="6" width="7.3" height="7.6" fill="#dadada"/><circle cx="7.4" cy="11.6" r="3.3" fill="#323232" stroke="#dadada" stroke-width="1.5"/></svg>
<div class="t" style="left:1667.50px;top:495.96px;font-size:12px;color:#e2e2e2;letter-spacing:-0.526px;">J Back leg</div>
<svg style="left:1644.7px;top:518.9px" width="17" height="16" viewBox="0 0 17 16"><path d="M1 10.2L9.3 1.2L10.6 5" fill="none" stroke="#dadada" stroke-width="1.4" stroke-linejoin="round"/><path d="M1 10.2H7" stroke="#dadada" stroke-width="1.4"/><rect x="9.2" y="6" width="7.3" height="7.6" fill="#dadada"/><circle cx="7.4" cy="11.6" r="3.3" fill="#323232" stroke="#dadada" stroke-width="1.5"/></svg>
<div class="t" style="left:1667.50px;top:522.14px;font-size:12px;color:#e2e2e2;letter-spacing:-0.576px;">J Back Lunge</div>
<svg style="left:1644.7px;top:545.1px" width="17" height="16" viewBox="0 0 17 16"><path d="M1 10.2L9.3 1.2L10.6 5" fill="none" stroke="#dadada" stroke-width="1.4" stroke-linejoin="round"/><path d="M1 10.2H7" stroke="#dadada" stroke-width="1.4"/><rect x="9.2" y="6" width="7.3" height="7.6" fill="#dadada"/><circle cx="7.4" cy="11.6" r="3.3" fill="#323232" stroke="#dadada" stroke-width="1.5"/></svg>
<div class="t" style="left:1667.50px;top:548.32px;font-size:12px;color:#e2e2e2;letter-spacing:-0.581px;">J Body</div>
<svg style="left:1644.7px;top:571.3px" width="17" height="16" viewBox="0 0 17 16"><path d="M1 10.2L9.3 1.2L10.6 5" fill="none" stroke="#dadada" stroke-width="1.4" stroke-linejoin="round"/><path d="M1 10.2H7" stroke="#dadada" stroke-width="1.4"/><rect x="9.2" y="6" width="7.3" height="7.6" fill="#dadada"/><circle cx="7.4" cy="11.6" r="3.3" fill="#323232" stroke="#dadada" stroke-width="1.5"/></svg>
<div class="t" style="left:1667.50px;top:574.50px;font-size:12px;color:#e2e2e2;letter-spacing:-0.528px;">J Foot</div>
<svg style="left:1644.7px;top:597.5px" width="17" height="16" viewBox="0 0 17 16"><path d="M1 10.2L9.3 1.2L10.6 5" fill="none" stroke="#dadada" stroke-width="1.4" stroke-linejoin="round"/><path d="M1 10.2H7" stroke="#dadada" stroke-width="1.4"/><rect x="9.2" y="6" width="7.3" height="7.6" fill="#dadada"/><circle cx="7.4" cy="11.6" r="3.3" fill="#323232" stroke="#dadada" stroke-width="1.5"/></svg>
<div class="t" style="left:1667.50px;top:600.68px;font-size:12px;color:#e2e2e2;letter-spacing:-0.549px;">J Front Hand</div>
<svg style="left:1644.7px;top:623.7px" width="17" height="16" viewBox="0 0 17 16"><path d="M1 10.2L9.3 1.2L10.6 5" fill="none" stroke="#dadada" stroke-width="1.4" stroke-linejoin="round"/><path d="M1 10.2H7" stroke="#dadada" stroke-width="1.4"/><rect x="9.2" y="6" width="7.3" height="7.6" fill="#dadada"/><circle cx="7.4" cy="11.6" r="3.3" fill="#323232" stroke="#dadada" stroke-width="1.5"/></svg>
<div class="t" style="left:1667.50px;top:626.86px;font-size:12px;color:#e2e2e2;letter-spacing:-0.524px;">J Front Lag</div>
<svg style="left:1644.7px;top:649.8px" width="17" height="16" viewBox="0 0 17 16"><path d="M1 10.2L9.3 1.2L10.6 5" fill="none" stroke="#dadada" stroke-width="1.4" stroke-linejoin="round"/><path d="M1 10.2H7" stroke="#dadada" stroke-width="1.4"/><rect x="9.2" y="6" width="7.3" height="7.6" fill="#dadada"/><circle cx="7.4" cy="11.6" r="3.3" fill="#323232" stroke="#dadada" stroke-width="1.5"/></svg>
<div class="t" style="left:1667.50px;top:653.04px;font-size:12px;color:#e2e2e2;letter-spacing:-0.507px;">J Full Face</div>
<svg style="left:1644.7px;top:676.0px" width="17" height="16" viewBox="0 0 17 16"><path d="M1 10.2L9.3 1.2L10.6 5" fill="none" stroke="#dadada" stroke-width="1.4" stroke-linejoin="round"/><path d="M1 10.2H7" stroke="#dadada" stroke-width="1.4"/><rect x="9.2" y="6" width="7.3" height="7.6" fill="#dadada"/><circle cx="7.4" cy="11.6" r="3.3" fill="#323232" stroke="#dadada" stroke-width="1.5"/></svg>
<div class="t" style="left:1667.50px;top:679.22px;font-size:12px;color:#e2e2e2;letter-spacing:-0.580px;">J Lunge</div>
<svg style="left:1644.7px;top:702.2px" width="17" height="16" viewBox="0 0 17 16"><path d="M1 10.2L9.3 1.2L10.6 5" fill="none" stroke="#dadada" stroke-width="1.4" stroke-linejoin="round"/><path d="M1 10.2H7" stroke="#dadada" stroke-width="1.4"/><rect x="9.2" y="6" width="7.3" height="7.6" fill="#dadada"/><circle cx="7.4" cy="11.6" r="3.3" fill="#323232" stroke="#dadada" stroke-width="1.5"/></svg>
<div class="t" style="left:1667.50px;top:705.40px;font-size:12px;color:#e2e2e2;letter-spacing:-0.560px;">J nose</div>
<svg style="left:1644.7px;top:728.4px" width="17" height="16" viewBox="0 0 17 16"><path d="M1 10.2L9.3 1.2L10.6 5" fill="none" stroke="#dadada" stroke-width="1.4" stroke-linejoin="round"/><path d="M1 10.2H7" stroke="#dadada" stroke-width="1.4"/><rect x="9.2" y="6" width="7.3" height="7.6" fill="#dadada"/><circle cx="7.4" cy="11.6" r="3.3" fill="#323232" stroke="#dadada" stroke-width="1.5"/></svg>
<div class="t" style="left:1667.50px;top:731.58px;font-size:12px;color:#e2e2e2;letter-spacing:-0.591px;">JA B Eyebrow</div>
<svg style="left:1644.7px;top:754.6px" width="17" height="16" viewBox="0 0 17 16"><path d="M1 10.2L9.3 1.2L10.6 5" fill="none" stroke="#dadada" stroke-width="1.4" stroke-linejoin="round"/><path d="M1 10.2H7" stroke="#dadada" stroke-width="1.4"/><rect x="9.2" y="6" width="7.3" height="7.6" fill="#dadada"/><circle cx="7.4" cy="11.6" r="3.3" fill="#323232" stroke="#dadada" stroke-width="1.5"/></svg>
<div class="t" style="left:1667.50px;top:757.76px;font-size:12px;color:#e2e2e2;letter-spacing:-0.558px;">JA B Eyebrow In</div>
<svg style="left:1644.7px;top:780.7px" width="17" height="16" viewBox="0 0 17 16"><path d="M1 10.2L9.3 1.2L10.6 5" fill="none" stroke="#dadada" stroke-width="1.4" stroke-linejoin="round"/><path d="M1 10.2H7" stroke="#dadada" stroke-width="1.4"/><rect x="9.2" y="6" width="7.3" height="7.6" fill="#dadada"/><circle cx="7.4" cy="11.6" r="3.3" fill="#323232" stroke="#dadada" stroke-width="1.5"/></svg>
<div class="t" style="left:1667.50px;top:783.94px;font-size:12px;color:#e2e2e2;letter-spacing:-0.560px;">JA Ear</div>
<svg style="left:1644.7px;top:806.9px" width="17" height="16" viewBox="0 0 17 16"><path d="M1 10.2L9.3 1.2L10.6 5" fill="none" stroke="#dadada" stroke-width="1.4" stroke-linejoin="round"/><path d="M1 10.2H7" stroke="#dadada" stroke-width="1.4"/><rect x="9.2" y="6" width="7.3" height="7.6" fill="#dadada"/><circle cx="7.4" cy="11.6" r="3.3" fill="#323232" stroke="#dadada" stroke-width="1.5"/></svg>
<div class="t" style="left:1667.50px;top:810.12px;font-size:12px;color:#e2e2e2;letter-spacing:-0.532px;">JA Eyeball</div>
<svg style="left:1644.7px;top:833.1px" width="17" height="16" viewBox="0 0 17 16"><path d="M1 10.2L9.3 1.2L10.6 5" fill="none" stroke="#dadada" stroke-width="1.4" stroke-linejoin="round"/><path d="M1 10.2H7" stroke="#dadada" stroke-width="1.4"/><rect x="9.2" y="6" width="7.3" height="7.6" fill="#dadada"/><circle cx="7.4" cy="11.6" r="3.3" fill="#323232" stroke="#dadada" stroke-width="1.5"/></svg>
<div class="t" style="left:1667.50px;top:836.30px;font-size:12px;color:#e2e2e2;letter-spacing:-0.507px;">JA Eyeball In</div>
<svg style="left:1644.7px;top:859.3px" width="17" height="16" viewBox="0 0 17 16"><path d="M1 10.2L9.3 1.2L10.6 5" fill="none" stroke="#dadada" stroke-width="1.4" stroke-linejoin="round"/><path d="M1 10.2H7" stroke="#dadada" stroke-width="1.4"/><rect x="9.2" y="6" width="7.3" height="7.6" fill="#dadada"/><circle cx="7.4" cy="11.6" r="3.3" fill="#323232" stroke="#dadada" stroke-width="1.5"/></svg>
<div class="t" style="left:1667.50px;top:862.48px;font-size:12px;color:#e2e2e2;letter-spacing:-0.588px;">JA Eyes</div>
<svg style="left:1644.7px;top:885.5px" width="17" height="16" viewBox="0 0 17 16"><path d="M1 10.2L9.3 1.2L10.6 5" fill="none" stroke="#dadada" stroke-width="1.4" stroke-linejoin="round"/><path d="M1 10.2H7" stroke="#dadada" stroke-width="1.4"/><rect x="9.2" y="6" width="7.3" height="7.6" fill="#dadada"/><circle cx="7.4" cy="11.6" r="3.3" fill="#323232" stroke="#dadada" stroke-width="1.5"/></svg>
<div class="t" style="left:1667.50px;top:888.66px;font-size:12px;color:#e2e2e2;letter-spacing:-0.578px;">JA F Arm</div>
<svg style="left:1644.7px;top:911.6px" width="17" height="16" viewBox="0 0 17 16"><path d="M1 10.2L9.3 1.2L10.6 5" fill="none" stroke="#dadada" stroke-width="1.4" stroke-linejoin="round"/><path d="M1 10.2H7" stroke="#dadada" stroke-width="1.4"/><rect x="9.2" y="6" width="7.3" height="7.6" fill="#dadada"/><circle cx="7.4" cy="11.6" r="3.3" fill="#323232" stroke="#dadada" stroke-width="1.5"/></svg>
<div class="t" style="left:1667.50px;top:914.84px;font-size:12px;color:#e2e2e2;letter-spacing:-0.591px;">JA F Dn Hand</div>
<svg style="left:1644.7px;top:937.8px" width="17" height="16" viewBox="0 0 17 16"><path d="M1 10.2L9.3 1.2L10.6 5" fill="none" stroke="#dadada" stroke-width="1.4" stroke-linejoin="round"/><path d="M1 10.2H7" stroke="#dadada" stroke-width="1.4"/><rect x="9.2" y="6" width="7.3" height="7.6" fill="#dadada"/><circle cx="7.4" cy="11.6" r="3.3" fill="#323232" stroke="#dadada" stroke-width="1.5"/></svg>
<div class="t" style="left:1667.50px;top:941.02px;font-size:12px;color:#e2e2e2;letter-spacing:-0.586px;">JA F Eyebrow</div>
<svg style="left:1644.7px;top:964.0px" width="17" height="16" viewBox="0 0 17 16"><path d="M1 10.2L9.3 1.2L10.6 5" fill="none" stroke="#dadada" stroke-width="1.4" stroke-linejoin="round"/><path d="M1 10.2H7" stroke="#dadada" stroke-width="1.4"/><rect x="9.2" y="6" width="7.3" height="7.6" fill="#dadada"/><circle cx="7.4" cy="11.6" r="3.3" fill="#323232" stroke="#dadada" stroke-width="1.5"/></svg>
<div class="t" style="left:1667.50px;top:967.20px;font-size:12px;color:#e2e2e2;letter-spacing:-0.553px;">JA F Eyebrow In</div>
<svg style="left:1644.7px;top:990.2px" width="17" height="16" viewBox="0 0 17 16"><path d="M1 10.2L9.3 1.2L10.6 5" fill="none" stroke="#dadada" stroke-width="1.4" stroke-linejoin="round"/><path d="M1 10.2H7" stroke="#dadada" stroke-width="1.4"/><rect x="9.2" y="6" width="7.3" height="7.6" fill="#dadada"/><circle cx="7.4" cy="11.6" r="3.3" fill="#323232" stroke="#dadada" stroke-width="1.5"/></svg>
<div class="t" style="left:1667.50px;top:993.38px;font-size:12px;color:#e2e2e2;letter-spacing:-0.544px;">JA Face Part</div>
<svg style="left:1644.7px;top:1016.4px" width="17" height="16" viewBox="0 0 17 16"><path d="M1 10.2L9.3 1.2L10.6 5" fill="none" stroke="#dadada" stroke-width="1.4" stroke-linejoin="round"/><path d="M1 10.2H7" stroke="#dadada" stroke-width="1.4"/><rect x="9.2" y="6" width="7.3" height="7.6" fill="#dadada"/><circle cx="7.4" cy="11.6" r="3.3" fill="#323232" stroke="#dadada" stroke-width="1.5"/></svg>
<div class="t" style="left:1667.50px;top:1019.56px;font-size:12px;color:#e2e2e2;letter-spacing:-0.539px;">JA Jowline</div>
<svg style="left:1644.7px;top:1042.5px" width="17" height="16" viewBox="0 0 17 16"><path d="M1 10.2L9.3 1.2L10.6 5" fill="none" stroke="#dadada" stroke-width="1.4" stroke-linejoin="round"/><path d="M1 10.2H7" stroke="#dadada" stroke-width="1.4"/><rect x="9.2" y="6" width="7.3" height="7.6" fill="#dadada"/><circle cx="7.4" cy="11.6" r="3.3" fill="#323232" stroke="#dadada" stroke-width="1.5"/></svg>
<div class="t" style="left:1667.50px;top:1045.74px;font-size:12px;color:#e2e2e2;letter-spacing:-0.525px;">JA Lips</div>
<div class="abs" style="left:1917.5px;top:305px;width:2.5px;height:755px;background:#565656;"></div>
<div class="abs" style="left:1917.5px;top:305px;width:2.5px;height:700px;background:#d4d4d4;"></div>
<div class="abs" style="left:1622px;top:1061px;width:298px;height:19px;background:#323232;"></div>
<svg style="left:1624px;top:1065.5px" width="11" height="11" viewBox="0 0 11 11"><rect x="0.6" y="0.6" width="9.8" height="9.8" fill="none" stroke="#e2e2e2" stroke-width="1.1"/><path d="M5.5 2.8V8.2M2.8 5.5H8.2" stroke="#e2e2e2" stroke-width="1.1"/></svg>
<svg style="left:1641px;top:1065.5px" width="13" height="11" viewBox="0 0 13 11"><path d="M0 1C0 0.5 0.3 0.2 0.8 0.2H4.6L6 1.7H12.2C12.7 1.7 13 2 13 2.5V10.8H0Z" fill="#e2e2e2"/></svg>
<svg style="left:1656px;top:1064.5px" width="12" height="12" viewBox="0 0 12 12"><circle cx="6" cy="6" r="5.8" fill="#e2e2e2"/><rect x="5.1" y="5" width="1.8" height="4.6" fill="#323232"/><circle cx="6" cy="3.2" r="1.1" fill="#323232"/></svg>
<svg style="left:1673px;top:1064.5px" width="10" height="12" viewBox="0 0 10 12"><path d="M0.2 2.2H9.8M3.2 2C3.2 0.2 6.8 0.2 6.8 2" fill="none" stroke="#e2e2e2" stroke-width="1.1"/><path d="M1 3.3H9L8.2 11.8H1.8Z" fill="#e2e2e2"/><path d="M3.5 4.5V10.5M5 4.5V10.5M6.5 4.5V10.5" stroke="#323232" stroke-width="0.7"/></svg>
<div class="abs" style="left:1686px;top:1072px;width:221px;height:6.3px;background:#585858;"></div>
<div class="abs" style="left:1686px;top:1072px;width:117.2px;height:6.3px;background:#d4d4d4;"></div>
<!-- 60_overlays.py -->
<svg style="left:0;top:0;pointer-events:none" width="1920" height="1080" viewBox="0 0 1920 1080" opacity="0.105">
<defs><mask id="mh" maskUnits="userSpaceOnUse" x="0" y="-3" width="130" height="118"><rect x="0" y="-3" width="130" height="118" fill="#fff"/><rect x="43.3" y="23.3" width="42.5" height="44.2" rx="5.5" fill="#000"/></mask></defs>
<g transform="translate(467,9) rotate(-45) scale(0.56) translate(-98.7,-112.9)"><g transform="translate(34.2,67.5)" fill="#000"><rect x="12.5" y="0" width="104.1" height="90" rx="17" mask="url(#mh)"/><rect x="0" y="69.2" width="130" height="20.8" rx="3"/><rect x="15.8" y="86" width="27.5" height="27.3" rx="2.2"/><rect x="85.8" y="86" width="28.4" height="27.3" rx="2.2"/></g><text x="169.2 219.8 272.5" y="162.8" style="font:bold 78px Liberation Sans,sans-serif" fill="#000" stroke="#000" stroke-width="5.4" stroke-linejoin="round">yug</text><polygon points="164.6,59.4 161.4,47 167.4,31.8 168.6,29.6 171.2,22.8 193,30 190.6,37.2 189.2,38.6 186.6,46.4" fill="#000"/><path d="M132 47.5C145 47 152 55 156.7 65C161 74 170 79 182 78.3M155.5 46L157.8 83" fill="none" stroke="#000" stroke-width="0.9"/><circle cx="132" cy="47.5" r="1.8" fill="#000"/><circle cx="156.7" cy="65" r="1.8" fill="#000"/><circle cx="182" cy="78.3" r="1.8" fill="#000"/></g>
<g transform="translate(767,37) rotate(-45) scale(0.56) translate(-98.7,-112.9)"><g transform="translate(34.2,67.5)" fill="#000"><rect x="12.5" y="0" width="104.1" height="90" rx="17" mask="url(#mh)"/><rect x="0" y="69.2" width="130" height="20.8" rx="3"/><rect x="15.8" y="86" width="27.5" height="27.3" rx="2.2"/><rect x="85.8" y="86" width="28.4" height="27.3" rx="2.2"/></g><text x="169.2 219.8 272.5" y="162.8" style="font:bold 78px Liberation Sans,sans-serif" fill="#000" stroke="#000" stroke-width="5.4" stroke-linejoin="round">yug</text><polygon points="164.6,59.4 161.4,47 167.4,31.8 168.6,29.6 171.2,22.8 193,30 190.6,37.2 189.2,38.6 186.6,46.4" fill="#000"/><path d="M132 47.5C145 47 152 55 156.7 65C161 74 170 79 182 78.3M155.5 46L157.8 83" fill="none" stroke="#000" stroke-width="0.9"/><circle cx="132" cy="47.5" r="1.8" fill="#000"/><circle cx="156.7" cy="65" r="1.8" fill="#000"/><circle cx="182" cy="78.3" r="1.8" fill="#000"/></g>
<g transform="translate(1067,65) rotate(-45) scale(0.56) translate(-98.7,-112.9)"><g transform="translate(34.2,67.5)" fill="#000"><rect x="12.5" y="0" width="104.1" height="90" rx="17" mask="url(#mh)"/><rect x="0" y="69.2" width="130" height="20.8" rx="3"/><rect x="15.8" y="86" width="27.5" height="27.3" rx="2.2"/><rect x="85.8" y="86" width="28.4" height="27.3" rx="2.2"/></g><text x="169.2 219.8 272.5" y="162.8" style="font:bold 78px Liberation Sans,sans-serif" fill="#000" stroke="#000" stroke-width="5.4" stroke-linejoin="round">yug</text><polygon points="164.6,59.4 161.4,47 167.4,31.8 168.6,29.6 171.2,22.8 193,30 190.6,37.2 189.2,38.6 186.6,46.4" fill="#000"/><path d="M132 47.5C145 47 152 55 156.7 65C161 74 170 79 182 78.3M155.5 46L157.8 83" fill="none" stroke="#000" stroke-width="0.9"/><circle cx="132" cy="47.5" r="1.8" fill="#000"/><circle cx="156.7" cy="65" r="1.8" fill="#000"/><circle cx="182" cy="78.3" r="1.8" fill="#000"/></g>
<g transform="translate(1360,107) rotate(-45) scale(0.56) translate(-98.7,-112.9)"><g transform="translate(34.2,67.5)" fill="#000"><rect x="12.5" y="0" width="104.1" height="90" rx="17" mask="url(#mh)"/><rect x="0" y="69.2" width="130" height="20.8" rx="3"/><rect x="15.8" y="86" width="27.5" height="27.3" rx="2.2"/><rect x="85.8" y="86" width="28.4" height="27.3" rx="2.2"/></g><text x="169.2 219.8 272.5" y="162.8" style="font:bold 78px Liberation Sans,sans-serif" fill="#000" stroke="#000" stroke-width="5.4" stroke-linejoin="round">yug</text><polygon points="164.6,59.4 161.4,47 167.4,31.8 168.6,29.6 171.2,22.8 193,30 190.6,37.2 189.2,38.6 186.6,46.4" fill="#000"/><path d="M132 47.5C145 47 152 55 156.7 65C161 74 170 79 182 78.3M155.5 46L157.8 83" fill="none" stroke="#000" stroke-width="0.9"/><circle cx="132" cy="47.5" r="1.8" fill="#000"/><circle cx="156.7" cy="65" r="1.8" fill="#000"/><circle cx="182" cy="78.3" r="1.8" fill="#000"/></g>
<g transform="translate(1660,135) rotate(-45) scale(0.56) translate(-98.7,-112.9)"><g transform="translate(34.2,67.5)" fill="#000"><rect x="12.5" y="0" width="104.1" height="90" rx="17" mask="url(#mh)"/><rect x="0" y="69.2" width="130" height="20.8" rx="3"/><rect x="15.8" y="86" width="27.5" height="27.3" rx="2.2"/><rect x="85.8" y="86" width="28.4" height="27.3" rx="2.2"/></g><text x="169.2 219.8 272.5" y="162.8" style="font:bold 78px Liberation Sans,sans-serif" fill="#000" stroke="#000" stroke-width="5.4" stroke-linejoin="round">yug</text><polygon points="164.6,59.4 161.4,47 167.4,31.8 168.6,29.6 171.2,22.8 193,30 190.6,37.2 189.2,38.6 186.6,46.4" fill="#000"/><path d="M132 47.5C145 47 152 55 156.7 65C161 74 170 79 182 78.3M155.5 46L157.8 83" fill="none" stroke="#000" stroke-width="0.9"/><circle cx="132" cy="47.5" r="1.8" fill="#000"/><circle cx="156.7" cy="65" r="1.8" fill="#000"/><circle cx="182" cy="78.3" r="1.8" fill="#000"/></g>
<g transform="translate(1960,163) rotate(-45) scale(0.56) translate(-98.7,-112.9)"><g transform="translate(34.2,67.5)" fill="#000"><rect x="12.5" y="0" width="104.1" height="90" rx="17" mask="url(#mh)"/><rect x="0" y="69.2" width="130" height="20.8" rx="3"/><rect x="15.8" y="86" width="27.5" height="27.3" rx="2.2"/><rect x="85.8" y="86" width="28.4" height="27.3" rx="2.2"/></g><text x="169.2 219.8 272.5" y="162.8" style="font:bold 78px Liberation Sans,sans-serif" fill="#000" stroke="#000" stroke-width="5.4" stroke-linejoin="round">yug</text><polygon points="164.6,59.4 161.4,47 167.4,31.8 168.6,29.6 171.2,22.8 193,30 190.6,37.2 189.2,38.6 186.6,46.4" fill="#000"/><path d="M132 47.5C145 47 152 55 156.7 65C161 74 170 79 182 78.3M155.5 46L157.8 83" fill="none" stroke="#000" stroke-width="0.9"/><circle cx="132" cy="47.5" r="1.8" fill="#000"/><circle cx="156.7" cy="65" r="1.8" fill="#000"/><circle cx="182" cy="78.3" r="1.8" fill="#000"/></g>
<g transform="translate(191,296) rotate(-45) scale(0.56) translate(-98.7,-112.9)"><g transform="translate(34.2,67.5)" fill="#000"><rect x="12.5" y="0" width="104.1" height="90" rx="17" mask="url(#mh)"/><rect x="0" y="69.2" width="130" height="20.8" rx="3"/><rect x="15.8" y="86" width="27.5" height="27.3" rx="2.2"/><rect x="85.8" y="86" width="28.4" height="27.3" rx="2.2"/></g><text x="169.2 219.8 272.5" y="162.8" style="font:bold 78px Liberation Sans,sans-serif" fill="#000" stroke="#000" stroke-width="5.4" stroke-linejoin="round">yug</text><polygon points="164.6,59.4 161.4,47 167.4,31.8 168.6,29.6 171.2,22.8 193,30 190.6,37.2 189.2,38.6 186.6,46.4" fill="#000"/><path d="M132 47.5C145 47 152 55 156.7 65C161 74 170 79 182 78.3M155.5 46L157.8 83" fill="none" stroke="#000" stroke-width="0.9"/><circle cx="132" cy="47.5" r="1.8" fill="#000"/><circle cx="156.7" cy="65" r="1.8" fill="#000"/><circle cx="182" cy="78.3" r="1.8" fill="#000"/></g>
<g transform="translate(492,325) rotate(-45) scale(0.56) translate(-98.7,-112.9)"><g transform="translate(34.2,67.5)" fill="#000"><rect x="12.5" y="0" width="104.1" height="90" rx="17" mask="url(#mh)"/><rect x="0" y="69.2" width="130" height="20.8" rx="3"/><rect x="15.8" y="86" width="27.5" height="27.3" rx="2.2"/><rect x="85.8" y="86" width="28.4" height="27.3" rx="2.2"/></g><text x="169.2 219.8 272.5" y="162.8" style="font:bold 78px Liberation Sans,sans-serif" fill="#000" stroke="#000" stroke-width="5.4" stroke-linejoin="round">yug</text><polygon points="164.6,59.4 161.4,47 167.4,31.8 168.6,29.6 171.2,22.8 193,30 190.6,37.2 189.2,38.6 186.6,46.4" fill="#000"/><path d="M132 47.5C145 47 152 55 156.7 65C161 74 170 79 182 78.3M155.5 46L157.8 83" fill="none" stroke="#000" stroke-width="0.9"/><circle cx="132" cy="47.5" r="1.8" fill="#000"/><circle cx="156.7" cy="65" r="1.8" fill="#000"/><circle cx="182" cy="78.3" r="1.8" fill="#000"/></g>
<g transform="translate(795,350) rotate(-45) scale(0.56) translate(-98.7,-112.9)"><g transform="translate(34.2,67.5)" fill="#000"><rect x="12.5" y="0" width="104.1" height="90" rx="17" mask="url(#mh)"/><rect x="0" y="69.2" width="130" height="20.8" rx="3"/><rect x="15.8" y="86" width="27.5" height="27.3" rx="2.2"/><rect x="85.8" y="86" width="28.4" height="27.3" rx="2.2"/></g><text x="169.2 219.8 272.5" y="162.8" style="font:bold 78px Liberation Sans,sans-serif" fill="#000" stroke="#000" stroke-width="5.4" stroke-linejoin="round">yug</text><polygon points="164.6,59.4 161.4,47 167.4,31.8 168.6,29.6 171.2,22.8 193,30 190.6,37.2 189.2,38.6 186.6,46.4" fill="#000"/><path d="M132 47.5C145 47 152 55 156.7 65C161 74 170 79 182 78.3M155.5 46L157.8 83" fill="none" stroke="#000" stroke-width="0.9"/><circle cx="132" cy="47.5" r="1.8" fill="#000"/><circle cx="156.7" cy="65" r="1.8" fill="#000"/><circle cx="182" cy="78.3" r="1.8" fill="#000"/></g>
<g transform="translate(1087,382) rotate(-45) scale(0.56) translate(-98.7,-112.9)"><g transform="translate(34.2,67.5)" fill="#000"><rect x="12.5" y="0" width="104.1" height="90" rx="17" mask="url(#mh)"/><rect x="0" y="69.2" width="130" height="20.8" rx="3"/><rect x="15.8" y="86" width="27.5" height="27.3" rx="2.2"/><rect x="85.8" y="86" width="28.4" height="27.3" rx="2.2"/></g><text x="169.2 219.8 272.5" y="162.8" style="font:bold 78px Liberation Sans,sans-serif" fill="#000" stroke="#000" stroke-width="5.4" stroke-linejoin="round">yug</text><polygon points="164.6,59.4 161.4,47 167.4,31.8 168.6,29.6 171.2,22.8 193,30 190.6,37.2 189.2,38.6 186.6,46.4" fill="#000"/><path d="M132 47.5C145 47 152 55 156.7 65C161 74 170 79 182 78.3M155.5 46L157.8 83" fill="none" stroke="#000" stroke-width="0.9"/><circle cx="132" cy="47.5" r="1.8" fill="#000"/><circle cx="156.7" cy="65" r="1.8" fill="#000"/><circle cx="182" cy="78.3" r="1.8" fill="#000"/></g>
<g transform="translate(1395,405) rotate(-45) scale(0.56) translate(-98.7,-112.9)"><g transform="translate(34.2,67.5)" fill="#000"><rect x="12.5" y="0" width="104.1" height="90" rx="17" mask="url(#mh)"/><rect x="0" y="69.2" width="130" height="20.8" rx="3"/><rect x="15.8" y="86" width="27.5" height="27.3" rx="2.2"/><rect x="85.8" y="86" width="28.4" height="27.3" rx="2.2"/></g><text x="169.2 219.8 272.5" y="162.8" style="font:bold 78px Liberation Sans,sans-serif" fill="#000" stroke="#000" stroke-width="5.4" stroke-linejoin="round">yug</text><polygon points="164.6,59.4 161.4,47 167.4,31.8 168.6,29.6 171.2,22.8 193,30 190.6,37.2 189.2,38.6 186.6,46.4" fill="#000"/><path d="M132 47.5C145 47 152 55 156.7 65C161 74 170 79 182 78.3M155.5 46L157.8 83" fill="none" stroke="#000" stroke-width="0.9"/><circle cx="132" cy="47.5" r="1.8" fill="#000"/><circle cx="156.7" cy="65" r="1.8" fill="#000"/><circle cx="182" cy="78.3" r="1.8" fill="#000"/></g>
<g transform="translate(1700,440) rotate(-45) scale(0.56) translate(-98.7,-112.9)"><g transform="translate(34.2,67.5)" fill="#000"><rect x="12.5" y="0" width="104.1" height="90" rx="17" mask="url(#mh)"/><rect x="0" y="69.2" width="130" height="20.8" rx="3"/><rect x="15.8" y="86" width="27.5" height="27.3" rx="2.2"/><rect x="85.8" y="86" width="28.4" height="27.3" rx="2.2"/></g><text x="169.2 219.8 272.5" y="162.8" style="font:bold 78px Liberation Sans,sans-serif" fill="#000" stroke="#000" stroke-width="5.4" stroke-linejoin="round">yug</text><polygon points="164.6,59.4 161.4,47 167.4,31.8 168.6,29.6 171.2,22.8 193,30 190.6,37.2 189.2,38.6 186.6,46.4" fill="#000"/><path d="M132 47.5C145 47 152 55 156.7 65C161 74 170 79 182 78.3M155.5 46L157.8 83" fill="none" stroke="#000" stroke-width="0.9"/><circle cx="132" cy="47.5" r="1.8" fill="#000"/><circle cx="156.7" cy="65" r="1.8" fill="#000"/><circle cx="182" cy="78.3" r="1.8" fill="#000"/></g>
<g transform="translate(-70,580) rotate(-45) scale(0.56) translate(-98.7,-112.9)"><g transform="translate(34.2,67.5)" fill="#000"><rect x="12.5" y="0" width="104.1" height="90" rx="17" mask="url(#mh)"/><rect x="0" y="69.2" width="130" height="20.8" rx="3"/><rect x="15.8" y="86" width="27.5" height="27.3" rx="2.2"/><rect x="85.8" y="86" width="28.4" height="27.3" rx="2.2"/></g><text x="169.2 219.8 272.5" y="162.8" style="font:bold 78px Liberation Sans,sans-serif" fill="#000" stroke="#000" stroke-width="5.4" stroke-linejoin="round">yug</text><polygon points="164.6,59.4 161.4,47 167.4,31.8 168.6,29.6 171.2,22.8 193,30 190.6,37.2 189.2,38.6 186.6,46.4" fill="#000"/><path d="M132 47.5C145 47 152 55 156.7 65C161 74 170 79 182 78.3M155.5 46L157.8 83" fill="none" stroke="#000" stroke-width="0.9"/><circle cx="132" cy="47.5" r="1.8" fill="#000"/><circle cx="156.7" cy="65" r="1.8" fill="#000"/><circle cx="182" cy="78.3" r="1.8" fill="#000"/></g>
<g transform="translate(227,605) rotate(-45) scale(0.56) translate(-98.7,-112.9)"><g transform="translate(34.2,67.5)" fill="#000"><rect x="12.5" y="0" width="104.1" height="90" rx="17" mask="url(#mh)"/><rect x="0" y="69.2" width="130" height="20.8" rx="3"/><rect x="15.8" y="86" width="27.5" height="27.3" rx="2.2"/><rect x="85.8" y="86" width="28.4" height="27.3" rx="2.2"/></g><text x="169.2 219.8 272.5" y="162.8" style="font:bold 78px Liberation Sans,sans-serif" fill="#000" stroke="#000" stroke-width="5.4" stroke-linejoin="round">yug</text><polygon points="164.6,59.4 161.4,47 167.4,31.8 168.6,29.6 171.2,22.8 193,30 190.6,37.2 189.2,38.6 186.6,46.4" fill="#000"/><path d="M132 47.5C145 47 152 55 156.7 65C161 74 170 79 182 78.3M155.5 46L157.8 83" fill="none" stroke="#000" stroke-width="0.9"/><circle cx="132" cy="47.5" r="1.8" fill="#000"/><circle cx="156.7" cy="65" r="1.8" fill="#000"/><circle cx="182" cy="78.3" r="1.8" fill="#000"/></g>
<g transform="translate(525,627) rotate(-45) scale(0.56) translate(-98.7,-112.9)"><g transform="translate(34.2,67.5)" fill="#000"><rect x="12.5" y="0" width="104.1" height="90" rx="17" mask="url(#mh)"/><rect x="0" y="69.2" width="130" height="20.8" rx="3"/><rect x="15.8" y="86" width="27.5" height="27.3" rx="2.2"/><rect x="85.8" y="86" width="28.4" height="27.3" rx="2.2"/></g><text x="169.2 219.8 272.5" y="162.8" style="font:bold 78px Liberation Sans,sans-serif" fill="#000" stroke="#000" stroke-width="5.4" stroke-linejoin="round">yug</text><polygon points="164.6,59.4 161.4,47 167.4,31.8 168.6,29.6 171.2,22.8 193,30 190.6,37.2 189.2,38.6 186.6,46.4" fill="#000"/><path d="M132 47.5C145 47 152 55 156.7 65C161 74 170 79 182 78.3M155.5 46L157.8 83" fill="none" stroke="#000" stroke-width="0.9"/><circle cx="132" cy="47.5" r="1.8" fill="#000"/><circle cx="156.7" cy="65" r="1.8" fill="#000"/><circle cx="182" cy="78.3" r="1.8" fill="#000"/></g>
<g transform="translate(820,657) rotate(-45) scale(0.56) translate(-98.7,-112.9)"><g transform="translate(34.2,67.5)" fill="#000"><rect x="12.5" y="0" width="104.1" height="90" rx="17" mask="url(#mh)"/><rect x="0" y="69.2" width="130" height="20.8" rx="3"/><rect x="15.8" y="86" width="27.5" height="27.3" rx="2.2"/><rect x="85.8" y="86" width="28.4" height="27.3" rx="2.2"/></g><text x="169.2 219.8 272.5" y="162.8" style="font:bold 78px Liberation Sans,sans-serif" fill="#000" stroke="#000" stroke-width="5.4" stroke-linejoin="round">yug</text><polygon points="164.6,59.4 161.4,47 167.4,31.8 168.6,29.6 171.2,22.8 193,30 190.6,37.2 189.2,38.6 186.6,46.4" fill="#000"/><path d="M132 47.5C145 47 152 55 156.7 65C161 74 170 79 182 78.3M155.5 46L157.8 83" fill="none" stroke="#000" stroke-width="0.9"/><circle cx="132" cy="47.5" r="1.8" fill="#000"/><circle cx="156.7" cy="65" r="1.8" fill="#000"/><circle cx="182" cy="78.3" r="1.8" fill="#000"/></g>
<g transform="translate(1110,675) rotate(-45) scale(0.56) translate(-98.7,-112.9)"><g transform="translate(34.2,67.5)" fill="#000"><rect x="12.5" y="0" width="104.1" height="90" rx="17" mask="url(#mh)"/><rect x="0" y="69.2" width="130" height="20.8" rx="3"/><rect x="15.8" y="86" width="27.5" height="27.3" rx="2.2"/><rect x="85.8" y="86" width="28.4" height="27.3" rx="2.2"/></g><text x="169.2 219.8 272.5" y="162.8" style="font:bold 78px Liberation Sans,sans-serif" fill="#000" stroke="#000" stroke-width="5.4" stroke-linejoin="round">yug</text><polygon points="164.6,59.4 161.4,47 167.4,31.8 168.6,29.6 171.2,22.8 193,30 190.6,37.2 189.2,38.6 186.6,46.4" fill="#000"/><path d="M132 47.5C145 47 152 55 156.7 65C161 74 170 79 182 78.3M155.5 46L157.8 83" fill="none" stroke="#000" stroke-width="0.9"/><circle cx="132" cy="47.5" r="1.8" fill="#000"/><circle cx="156.7" cy="65" r="1.8" fill="#000"/><circle cx="182" cy="78.3" r="1.8" fill="#000"/></g>
<g transform="translate(1410,700) rotate(-45) scale(0.56) translate(-98.7,-112.9)"><g transform="translate(34.2,67.5)" fill="#000"><rect x="12.5" y="0" width="104.1" height="90" rx="17" mask="url(#mh)"/><rect x="0" y="69.2" width="130" height="20.8" rx="3"/><rect x="15.8" y="86" width="27.5" height="27.3" rx="2.2"/><rect x="85.8" y="86" width="28.4" height="27.3" rx="2.2"/></g><text x="169.2 219.8 272.5" y="162.8" style="font:bold 78px Liberation Sans,sans-serif" fill="#000" stroke="#000" stroke-width="5.4" stroke-linejoin="round">yug</text><polygon points="164.6,59.4 161.4,47 167.4,31.8 168.6,29.6 171.2,22.8 193,30 190.6,37.2 189.2,38.6 186.6,46.4" fill="#000"/><path d="M132 47.5C145 47 152 55 156.7 65C161 74 170 79 182 78.3M155.5 46L157.8 83" fill="none" stroke="#000" stroke-width="0.9"/><circle cx="132" cy="47.5" r="1.8" fill="#000"/><circle cx="156.7" cy="65" r="1.8" fill="#000"/><circle cx="182" cy="78.3" r="1.8" fill="#000"/></g>
<g transform="translate(1715,725) rotate(-45) scale(0.56) translate(-98.7,-112.9)"><g transform="translate(34.2,67.5)" fill="#000"><rect x="12.5" y="0" width="104.1" height="90" rx="17" mask="url(#mh)"/><rect x="0" y="69.2" width="130" height="20.8" rx="3"/><rect x="15.8" y="86" width="27.5" height="27.3" rx="2.2"/><rect x="85.8" y="86" width="28.4" height="27.3" rx="2.2"/></g><text x="169.2 219.8 272.5" y="162.8" style="font:bold 78px Liberation Sans,sans-serif" fill="#000" stroke="#000" stroke-width="5.4" stroke-linejoin="round">yug</text><polygon points="164.6,59.4 161.4,47 167.4,31.8 168.6,29.6 171.2,22.8 193,30 190.6,37.2 189.2,38.6 186.6,46.4" fill="#000"/><path d="M132 47.5C145 47 152 55 156.7 65C161 74 170 79 182 78.3M155.5 46L157.8 83" fill="none" stroke="#000" stroke-width="0.9"/><circle cx="132" cy="47.5" r="1.8" fill="#000"/><circle cx="156.7" cy="65" r="1.8" fill="#000"/><circle cx="182" cy="78.3" r="1.8" fill="#000"/></g>
<g transform="translate(-55,890) rotate(-45) scale(0.56) translate(-98.7,-112.9)"><g transform="translate(34.2,67.5)" fill="#000"><rect x="12.5" y="0" width="104.1" height="90" rx="17" mask="url(#mh)"/><rect x="0" y="69.2" width="130" height="20.8" rx="3"/><rect x="15.8" y="86" width="27.5" height="27.3" rx="2.2"/><rect x="85.8" y="86" width="28.4" height="27.3" rx="2.2"/></g><text x="169.2 219.8 272.5" y="162.8" style="font:bold 78px Liberation Sans,sans-serif" fill="#000" stroke="#000" stroke-width="5.4" stroke-linejoin="round">yug</text><polygon points="164.6,59.4 161.4,47 167.4,31.8 168.6,29.6 171.2,22.8 193,30 190.6,37.2 189.2,38.6 186.6,46.4" fill="#000"/><path d="M132 47.5C145 47 152 55 156.7 65C161 74 170 79 182 78.3M155.5 46L157.8 83" fill="none" stroke="#000" stroke-width="0.9"/><circle cx="132" cy="47.5" r="1.8" fill="#000"/><circle cx="156.7" cy="65" r="1.8" fill="#000"/><circle cx="182" cy="78.3" r="1.8" fill="#000"/></g>
<g transform="translate(245,915) rotate(-45) scale(0.56) translate(-98.7,-112.9)"><g transform="translate(34.2,67.5)" fill="#000"><rect x="12.5" y="0" width="104.1" height="90" rx="17" mask="url(#mh)"/><rect x="0" y="69.2" width="130" height="20.8" rx="3"/><rect x="15.8" y="86" width="27.5" height="27.3" rx="2.2"/><rect x="85.8" y="86" width="28.4" height="27.3" rx="2.2"/></g><text x="169.2 219.8 272.5" y="162.8" style="font:bold 78px Liberation Sans,sans-serif" fill="#000" stroke="#000" stroke-width="5.4" stroke-linejoin="round">yug</text><polygon points="164.6,59.4 161.4,47 167.4,31.8 168.6,29.6 171.2,22.8 193,30 190.6,37.2 189.2,38.6 186.6,46.4" fill="#000"/><path d="M132 47.5C145 47 152 55 156.7 65C161 74 170 79 182 78.3M155.5 46L157.8 83" fill="none" stroke="#000" stroke-width="0.9"/><circle cx="132" cy="47.5" r="1.8" fill="#000"/><circle cx="156.7" cy="65" r="1.8" fill="#000"/><circle cx="182" cy="78.3" r="1.8" fill="#000"/></g>
<g transform="translate(555,910) rotate(-45) scale(0.56) translate(-98.7,-112.9)"><g transform="translate(34.2,67.5)" fill="#000"><rect x="12.5" y="0" width="104.1" height="90" rx="17" mask="url(#mh)"/><rect x="0" y="69.2" width="130" height="20.8" rx="3"/><rect x="15.8" y="86" width="27.5" height="27.3" rx="2.2"/><rect x="85.8" y="86" width="28.4" height="27.3" rx="2.2"/></g><text x="169.2 219.8 272.5" y="162.8" style="font:bold 78px Liberation Sans,sans-serif" fill="#000" stroke="#000" stroke-width="5.4" stroke-linejoin="round">yug</text><polygon points="164.6,59.4 161.4,47 167.4,31.8 168.6,29.6 171.2,22.8 193,30 190.6,37.2 189.2,38.6 186.6,46.4" fill="#000"/><path d="M132 47.5C145 47 152 55 156.7 65C161 74 170 79 182 78.3M155.5 46L157.8 83" fill="none" stroke="#000" stroke-width="0.9"/><circle cx="132" cy="47.5" r="1.8" fill="#000"/><circle cx="156.7" cy="65" r="1.8" fill="#000"/><circle cx="182" cy="78.3" r="1.8" fill="#000"/></g>
<g transform="translate(850,945) rotate(-45) scale(0.56) translate(-98.7,-112.9)"><g transform="translate(34.2,67.5)" fill="#000"><rect x="12.5" y="0" width="104.1" height="90" rx="17" mask="url(#mh)"/><rect x="0" y="69.2" width="130" height="20.8" rx="3"/><rect x="15.8" y="86" width="27.5" height="27.3" rx="2.2"/><rect x="85.8" y="86" width="28.4" height="27.3" rx="2.2"/></g><text x="169.2 219.8 272.5" y="162.8" style="font:bold 78px Liberation Sans,sans-serif" fill="#000" stroke="#000" stroke-width="5.4" stroke-linejoin="round">yug</text><polygon points="164.6,59.4 161.4,47 167.4,31.8 168.6,29.6 171.2,22.8 193,30 190.6,37.2 189.2,38.6 186.6,46.4" fill="#000"/><path d="M132 47.5C145 47 152 55 156.7 65C161 74 170 79 182 78.3M155.5 46L157.8 83" fill="none" stroke="#000" stroke-width="0.9"/><circle cx="132" cy="47.5" r="1.8" fill="#000"/><circle cx="156.7" cy="65" r="1.8" fill="#000"/><circle cx="182" cy="78.3" r="1.8" fill="#000"/></g>
<g transform="translate(1132,975) rotate(-45) scale(0.56) translate(-98.7,-112.9)"><g transform="translate(34.2,67.5)" fill="#000"><rect x="12.5" y="0" width="104.1" height="90" rx="17" mask="url(#mh)"/><rect x="0" y="69.2" width="130" height="20.8" rx="3"/><rect x="15.8" y="86" width="27.5" height="27.3" rx="2.2"/><rect x="85.8" y="86" width="28.4" height="27.3" rx="2.2"/></g><text x="169.2 219.8 272.5" y="162.8" style="font:bold 78px Liberation Sans,sans-serif" fill="#000" stroke="#000" stroke-width="5.4" stroke-linejoin="round">yug</text><polygon points="164.6,59.4 161.4,47 167.4,31.8 168.6,29.6 171.2,22.8 193,30 190.6,37.2 189.2,38.6 186.6,46.4" fill="#000"/><path d="M132 47.5C145 47 152 55 156.7 65C161 74 170 79 182 78.3M155.5 46L157.8 83" fill="none" stroke="#000" stroke-width="0.9"/><circle cx="132" cy="47.5" r="1.8" fill="#000"/><circle cx="156.7" cy="65" r="1.8" fill="#000"/><circle cx="182" cy="78.3" r="1.8" fill="#000"/></g>
<g transform="translate(1430,995) rotate(-45) scale(0.56) translate(-98.7,-112.9)"><g transform="translate(34.2,67.5)" fill="#000"><rect x="12.5" y="0" width="104.1" height="90" rx="17" mask="url(#mh)"/><rect x="0" y="69.2" width="130" height="20.8" rx="3"/><rect x="15.8" y="86" width="27.5" height="27.3" rx="2.2"/><rect x="85.8" y="86" width="28.4" height="27.3" rx="2.2"/></g><text x="169.2 219.8 272.5" y="162.8" style="font:bold 78px Liberation Sans,sans-serif" fill="#000" stroke="#000" stroke-width="5.4" stroke-linejoin="round">yug</text><polygon points="164.6,59.4 161.4,47 167.4,31.8 168.6,29.6 171.2,22.8 193,30 190.6,37.2 189.2,38.6 186.6,46.4" fill="#000"/><path d="M132 47.5C145 47 152 55 156.7 65C161 74 170 79 182 78.3M155.5 46L157.8 83" fill="none" stroke="#000" stroke-width="0.9"/><circle cx="132" cy="47.5" r="1.8" fill="#000"/><circle cx="156.7" cy="65" r="1.8" fill="#000"/><circle cx="182" cy="78.3" r="1.8" fill="#000"/></g>
<g transform="translate(1745,1020) rotate(-45) scale(0.56) translate(-98.7,-112.9)"><g transform="translate(34.2,67.5)" fill="#000"><rect x="12.5" y="0" width="104.1" height="90" rx="17" mask="url(#mh)"/><rect x="0" y="69.2" width="130" height="20.8" rx="3"/><rect x="15.8" y="86" width="27.5" height="27.3" rx="2.2"/><rect x="85.8" y="86" width="28.4" height="27.3" rx="2.2"/></g><text x="169.2 219.8 272.5" y="162.8" style="font:bold 78px Liberation Sans,sans-serif" fill="#000" stroke="#000" stroke-width="5.4" stroke-linejoin="round">yug</text><polygon points="164.6,59.4 161.4,47 167.4,31.8 168.6,29.6 171.2,22.8 193,30 190.6,37.2 189.2,38.6 186.6,46.4" fill="#000"/><path d="M132 47.5C145 47 152 55 156.7 65C161 74 170 79 182 78.3M155.5 46L157.8 83" fill="none" stroke="#000" stroke-width="0.9"/><circle cx="132" cy="47.5" r="1.8" fill="#000"/><circle cx="156.7" cy="65" r="1.8" fill="#000"/><circle cx="182" cy="78.3" r="1.8" fill="#000"/></g>
</svg>
<svg style="left:0;top:0;filter:drop-shadow(0 0 2.5px rgba(255,255,255,.85)) drop-shadow(0 0 6px rgba(255,255,255,.4))" width="340" height="200" viewBox="0 0 340 200">
<defs><linearGradient id="gA" gradientUnits="userSpaceOnUse" x1="0" y1="0" x2="0" y2="113.3"><stop offset="0" stop-color="#10b4ff"/><stop offset="0.45" stop-color="#5a7cff"/><stop offset="1" stop-color="#b52efc"/></linearGradient><linearGradient id="gY" gradientUnits="userSpaceOnUse" x1="0" y1="118" x2="0" y2="184"><stop offset="0" stop-color="#ffc616"/><stop offset="1" stop-color="#ff8810"/></linearGradient></defs><g transform="translate(34.2,67.5)" fill="url(#gA)"><rect x="12.5" y="0" width="104.1" height="90" rx="17" mask="url(#mh)"/><rect x="0" y="69.2" width="130" height="20.8" rx="3"/><rect x="15.8" y="86" width="27.5" height="27.3" rx="2.2"/><rect x="85.8" y="86" width="28.4" height="27.3" rx="2.2"/></g><text x="169.2 219.8 272.5" y="162.8" style="font:bold 78px Liberation Sans,sans-serif" fill="url(#gY)" stroke="url(#gY)" stroke-width="5.4" stroke-linejoin="round">yug</text><path d="M132 47.5C145 47 152 55 156.7 65C161 74 170 79 182 78.3M155.5 46L157.8 83" fill="none" stroke="#7f8fd0" stroke-width="0.8"/><circle cx="132" cy="47.5" r="1.9" fill="#fff"/><circle cx="156.7" cy="65" r="1.9" fill="#fff"/><circle cx="182" cy="78.3" r="1.9" fill="#fff"/><polygon points="164.6,59.4 161.4,47 167.4,31.8 178,35.3" fill="#a43cf4"/><polygon points="164.6,59.4 178,35.3 189.2,38.6 186.6,46.4" fill="#3d8cf6"/><polygon points="168.6,29.6 171.2,22.8 186,27.7 183.6,34.6" fill="#ff9d12"/><polygon points="186,27.7 193,30 190.6,37.2 183.6,34.6" fill="#3d7fe0"/><line x1="164.8" y1="59" x2="175" y2="41.7" stroke="#fff" stroke-width="1.2"/><circle cx="175" cy="41.7" r="1.9" fill="#fff"/>
</svg>
<svg style="left:840px;top:1000px" width="320" height="60" viewBox="840 1000 320 60">
<defs><linearGradient id="gA2" gradientUnits="userSpaceOnUse" x1="0" y1="0" x2="0" y2="113.3"><stop offset="0" stop-color="#10b4ff"/><stop offset="1" stop-color="#b52efc"/></linearGradient></defs>
<circle cx="871" cy="1029.3" r="21.7" fill="#ffc21c"/>
<g transform="translate(857.3,1021.6) scale(0.18)" fill="url(#gA2)"><rect x="12.5" y="0" width="104.1" height="90" rx="17" mask="url(#mh)"/><rect x="0" y="69.2" width="130" height="20.8" rx="3"/><rect x="15.8" y="86" width="27.5" height="27.3" rx="2.2"/><rect x="85.8" y="86" width="28.4" height="27.3" rx="2.2"/></g>
<polygon points="880.6,1019.2 879.9,1016.8 881.6,1013.4 885,1014.6 884.2,1017.4" fill="#7a4df0"/><polygon points="881.8,1013 882.4,1011.4 885.8,1012.6 885.2,1014.4" fill="#ff7a10"/>
<text x="903" y="1038.5" style="font:bold 27px Liberation Sans,sans-serif" fill="#ffffff" stroke="#3a3a3a" stroke-width="2.2" stroke-opacity="0.55" paint-order="stroke" textLength="240" lengthAdjust="spacing">www.toonyug.com</text>
</svg>
<!-- 90_bottom.py -->
<div class="abs" style="left:0px;top:1078.3px;width:1920px;height:1.7px;background:#2f86cc;"></div>
</body>
</html>
